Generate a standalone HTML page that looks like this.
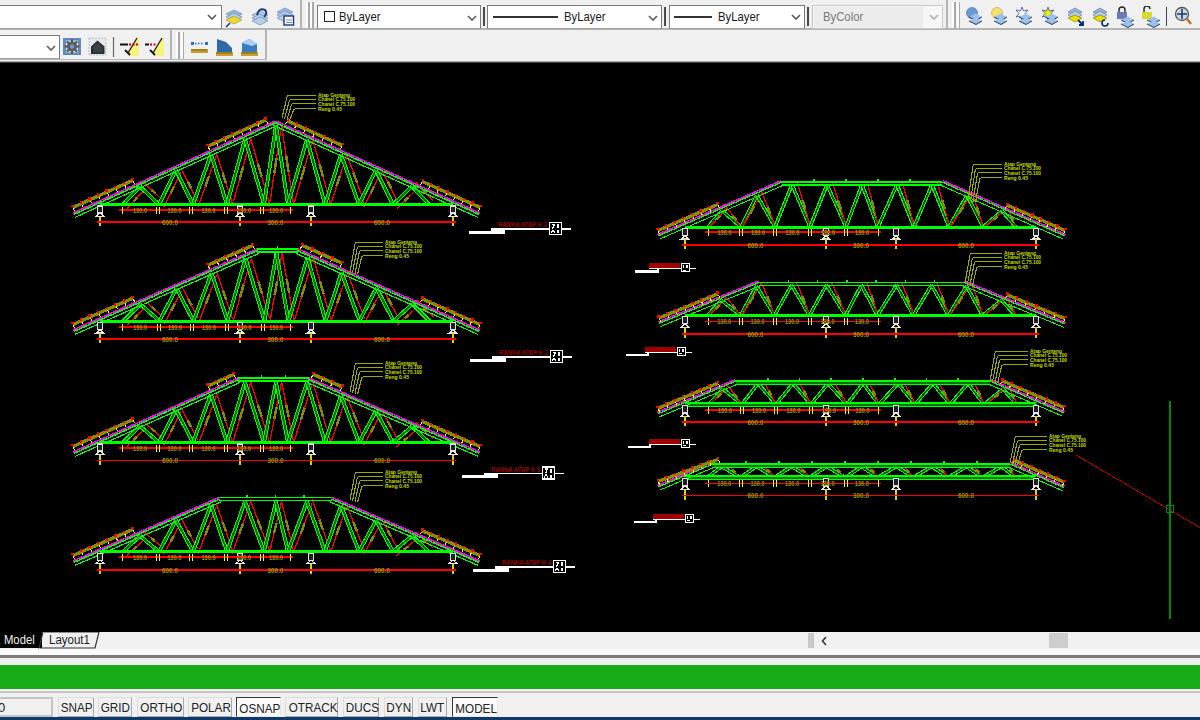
<!DOCTYPE html>
<html><head><meta charset="utf-8">
<style>
*{box-sizing:border-box}
html,body{margin:0;padding:0;width:1200px;height:720px;overflow:hidden;background:#f0f0f0;font-family:"Liberation Sans",sans-serif;}
.abs{position:absolute}
.combo{position:absolute;background:#fff;border:1px solid #7a7a7a;border-bottom-color:#a0a0a0}
.chev{position:absolute;width:6px;height:6px;border-right:1.3px solid #555;border-bottom:1.3px solid #555;transform:rotate(45deg)}
.ctext{position:absolute;font-size:13px;color:#1a1a1a;top:3px;transform:scaleX(.87);transform-origin:0 0;white-space:nowrap}
.vsep{position:absolute;width:1px;background:#a0a0a0}
.grip{position:absolute;width:3.5px;background:linear-gradient(to right,#fbfbfb 0 2px,#a8a8a8 2px 3.5px)}
.btn{position:absolute;top:697px;height:20px;border:1px solid #dcdcdc;border-right-color:#a9a9a9;border-bottom-color:#a9a9a9;background:#f0f0f0;font-size:13px;color:#222;text-align:center;line-height:19px;white-space:nowrap}
.btn span{display:inline-block;transform:scaleX(.9)}
.btn.on{border:1px solid #e8e8e8;border-top:1.5px solid #3a3a3a;border-left:1.5px solid #3a3a3a;background:#fafafa;line-height:21px}
#cv{position:absolute;left:0;top:62px;width:1200px;height:570px;background:#000}
svg text{font-family:"Liberation Sans",sans-serif}
</style></head><body>
<!-- toolbar row 1 -->
<div class="abs" style="left:0;top:28px;width:1200px;height:1.5px;background:#b4b4b4"></div>
<div class="combo" style="left:-2px;top:5px;width:224px;height:24px"></div>
<!-- layer icons row1 -->
<svg class="abs" style="left:224px;top:6px" width="72" height="22" viewBox="0 0 72 22">
 <g><path d="M2 8 L10 4 L18 8 L10 12Z" fill="#9ab8de" stroke="#5a7ab0" stroke-width=".6"/><path d="M2 11 L10 7 L18 11 L10 15Z" fill="#b8cfe8" stroke="#5a7ab0" stroke-width=".6"/><path d="M2 14 L10 10 L18 14 L10 18Z" fill="#e8d83a" stroke="#a09000" stroke-width=".6"/><path d="M2 21 L6 17" stroke="#1a3a7a" stroke-width="1.6"/></g>
 <g transform="translate(26,0)"><path d="M2 9 L10 5 L18 9 L10 13Z" fill="#b8cfe8" stroke="#5a7ab0" stroke-width=".6"/><path d="M2 12 L10 8 L18 12 L10 16Z" fill="#b8cfe8" stroke="#5a7ab0" stroke-width=".6"/><path d="M2 15 L10 11 L18 15 L10 19Z" fill="#b8cfe8" stroke="#5a7ab0" stroke-width=".6"/><path d="M7 9 Q9 1 15 4 Q18 7 14 11" fill="none" stroke="#1a3a7a" stroke-width="2"/></g>
 <g transform="translate(52,0)"><path d="M1 6 L9 2 L17 6 L9 10Z" fill="#9ab8de" stroke="#5a7ab0" stroke-width=".6"/><path d="M1 9 L9 5 L17 9 L9 13Z" fill="#b8cfe8" stroke="#5a7ab0" stroke-width=".6"/><path d="M1 12 L9 8 L17 12 L9 16Z" fill="#b8cfe8" stroke="#5a7ab0" stroke-width=".6"/><rect x="8" y="10" width="9.5" height="9" fill="#fff" stroke="#1a3a7a" stroke-width="1.4"/><line x1="10" y1="14" x2="16" y2="14" stroke="#6a8ac0"/><line x1="10" y1="16.5" x2="16" y2="16.5" stroke="#6a8ac0"/></g>
</svg>
<div class="vsep" style="left:300px;top:0;height:29px;background:#b4b4b4;width:2px"></div>
<div class="combo" style="left:317px;top:5px;width:164px;height:24px">
  <div class="abs" style="left:6px;top:5px;width:11px;height:11px;border:1.3px solid #222"></div>
  <div class="ctext" style="left:21px">ByLayer</div>
  
</div>
<div class="vsep" style="left:483px;top:7px;height:19px;width:1.5px;background:#4a4a4a"></div>
<div class="combo" style="left:487px;top:5px;width:175px;height:24px">
  <div class="abs" style="left:5px;top:10px;width:65px;height:1.5px;background:#333"></div>
  <div class="ctext" style="left:76px">ByLayer</div>
  
</div>
<div class="vsep" style="left:664px;top:7px;height:19px;width:1.5px;background:#4a4a4a"></div>
<div class="combo" style="left:669px;top:5px;width:136px;height:24px">
  <div class="abs" style="left:4px;top:10px;width:38px;height:1.5px;background:#333"></div>
  <div class="ctext" style="left:48px">ByLayer</div>
  
</div>
<div class="vsep" style="left:807px;top:7px;height:19px;width:1.5px;background:#4a4a4a"></div>
<div class="combo" style="left:812px;top:5px;width:131px;height:24px;border-color:#c8c8c8;background:#f6f6f6">
  <div class="abs" style="left:1px;top:1px;width:109px;height:21px;background:#ececec"></div>
  <div class="ctext" style="left:10px;color:#7a7a7a">ByColor</div>
  
</div>
<div class="vsep" style="left:946px;top:0;height:29px;background:#b4b4b4;width:2px"></div>
<svg class="abs" style="left:964px;top:6px" width="236" height="22" viewBox="0 0 236 22">
 <g><circle cx="8" cy="7" r="5.5" fill="#6a9ad0" stroke="#3a6aa0" stroke-width=".6"/><g transform="translate(6,6)"><path d="M-1 5 L6 1.5 L12 5 L6 8.5Z" fill="#9cc0ea"/><path d="M-1 5 L6 8.5 L12 5" fill="none" stroke="#2a3a5a" stroke-width="1"/><path d="M-1 9 L6 5.5 L12 9 L6 12.5Z" fill="#9cc0ea"/><path d="M-1 9 L6 12.5 L12 9" fill="none" stroke="#2a3a5a" stroke-width="1"/></g></g>
 <g transform="translate(25,0)"><circle cx="8" cy="7" r="5.5" fill="#f4e070" stroke="#b0a040" stroke-width=".6"/><g transform="translate(6,6)"><path d="M-1 5 L6 1.5 L12 5 L6 8.5Z" fill="#9cc0ea"/><path d="M-1 5 L6 8.5 L12 5" fill="none" stroke="#2a3a5a" stroke-width="1"/><path d="M-1 9 L6 5.5 L12 9 L6 12.5Z" fill="#9cc0ea"/><path d="M-1 9 L6 12.5 L12 9" fill="none" stroke="#2a3a5a" stroke-width="1"/></g></g>
 <g transform="translate(50,0)"><path d="M8 1 L9.5 5 L14 4 L11 7.5 L14 11 L9.5 10 L8 14 L6.5 10 L2 11 L5 7.5 L2 4 L6.5 5Z" fill="#fff" stroke="#4a5ab0" stroke-width=".9"/><g transform="translate(6,6)"><path d="M-1 5 L6 1.5 L12 5 L6 8.5Z" fill="#9cc0ea"/><path d="M-1 5 L6 8.5 L12 5" fill="none" stroke="#2a3a5a" stroke-width="1"/><path d="M-1 9 L6 5.5 L12 9 L6 12.5Z" fill="#9cc0ea"/><path d="M-1 9 L6 12.5 L12 9" fill="none" stroke="#2a3a5a" stroke-width="1"/></g></g>
 <g transform="translate(76,0)"><path d="M8 1 L9.5 5 L14 4 L11 7.5 L14 11 L9.5 10 L8 14 L6.5 10 L2 11 L5 7.5 L2 4 L6.5 5Z" fill="#f0f000" stroke="#4a5ab0" stroke-width=".9"/><g transform="translate(6,6)"><path d="M-1 5 L6 1.5 L12 5 L6 8.5Z" fill="#9cc0ea"/><path d="M-1 5 L6 8.5 L12 5" fill="none" stroke="#2a3a5a" stroke-width="1"/><path d="M-1 9 L6 5.5 L12 9 L6 12.5Z" fill="#9cc0ea"/><path d="M-1 9 L6 12.5 L12 9" fill="none" stroke="#2a3a5a" stroke-width="1"/></g></g>
 <g transform="translate(102,0)"><path d="M2 6 L9 2 L16 6 L9 10Z" fill="#9ab8de" stroke="#3a5a90" stroke-width=".5"/><path d="M2 9 L9 5 L16 9 L9 13Z" fill="#b8cfe8" stroke="#3a5a90" stroke-width=".5"/><path d="M2 12 L9 9 L16 12 L9 16Z" fill="#e8e000" stroke="#807000" stroke-width=".6"/><path d="M12 14 L17 19 M17 15 L17 19 L13 19" stroke="#0a2a6a" stroke-width="1.8" fill="none"/></g>
 <g transform="translate(127,0)"><path d="M2 6 L9 2 L16 6 L9 10Z" fill="#9ab8de" stroke="#3a5a90" stroke-width=".5"/><path d="M2 9 L9 5 L16 9 L9 13Z" fill="#b8cfe8" stroke="#3a5a90" stroke-width=".5"/><path d="M2 12 L9 9 L16 12 L9 16Z" fill="#e8e000" stroke="#807000" stroke-width=".6"/><path d="M14 14 A3 3 0 1 0 17 17" stroke="#0a2a6a" stroke-width="1.6" fill="none"/></g>
 <g transform="translate(152,0)"><path d="M3 6 V4 A3 3 0 0 1 9 4 V6" stroke="#222" stroke-width="1.4" fill="none"/><rect x="1" y="6" width="10" height="7" fill="#6a7ab8"/><g transform="translate(6,9)"><path d="M-1 5 L6 1.5 L12 5 L6 8.5Z" fill="#9cc0ea"/><path d="M-1 5 L6 8.5 L12 5" fill="none" stroke="#2a3a5a" stroke-width="1"/><path d="M-1 9 L6 5.5 L12 9 L6 12.5Z" fill="#9cc0ea"/><path d="M-1 9 L6 12.5 L12 9" fill="none" stroke="#2a3a5a" stroke-width="1"/></g></g>
 <g transform="translate(177,0)"><path d="M3 6 V3 A3 3 0 0 1 9 3" stroke="#222" stroke-width="1.4" fill="none"/><rect x="1" y="6" width="10" height="7" fill="#d8d830"/><g transform="translate(7,9)"><path d="M-1 5 L6 1.5 L12 5 L6 8.5Z" fill="#9cc0ea"/><path d="M-1 5 L6 8.5 L12 5" fill="none" stroke="#2a3a5a" stroke-width="1"/><path d="M-1 9 L6 5.5 L12 9 L6 12.5Z" fill="#9cc0ea"/><path d="M-1 9 L6 12.5 L12 9" fill="none" stroke="#2a3a5a" stroke-width="1"/></g></g>
 <line x1="202.5" y1="1" x2="202.5" y2="20" stroke="#444" stroke-width="1"/>
 <g transform="translate(210,0)"><circle cx="8" cy="8" r="6.5" fill="#c8d8e8" stroke="#555" stroke-width="1.3"/><path d="M8 3 V13 M3 8 H13" stroke="#1a3a6a" stroke-width="1.6"/><line x1="13" y1="13" x2="17" y2="18" stroke="#c07020" stroke-width="2.5"/></g>
</svg>
<!-- toolbar row 2 -->
<div class="abs" style="left:0;top:58.5px;width:267px;height:1.5px;background:#b4b4b4"></div>
<div class="abs" style="left:0;top:61px;width:1200px;height:1px;background:#a8a8a8"></div>
<div class="abs" style="left:170px;top:30px;width:2px;height:30px;background:#b4b4b4"></div>
<div class="combo" style="left:-2px;top:35px;width:62px;height:24px"></div>
<svg class="abs" style="left:62px;top:37px" width="200" height="20" viewBox="0 0 200 20">
 <g><rect x="1" y="1" width="18" height="17" fill="#5e8cbc"/><rect x="4" y="3.5" width="12" height="12" fill="#dfe6ee"/><rect x="8.8" y="2.2" width="2.4" height="3" fill="#5a5a5a" transform="rotate(0 10 9.5)"/><rect x="8.8" y="2.2" width="2.4" height="3" fill="#5a5a5a" transform="rotate(45 10 9.5)"/><rect x="8.8" y="2.2" width="2.4" height="3" fill="#5a5a5a" transform="rotate(90 10 9.5)"/><rect x="8.8" y="2.2" width="2.4" height="3" fill="#5a5a5a" transform="rotate(135 10 9.5)"/><rect x="8.8" y="2.2" width="2.4" height="3" fill="#5a5a5a" transform="rotate(180 10 9.5)"/><rect x="8.8" y="2.2" width="2.4" height="3" fill="#5a5a5a" transform="rotate(225 10 9.5)"/><rect x="8.8" y="2.2" width="2.4" height="3" fill="#5a5a5a" transform="rotate(270 10 9.5)"/><rect x="8.8" y="2.2" width="2.4" height="3" fill="#5a5a5a" transform="rotate(315 10 9.5)"/><circle cx="10" cy="9.5" r="5" fill="#5a5a5a"/><circle cx="10" cy="9.5" r="2.3" fill="#6a9ad0"/></g>
 <g transform="translate(26,0)"><rect x="1" y="1" width="17" height="17" fill="#e4e8ec" stroke="#b8c0c8" stroke-dasharray="2 1"/><path d="M3 9.5 L9.5 3.5 L16.5 9.5 V17 H3Z" fill="#2a2e33"/><path d="M5 10 L9.5 6 L14.5 10 V15.5 H5Z" fill="#3a4048"/></g>
 <line x1="51.5" y1="0" x2="51.5" y2="20" stroke="#666" stroke-width="1.2"/>
 <g transform="translate(58,0)"><path d="M17 1 L19 1 L19 19 L10 19 L8 16Z" fill="#f6f27a"/><path d="M17 1 L8 16" stroke="#222" stroke-width="1.4"/><path d="M0 7.5 H8" stroke="#111" stroke-width="2"/><path d="M9 7.5 H18" stroke="#c00" stroke-width="1.8" stroke-dasharray="2 1.5"/><path d="M5 13 L10 18" stroke="#111" stroke-width="1.8"/></g>
 <g transform="translate(83,0)"><path d="M17 1 L19 1 L19 19 L10 19 L8 16Z" fill="#f6f27a"/><path d="M17 1 L8 16" stroke="#222" stroke-width="1.4"/><path d="M0 7.5 H4" stroke="#111" stroke-width="2"/><path d="M5 7.5 H12" stroke="#c00" stroke-width="1.8" stroke-dasharray="2 1.5"/><path d="M5 13 L10 18" stroke="#111" stroke-width="1.8"/></g>
 <g transform="translate(128,0)"><rect x="1" y="5" width="3" height="3" fill="#2a70c0"/><rect x="15" y="5" width="3" height="3" fill="#2a70c0"/><path d="M5 6.5 H14" stroke="#2a70c0" stroke-dasharray="1.5 1.5" stroke-width="1.3"/><rect x="1" y="12" width="17" height="4" fill="#c8a030"/><path d="M2 12 V14 M4 12 V14 M6 12 V14 M8 12 V14 M10 12 V14 M12 12 V14 M14 12 V14 M16 12 V14" stroke="#5a4000" stroke-width=".7"/></g>
 <g transform="translate(153,0)"><path d="M2 2 L11 5 L17 11 V15 H2Z" fill="#2e6aa8"/><rect x="1" y="15" width="17" height="4" fill="#c8a030"/><path d="M2 15 V17 M4 15 V17 M6 15 V17 M8 15 V17 M10 15 V17 M12 15 V17 M14 15 V17 M16 15 V17" stroke="#5a4000" stroke-width=".7"/></g>
 <g transform="translate(178,0)"><path d="M2 6 L9 2 L17 7 V15 H2Z" fill="#3a7ac0"/><path d="M2 6 L9 2 L17 7 L12 9Z" fill="#a8d0f4"/><rect x="1" y="15" width="17" height="4" fill="#c8a030"/><path d="M2 15 V17 M4 15 V17 M6 15 V17 M8 15 V17 M10 15 V17 M12 15 V17 M14 15 V17 M16 15 V17" stroke="#5a4000" stroke-width=".7"/></g>
</svg>

<div class="abs" style="left:265px;top:30px;width:2px;height:30px;background:#b4b4b4"></div>
<svg class="abs" style="left:207px;top:14px" width="11" height="7"><path d="M1 1 L5 5 L9 1" fill="none" stroke="#606060" stroke-width="1.7"/></svg>
<svg class="abs" style="left:45.5px;top:45px" width="11" height="7"><path d="M1 1 L5 5 L9 1" fill="none" stroke="#606060" stroke-width="1.7"/></svg>
<svg class="abs" style="left:466.5px;top:14.5px" width="11" height="7"><path d="M1 1 L5 5 L9 1" fill="none" stroke="#606060" stroke-width="1.7"/></svg>
<svg class="abs" style="left:648px;top:14.5px" width="11" height="7"><path d="M1 1 L5 5 L9 1" fill="none" stroke="#606060" stroke-width="1.7"/></svg>
<svg class="abs" style="left:790.5px;top:14px" width="11" height="7"><path d="M1 1 L5 5 L9 1" fill="none" stroke="#606060" stroke-width="1.7"/></svg>
<svg class="abs" style="left:928.5px;top:14px" width="11" height="7"><path d="M1 1 L5 5 L9 1" fill="none" stroke="#b0b0b0" stroke-width="1.7"/></svg>
<div class="grip" style="left:306px;top:2px;height:26px"></div>
<div class="grip" style="left:310.3px;top:2px;height:26px"></div>
<div class="grip" style="left:952px;top:2px;height:26px"></div>
<div class="grip" style="left:956.5px;top:2px;height:26px"></div>
<div class="grip" style="left:176.3px;top:32px;height:27px"></div>
<div class="grip" style="left:180.8px;top:32px;height:27px"></div>
<!-- canvas -->
<div id="cv"><div class="abs" style="left:0;top:0;width:1200px;height:1px;background:#404040"></div><svg width="1200" height="570" viewBox="0 62 1200 570" style="display:block" shape-rendering="crispEdges">
<line x1="123" y1="204.5" x2="140" y2="186.6" stroke="#00ff00" stroke-width="3.8"/>
<line x1="123" y1="204.5" x2="140" y2="186.6" stroke="#007000" stroke-width="1.9"/>
<line x1="127" y1="208.3" x2="144" y2="190.3" stroke="#ff0000" stroke-width="1.3"/>
<line x1="133.8" y1="201.1" x2="137.2" y2="197.5" stroke="#8a8a00" stroke-width="2.5"/>
<line x1="140" y1="186.6" x2="159" y2="204.5" stroke="#00ff00" stroke-width="3.8"/>
<line x1="140" y1="186.6" x2="159" y2="204.5" stroke="#007000" stroke-width="1.9"/>
<line x1="143.8" y1="182.6" x2="162.8" y2="200.5" stroke="#ff0000" stroke-width="1.3"/>
<line x1="151.4" y1="189.7" x2="155.2" y2="193.3" stroke="#8a8a00" stroke-width="2.5"/>
<line x1="159" y1="204.5" x2="176" y2="170.2" stroke="#00ff00" stroke-width="3.8"/>
<line x1="159" y1="204.5" x2="176" y2="170.2" stroke="#007000" stroke-width="1.9"/>
<line x1="163.9" y1="206.9" x2="180.9" y2="172.6" stroke="#ff0000" stroke-width="1.3"/>
<line x1="170.7" y1="193.2" x2="174.1" y2="186.4" stroke="#8a8a00" stroke-width="2.5"/>
<line x1="176" y1="170.2" x2="193" y2="204.5" stroke="#00ff00" stroke-width="3.8"/>
<line x1="176" y1="170.2" x2="193" y2="204.5" stroke="#007000" stroke-width="1.9"/>
<line x1="180.9" y1="167.8" x2="197.9" y2="202.1" stroke="#ff0000" stroke-width="1.3"/>
<line x1="187.7" y1="181.5" x2="191.1" y2="188.3" stroke="#8a8a00" stroke-width="2.5"/>
<line x1="193" y1="204.5" x2="211" y2="154.3" stroke="#00ff00" stroke-width="3.8"/>
<line x1="193" y1="204.5" x2="211" y2="154.3" stroke="#007000" stroke-width="1.9"/>
<line x1="198.2" y1="206.4" x2="216.2" y2="156.2" stroke="#ff0000" stroke-width="1.3"/>
<line x1="205.4" y1="186.3" x2="209" y2="176.2" stroke="#8a8a00" stroke-width="2.5"/>
<line x1="211" y1="154.3" x2="227" y2="204.5" stroke="#00ff00" stroke-width="3.8"/>
<line x1="211" y1="154.3" x2="227" y2="204.5" stroke="#007000" stroke-width="1.9"/>
<line x1="216.2" y1="152.6" x2="232.2" y2="202.8" stroke="#ff0000" stroke-width="1.3"/>
<line x1="222.6" y1="172.7" x2="225.8" y2="182.8" stroke="#8a8a00" stroke-width="2.5"/>
<line x1="227" y1="204.5" x2="245" y2="138.9" stroke="#00ff00" stroke-width="3.8"/>
<line x1="227" y1="204.5" x2="245" y2="138.9" stroke="#007000" stroke-width="1.9"/>
<line x1="232.3" y1="206" x2="250.3" y2="140.3" stroke="#ff0000" stroke-width="1.3"/>
<line x1="239.5" y1="179.7" x2="243.1" y2="166.6" stroke="#8a8a00" stroke-width="2.5"/>
<line x1="245" y1="138.9" x2="264" y2="204.5" stroke="#00ff00" stroke-width="3.8"/>
<line x1="245" y1="138.9" x2="264" y2="204.5" stroke="#007000" stroke-width="1.9"/>
<line x1="250.3" y1="137.3" x2="269.3" y2="203" stroke="#ff0000" stroke-width="1.3"/>
<line x1="257.9" y1="163.6" x2="261.7" y2="176.7" stroke="#8a8a00" stroke-width="2.5"/>
<line x1="264" y1="204.5" x2="276" y2="125.2" stroke="#00ff00" stroke-width="3.8"/>
<line x1="264" y1="204.5" x2="276" y2="125.2" stroke="#007000" stroke-width="1.9"/>
<line x1="269.4" y1="205.3" x2="281.4" y2="126" stroke="#ff0000" stroke-width="1.3"/>
<line x1="274.2" y1="173.6" x2="276.6" y2="157.8" stroke="#8a8a00" stroke-width="2.5"/>
<line x1="276" y1="125.2" x2="288" y2="204.5" stroke="#00ff00" stroke-width="3.8"/>
<line x1="276" y1="125.2" x2="288" y2="204.5" stroke="#007000" stroke-width="1.9"/>
<line x1="281.4" y1="124.4" x2="293.4" y2="203.7" stroke="#ff0000" stroke-width="1.3"/>
<line x1="286.2" y1="156.1" x2="288.6" y2="172" stroke="#8a8a00" stroke-width="2.5"/>
<line x1="288" y1="204.5" x2="307" y2="139.2" stroke="#00ff00" stroke-width="3.8"/>
<line x1="288" y1="204.5" x2="307" y2="139.2" stroke="#007000" stroke-width="1.9"/>
<line x1="293.3" y1="206" x2="312.3" y2="140.7" stroke="#ff0000" stroke-width="1.3"/>
<line x1="300.9" y1="179.9" x2="304.7" y2="166.8" stroke="#8a8a00" stroke-width="2.5"/>
<line x1="307" y1="139.2" x2="325" y2="204.5" stroke="#00ff00" stroke-width="3.8"/>
<line x1="307" y1="139.2" x2="325" y2="204.5" stroke="#007000" stroke-width="1.9"/>
<line x1="312.3" y1="137.7" x2="330.3" y2="203" stroke="#ff0000" stroke-width="1.3"/>
<line x1="319.5" y1="163.8" x2="323.1" y2="176.9" stroke="#8a8a00" stroke-width="2.5"/>
<line x1="325" y1="204.5" x2="341" y2="154.5" stroke="#00ff00" stroke-width="3.8"/>
<line x1="325" y1="204.5" x2="341" y2="154.5" stroke="#007000" stroke-width="1.9"/>
<line x1="330.2" y1="206.2" x2="346.2" y2="156.1" stroke="#ff0000" stroke-width="1.3"/>
<line x1="336.6" y1="186.2" x2="339.8" y2="176.2" stroke="#8a8a00" stroke-width="2.5"/>
<line x1="341" y1="154.5" x2="359" y2="204.5" stroke="#00ff00" stroke-width="3.8"/>
<line x1="341" y1="154.5" x2="359" y2="204.5" stroke="#007000" stroke-width="1.9"/>
<line x1="346.2" y1="152.6" x2="364.2" y2="202.6" stroke="#ff0000" stroke-width="1.3"/>
<line x1="353.4" y1="172.6" x2="357" y2="182.6" stroke="#8a8a00" stroke-width="2.5"/>
<line x1="359" y1="204.5" x2="376" y2="170.2" stroke="#00ff00" stroke-width="3.8"/>
<line x1="359" y1="204.5" x2="376" y2="170.2" stroke="#007000" stroke-width="1.9"/>
<line x1="363.9" y1="206.9" x2="380.9" y2="172.7" stroke="#ff0000" stroke-width="1.3"/>
<line x1="370.7" y1="193.2" x2="374.1" y2="186.4" stroke="#8a8a00" stroke-width="2.5"/>
<line x1="376" y1="170.2" x2="393" y2="204.5" stroke="#00ff00" stroke-width="3.8"/>
<line x1="376" y1="170.2" x2="393" y2="204.5" stroke="#007000" stroke-width="1.9"/>
<line x1="380.9" y1="167.8" x2="397.9" y2="202.1" stroke="#ff0000" stroke-width="1.3"/>
<line x1="387.7" y1="181.5" x2="391.1" y2="188.3" stroke="#8a8a00" stroke-width="2.5"/>
<line x1="393" y1="204.5" x2="412" y2="186.4" stroke="#00ff00" stroke-width="3.8"/>
<line x1="393" y1="204.5" x2="412" y2="186.4" stroke="#007000" stroke-width="1.9"/>
<line x1="396.8" y1="208.5" x2="415.8" y2="190.4" stroke="#ff0000" stroke-width="1.3"/>
<line x1="404.4" y1="201.2" x2="408.2" y2="197.6" stroke="#8a8a00" stroke-width="2.5"/>
<line x1="412" y1="186.4" x2="429" y2="204.5" stroke="#00ff00" stroke-width="3.8"/>
<line x1="412" y1="186.4" x2="429" y2="204.5" stroke="#007000" stroke-width="1.9"/>
<line x1="416" y1="182.6" x2="433" y2="200.7" stroke="#ff0000" stroke-width="1.3"/>
<line x1="422.8" y1="189.9" x2="426.2" y2="193.5" stroke="#8a8a00" stroke-width="2.5"/>
<line x1="100" y1="204.5" x2="453" y2="204.5" stroke="#00ff00" stroke-width="3"/>
<line x1="73.7" y1="214.5" x2="276.2" y2="122.5" stroke="#00ff00" stroke-width="1.5"/>
<line x1="75" y1="217.4" x2="277.5" y2="125.4" stroke="#00ff00" stroke-width="1.2"/>
<line x1="73" y1="213" x2="275.5" y2="121" stroke="#ff00ff" stroke-width="1.6"/>
<line x1="274.8" y1="122.5" x2="479.3" y2="214.5" stroke="#00ff00" stroke-width="1.5"/>
<line x1="273.5" y1="125.4" x2="478" y2="217.4" stroke="#00ff00" stroke-width="1.2"/>
<line x1="275.5" y1="121" x2="480" y2="213" stroke="#ff00ff" stroke-width="1.6"/>
<line x1="72.9" y1="207.5" x2="132.9" y2="180.3" stroke="#8c8c00" stroke-width="3.4"/>
<line x1="74.6" y1="211.2" x2="73.3" y2="208.4" stroke="#ffff00" stroke-width="1"/>
<rect x="71.1" y="205" width="2.4" height="2.4" fill="#ff0000"/>
<line x1="83.2" y1="207.3" x2="81.9" y2="204.6" stroke="#ffff00" stroke-width="1"/>
<rect x="79.7" y="201.1" width="2.4" height="2.4" fill="#ff0000"/>
<line x1="91.7" y1="203.4" x2="90.5" y2="200.7" stroke="#ffff00" stroke-width="1"/>
<rect x="88.3" y="197.2" width="2.4" height="2.4" fill="#ff0000"/>
<line x1="100.3" y1="199.5" x2="99.1" y2="196.8" stroke="#ffff00" stroke-width="1"/>
<rect x="96.8" y="193.3" width="2.4" height="2.4" fill="#ff0000"/>
<line x1="108.9" y1="195.6" x2="107.6" y2="192.9" stroke="#ffff00" stroke-width="1"/>
<rect x="105.4" y="189.4" width="2.4" height="2.4" fill="#ff0000"/>
<line x1="117.4" y1="191.7" x2="116.2" y2="189" stroke="#ffff00" stroke-width="1"/>
<rect x="114" y="185.5" width="2.4" height="2.4" fill="#ff0000"/>
<line x1="126" y1="187.8" x2="124.8" y2="185.1" stroke="#ffff00" stroke-width="1"/>
<rect x="122.5" y="181.6" width="2.4" height="2.4" fill="#ff0000"/>
<line x1="134.6" y1="183.9" x2="133.3" y2="181.2" stroke="#ffff00" stroke-width="1"/>
<rect x="131.1" y="177.7" width="2.4" height="2.4" fill="#ff0000"/>
<line x1="207.9" y1="146.2" x2="265.9" y2="119.9" stroke="#8c8c00" stroke-width="3.4"/>
<line x1="209.6" y1="149.8" x2="208.3" y2="147.1" stroke="#ffff00" stroke-width="1"/>
<rect x="206.1" y="143.6" width="2.4" height="2.4" fill="#ff0000"/>
<line x1="217.9" y1="146.1" x2="216.6" y2="143.4" stroke="#ffff00" stroke-width="1"/>
<rect x="214.4" y="139.9" width="2.4" height="2.4" fill="#ff0000"/>
<line x1="226.2" y1="142.3" x2="224.9" y2="139.6" stroke="#ffff00" stroke-width="1"/>
<rect x="222.7" y="136.1" width="2.4" height="2.4" fill="#ff0000"/>
<line x1="234.4" y1="138.6" x2="233.2" y2="135.8" stroke="#ffff00" stroke-width="1"/>
<rect x="231" y="132.3" width="2.4" height="2.4" fill="#ff0000"/>
<line x1="242.7" y1="134.8" x2="241.5" y2="132.1" stroke="#ffff00" stroke-width="1"/>
<rect x="239.3" y="128.6" width="2.4" height="2.4" fill="#ff0000"/>
<line x1="251" y1="131" x2="249.8" y2="128.3" stroke="#ffff00" stroke-width="1"/>
<rect x="247.5" y="124.8" width="2.4" height="2.4" fill="#ff0000"/>
<line x1="259.3" y1="127.3" x2="258.1" y2="124.5" stroke="#ffff00" stroke-width="1"/>
<rect x="255.8" y="121.1" width="2.4" height="2.4" fill="#ff0000"/>
<line x1="267.6" y1="123.5" x2="266.3" y2="120.8" stroke="#ffff00" stroke-width="1"/>
<rect x="264.1" y="117.3" width="2.4" height="2.4" fill="#ff0000"/>
<line x1="287.1" y1="120.7" x2="342.1" y2="145.5" stroke="#8c8c00" stroke-width="3.4"/>
<line x1="285.4" y1="124.4" x2="286.6" y2="121.6" stroke="#ffff00" stroke-width="1"/>
<rect x="286.5" y="118.1" width="2.4" height="2.4" fill="#ff0000"/>
<line x1="294.6" y1="128.5" x2="295.8" y2="125.7" stroke="#ffff00" stroke-width="1"/>
<rect x="295.6" y="122.3" width="2.4" height="2.4" fill="#ff0000"/>
<line x1="303.7" y1="132.6" x2="305" y2="129.9" stroke="#ffff00" stroke-width="1"/>
<rect x="304.8" y="126.4" width="2.4" height="2.4" fill="#ff0000"/>
<line x1="312.9" y1="136.7" x2="314.1" y2="134" stroke="#ffff00" stroke-width="1"/>
<rect x="314" y="130.5" width="2.4" height="2.4" fill="#ff0000"/>
<line x1="322.1" y1="140.9" x2="323.3" y2="138.1" stroke="#ffff00" stroke-width="1"/>
<rect x="323.1" y="134.6" width="2.4" height="2.4" fill="#ff0000"/>
<line x1="331.2" y1="145" x2="332.5" y2="142.2" stroke="#ffff00" stroke-width="1"/>
<rect x="332.3" y="138.8" width="2.4" height="2.4" fill="#ff0000"/>
<line x1="340.4" y1="149.1" x2="341.6" y2="146.4" stroke="#ffff00" stroke-width="1"/>
<rect x="341.5" y="142.9" width="2.4" height="2.4" fill="#ff0000"/>
<line x1="422.1" y1="181.4" x2="480.1" y2="207.5" stroke="#8c8c00" stroke-width="3.4"/>
<line x1="420.4" y1="185.1" x2="421.6" y2="182.4" stroke="#ffff00" stroke-width="1"/>
<rect x="421.5" y="178.9" width="2.4" height="2.4" fill="#ff0000"/>
<line x1="428.7" y1="188.8" x2="429.9" y2="186.1" stroke="#ffff00" stroke-width="1"/>
<rect x="429.8" y="182.6" width="2.4" height="2.4" fill="#ff0000"/>
<line x1="437" y1="192.6" x2="438.2" y2="189.8" stroke="#ffff00" stroke-width="1"/>
<rect x="438" y="186.3" width="2.4" height="2.4" fill="#ff0000"/>
<line x1="445.3" y1="196.3" x2="446.5" y2="193.5" stroke="#ffff00" stroke-width="1"/>
<rect x="446.3" y="190.1" width="2.4" height="2.4" fill="#ff0000"/>
<line x1="453.6" y1="200" x2="454.8" y2="197.3" stroke="#ffff00" stroke-width="1"/>
<rect x="454.6" y="193.8" width="2.4" height="2.4" fill="#ff0000"/>
<line x1="461.8" y1="203.7" x2="463.1" y2="201" stroke="#ffff00" stroke-width="1"/>
<rect x="462.9" y="197.5" width="2.4" height="2.4" fill="#ff0000"/>
<line x1="470.1" y1="207.5" x2="471.4" y2="204.7" stroke="#ffff00" stroke-width="1"/>
<rect x="471.2" y="201.2" width="2.4" height="2.4" fill="#ff0000"/>
<line x1="478.4" y1="211.2" x2="479.6" y2="208.5" stroke="#ffff00" stroke-width="1"/>
<rect x="479.5" y="205" width="2.4" height="2.4" fill="#ff0000"/>
<rect x="97.5" y="206" width="5" height="7" fill="#202020" stroke="#e0e0e0" stroke-width="1.2"/>
<path d="M96 216.5 L100 213 L104 216.5Z" fill="none" stroke="#e8e8e8" stroke-width="1.2"/>
<line x1="100" y1="216.5" x2="100" y2="226" stroke="#d8d800" stroke-width="1.2"/>
<rect x="237.5" y="206" width="5" height="7" fill="#202020" stroke="#e0e0e0" stroke-width="1.2"/>
<path d="M236 216.5 L240 213 L244 216.5Z" fill="none" stroke="#e8e8e8" stroke-width="1.2"/>
<line x1="240" y1="216.5" x2="240" y2="226" stroke="#d8d800" stroke-width="1.2"/>
<rect x="308.5" y="206" width="5" height="7" fill="#202020" stroke="#e0e0e0" stroke-width="1.2"/>
<path d="M307 216.5 L311 213 L315 216.5Z" fill="none" stroke="#e8e8e8" stroke-width="1.2"/>
<line x1="311" y1="216.5" x2="311" y2="226" stroke="#d8d800" stroke-width="1.2"/>
<rect x="450.5" y="206" width="5" height="7" fill="#202020" stroke="#e0e0e0" stroke-width="1.2"/>
<path d="M449 216.5 L453 213 L457 216.5Z" fill="none" stroke="#e8e8e8" stroke-width="1.2"/>
<line x1="453" y1="216.5" x2="453" y2="226" stroke="#d8d800" stroke-width="1.2"/>
<line x1="119" y1="210" x2="293" y2="210" stroke="#ff0000" stroke-width="1.2"/>
<line x1="122" y1="206.5" x2="122" y2="213.5" stroke="#ffff00" stroke-width="1"/>
<path d="M124.5 209 L122 210 L124.5 211Z" fill="#ff0000"/>
<line x1="156.5" y1="206.5" x2="156.5" y2="213.5" stroke="#ffff00" stroke-width="1"/>
<path d="M154 209 L156.5 210 L154 211Z" fill="#ff0000"/>
<line x1="159.5" y1="206.5" x2="159.5" y2="213.5" stroke="#ffff00" stroke-width="1"/>
<path d="M157 209 L159.5 210 L157 211Z" fill="#ff0000"/>
<line x1="189.5" y1="206.5" x2="189.5" y2="213.5" stroke="#ffff00" stroke-width="1"/>
<path d="M187 209 L189.5 210 L187 211Z" fill="#ff0000"/>
<line x1="192.5" y1="206.5" x2="192.5" y2="213.5" stroke="#ffff00" stroke-width="1"/>
<path d="M190 209 L192.5 210 L190 211Z" fill="#ff0000"/>
<line x1="224.5" y1="206.5" x2="224.5" y2="213.5" stroke="#ffff00" stroke-width="1"/>
<path d="M222 209 L224.5 210 L222 211Z" fill="#ff0000"/>
<line x1="227.5" y1="206.5" x2="227.5" y2="213.5" stroke="#ffff00" stroke-width="1"/>
<path d="M225 209 L227.5 210 L225 211Z" fill="#ff0000"/>
<line x1="260.5" y1="206.5" x2="260.5" y2="213.5" stroke="#ffff00" stroke-width="1"/>
<path d="M258 209 L260.5 210 L258 211Z" fill="#ff0000"/>
<line x1="263.5" y1="206.5" x2="263.5" y2="213.5" stroke="#ffff00" stroke-width="1"/>
<path d="M261 209 L263.5 210 L261 211Z" fill="#ff0000"/>
<line x1="290" y1="206.5" x2="290" y2="213.5" stroke="#ffff00" stroke-width="1"/>
<path d="M287.5 209 L290 210 L287.5 211Z" fill="#ff0000"/>
<text x="140" y="212.5" fill="#9a9a00" font-size="6.5" text-anchor="middle" font-weight="bold" textLength="14" lengthAdjust="spacingAndGlyphs">130.0</text>
<text x="174.5" y="212.5" fill="#9a9a00" font-size="6.5" text-anchor="middle" font-weight="bold" textLength="14" lengthAdjust="spacingAndGlyphs">130.0</text>
<text x="208.5" y="212.5" fill="#9a9a00" font-size="6.5" text-anchor="middle" font-weight="bold" textLength="14" lengthAdjust="spacingAndGlyphs">130.0</text>
<text x="244" y="212.5" fill="#9a9a00" font-size="6.5" text-anchor="middle" font-weight="bold" textLength="14" lengthAdjust="spacingAndGlyphs">130.0</text>
<text x="276" y="212.5" fill="#9a9a00" font-size="6.5" text-anchor="middle" font-weight="bold" textLength="14" lengthAdjust="spacingAndGlyphs">130.0</text>
<line x1="97" y1="222" x2="456" y2="222" stroke="#ff0000" stroke-width="1.3"/>
<text x="170" y="224.5" fill="#9a9a00" font-size="6.5" text-anchor="middle" font-weight="bold" textLength="16" lengthAdjust="spacingAndGlyphs">600.0</text>
<text x="275.5" y="224.5" fill="#9a9a00" font-size="6.5" text-anchor="middle" font-weight="bold" textLength="16" lengthAdjust="spacingAndGlyphs">300.0</text>
<text x="382" y="224.5" fill="#9a9a00" font-size="6.5" text-anchor="middle" font-weight="bold" textLength="16" lengthAdjust="spacingAndGlyphs">600.0</text>
<path d="M282 118 L287 96.9 Q287.3 95.4 289 95.4 L316 95.4" fill="none" stroke="#9aaa00" stroke-width="1.1"/>
<path d="M284.5 118.8 L289.2 101.1 Q289.5 99.6 291.2 99.6 L316 99.6" fill="none" stroke="#9aaa00" stroke-width="1.1"/>
<path d="M287 119.6 L291.4 104.8 Q291.7 103.3 293.4 103.3 L316 103.3" fill="none" stroke="#9aaa00" stroke-width="1.1"/>
<path d="M289.5 120.4 L293.6 110.2 Q293.9 108.8 295.6 108.8 L316 108.8" fill="none" stroke="#9aaa00" stroke-width="1.1"/>
<text x="318" y="96.6" fill="#c4dc00" font-size="5.4" font-weight="bold" textLength="32" lengthAdjust="spacingAndGlyphs">Atap Genteng</text>
<text x="318" y="101.1" fill="#c4dc00" font-size="5.4" font-weight="bold" textLength="37" lengthAdjust="spacingAndGlyphs">Chanel C.75.100</text>
<text x="318" y="105.8" fill="#c4dc00" font-size="5.4" font-weight="bold" textLength="37" lengthAdjust="spacingAndGlyphs">Chanel C.75.100</text>
<text x="318" y="110.8" fill="#c4dc00" font-size="5.4" font-weight="bold" textLength="24" lengthAdjust="spacingAndGlyphs">Reng 0.45</text>
<line x1="123.5" y1="321" x2="140.5" y2="304.3" stroke="#00ff00" stroke-width="3.8"/>
<line x1="123.5" y1="321" x2="140.5" y2="304.3" stroke="#007000" stroke-width="1.9"/>
<line x1="127.4" y1="324.9" x2="144.4" y2="308.2" stroke="#ff0000" stroke-width="1.3"/>
<line x1="134.2" y1="318.2" x2="137.6" y2="314.9" stroke="#8a8a00" stroke-width="2.5"/>
<line x1="140.5" y1="304.3" x2="159.5" y2="321" stroke="#00ff00" stroke-width="3.8"/>
<line x1="140.5" y1="304.3" x2="159.5" y2="321" stroke="#007000" stroke-width="1.9"/>
<line x1="144.1" y1="300.2" x2="163.1" y2="316.9" stroke="#ff0000" stroke-width="1.3"/>
<line x1="151.7" y1="306.8" x2="155.5" y2="310.2" stroke="#8a8a00" stroke-width="2.5"/>
<line x1="159.5" y1="321" x2="176.5" y2="288.4" stroke="#00ff00" stroke-width="3.8"/>
<line x1="159.5" y1="321" x2="176.5" y2="288.4" stroke="#007000" stroke-width="1.9"/>
<line x1="164.4" y1="323.5" x2="181.4" y2="291" stroke="#ff0000" stroke-width="1.3"/>
<line x1="171.2" y1="310.5" x2="174.6" y2="304" stroke="#8a8a00" stroke-width="2.5"/>
<line x1="176.5" y1="288.4" x2="193.5" y2="321" stroke="#00ff00" stroke-width="3.8"/>
<line x1="176.5" y1="288.4" x2="193.5" y2="321" stroke="#007000" stroke-width="1.9"/>
<line x1="181.4" y1="285.9" x2="198.4" y2="318.5" stroke="#ff0000" stroke-width="1.3"/>
<line x1="188.2" y1="298.9" x2="191.6" y2="305.4" stroke="#8a8a00" stroke-width="2.5"/>
<line x1="193.5" y1="321" x2="211.5" y2="273" stroke="#00ff00" stroke-width="3.8"/>
<line x1="193.5" y1="321" x2="211.5" y2="273" stroke="#007000" stroke-width="1.9"/>
<line x1="198.6" y1="322.9" x2="216.6" y2="275" stroke="#ff0000" stroke-width="1.3"/>
<line x1="205.8" y1="303.7" x2="209.4" y2="294.2" stroke="#8a8a00" stroke-width="2.5"/>
<line x1="211.5" y1="273" x2="227.5" y2="321" stroke="#00ff00" stroke-width="3.8"/>
<line x1="211.5" y1="273" x2="227.5" y2="321" stroke="#007000" stroke-width="1.9"/>
<line x1="216.7" y1="271.3" x2="232.7" y2="319.3" stroke="#ff0000" stroke-width="1.3"/>
<line x1="223.1" y1="290.5" x2="226.3" y2="300.1" stroke="#8a8a00" stroke-width="2.5"/>
<line x1="227.5" y1="321" x2="245.5" y2="258.1" stroke="#00ff00" stroke-width="3.8"/>
<line x1="227.5" y1="321" x2="245.5" y2="258.1" stroke="#007000" stroke-width="1.9"/>
<line x1="232.8" y1="322.5" x2="250.8" y2="259.6" stroke="#ff0000" stroke-width="1.3"/>
<line x1="240" y1="297.3" x2="243.6" y2="284.7" stroke="#8a8a00" stroke-width="2.5"/>
<line x1="245.5" y1="258.1" x2="264.5" y2="321" stroke="#00ff00" stroke-width="3.8"/>
<line x1="245.5" y1="258.1" x2="264.5" y2="321" stroke="#007000" stroke-width="1.9"/>
<line x1="250.8" y1="256.5" x2="269.8" y2="319.4" stroke="#ff0000" stroke-width="1.3"/>
<line x1="258.4" y1="281.6" x2="262.2" y2="294.2" stroke="#8a8a00" stroke-width="2.5"/>
<line x1="264.5" y1="321" x2="276.5" y2="253" stroke="#00ff00" stroke-width="3.8"/>
<line x1="264.5" y1="321" x2="276.5" y2="253" stroke="#007000" stroke-width="1.9"/>
<line x1="269.9" y1="322" x2="281.9" y2="254" stroke="#ff0000" stroke-width="1.3"/>
<line x1="274.7" y1="294.8" x2="277.1" y2="281.2" stroke="#8a8a00" stroke-width="2.5"/>
<line x1="276.5" y1="253" x2="288.5" y2="321" stroke="#00ff00" stroke-width="3.8"/>
<line x1="276.5" y1="253" x2="288.5" y2="321" stroke="#007000" stroke-width="1.9"/>
<line x1="281.9" y1="252" x2="293.9" y2="320" stroke="#ff0000" stroke-width="1.3"/>
<line x1="286.7" y1="279.2" x2="289.1" y2="292.8" stroke="#8a8a00" stroke-width="2.5"/>
<line x1="288.5" y1="321" x2="307.5" y2="257.2" stroke="#00ff00" stroke-width="3.8"/>
<line x1="288.5" y1="321" x2="307.5" y2="257.2" stroke="#007000" stroke-width="1.9"/>
<line x1="293.8" y1="322.6" x2="312.8" y2="258.8" stroke="#ff0000" stroke-width="1.3"/>
<line x1="301.4" y1="297.1" x2="305.2" y2="284.3" stroke="#8a8a00" stroke-width="2.5"/>
<line x1="307.5" y1="257.2" x2="325.5" y2="321" stroke="#00ff00" stroke-width="3.8"/>
<line x1="307.5" y1="257.2" x2="325.5" y2="321" stroke="#007000" stroke-width="1.9"/>
<line x1="312.8" y1="255.7" x2="330.8" y2="319.5" stroke="#ff0000" stroke-width="1.3"/>
<line x1="320" y1="281.2" x2="323.6" y2="294" stroke="#8a8a00" stroke-width="2.5"/>
<line x1="325.5" y1="321" x2="341.5" y2="272.4" stroke="#00ff00" stroke-width="3.8"/>
<line x1="325.5" y1="321" x2="341.5" y2="272.4" stroke="#007000" stroke-width="1.9"/>
<line x1="330.7" y1="322.7" x2="346.7" y2="274.1" stroke="#ff0000" stroke-width="1.3"/>
<line x1="337.1" y1="303.3" x2="340.3" y2="293.5" stroke="#8a8a00" stroke-width="2.5"/>
<line x1="341.5" y1="272.4" x2="359.5" y2="321" stroke="#00ff00" stroke-width="3.8"/>
<line x1="341.5" y1="272.4" x2="359.5" y2="321" stroke="#007000" stroke-width="1.9"/>
<line x1="346.7" y1="270.5" x2="364.7" y2="319.1" stroke="#ff0000" stroke-width="1.3"/>
<line x1="353.9" y1="289.9" x2="357.5" y2="299.6" stroke="#8a8a00" stroke-width="2.5"/>
<line x1="359.5" y1="321" x2="376.5" y2="287.9" stroke="#00ff00" stroke-width="3.8"/>
<line x1="359.5" y1="321" x2="376.5" y2="287.9" stroke="#007000" stroke-width="1.9"/>
<line x1="364.4" y1="323.5" x2="381.4" y2="290.5" stroke="#ff0000" stroke-width="1.3"/>
<line x1="371.2" y1="310.3" x2="374.6" y2="303.7" stroke="#8a8a00" stroke-width="2.5"/>
<line x1="376.5" y1="287.9" x2="393.5" y2="321" stroke="#00ff00" stroke-width="3.8"/>
<line x1="376.5" y1="287.9" x2="393.5" y2="321" stroke="#007000" stroke-width="1.9"/>
<line x1="381.4" y1="285.4" x2="398.4" y2="318.5" stroke="#ff0000" stroke-width="1.3"/>
<line x1="388.2" y1="298.6" x2="391.6" y2="305.3" stroke="#8a8a00" stroke-width="2.5"/>
<line x1="393.5" y1="321" x2="412.5" y2="304" stroke="#00ff00" stroke-width="3.8"/>
<line x1="393.5" y1="321" x2="412.5" y2="304" stroke="#007000" stroke-width="1.9"/>
<line x1="397.2" y1="325.1" x2="416.2" y2="308.1" stroke="#ff0000" stroke-width="1.3"/>
<line x1="404.8" y1="318.3" x2="408.6" y2="314.9" stroke="#8a8a00" stroke-width="2.5"/>
<line x1="412.5" y1="304" x2="429.5" y2="321" stroke="#00ff00" stroke-width="3.8"/>
<line x1="412.5" y1="304" x2="429.5" y2="321" stroke="#007000" stroke-width="1.9"/>
<line x1="416.4" y1="300.1" x2="433.4" y2="317.1" stroke="#ff0000" stroke-width="1.3"/>
<line x1="423.2" y1="306.9" x2="426.6" y2="310.3" stroke="#8a8a00" stroke-width="2.5"/>
<line x1="100" y1="321" x2="453" y2="321" stroke="#00ff00" stroke-width="3"/>
<line x1="73.6" y1="331.5" x2="257.6" y2="250.5" stroke="#00ff00" stroke-width="1.5"/>
<line x1="74.9" y1="334.4" x2="258.9" y2="253.4" stroke="#00ff00" stroke-width="1.2"/>
<line x1="73" y1="330" x2="257" y2="249" stroke="#ff00ff" stroke-width="1.6"/>
<line x1="257" y1="249" x2="298" y2="249" stroke="#00ff00" stroke-width="1.3"/>
<line x1="257" y1="252" x2="298" y2="252" stroke="#00ff00" stroke-width="1.3"/>
<line x1="277.5" y1="246" x2="277.5" y2="249" stroke="#00ff00" stroke-width="1.5"/>
<line x1="297.3" y1="250.5" x2="479.3" y2="331.5" stroke="#00ff00" stroke-width="1.5"/>
<line x1="296" y1="253.4" x2="478" y2="334.4" stroke="#00ff00" stroke-width="1.2"/>
<line x1="298" y1="249" x2="480" y2="330" stroke="#ff00ff" stroke-width="1.6"/>
<line x1="73" y1="324.5" x2="133" y2="298.1" stroke="#8c8c00" stroke-width="3.4"/>
<line x1="74.6" y1="328.2" x2="73.4" y2="325.5" stroke="#ffff00" stroke-width="1"/>
<rect x="71.2" y="322" width="2.4" height="2.4" fill="#ff0000"/>
<line x1="83.2" y1="324.4" x2="82" y2="321.7" stroke="#ffff00" stroke-width="1"/>
<rect x="79.8" y="318.2" width="2.4" height="2.4" fill="#ff0000"/>
<line x1="91.7" y1="320.7" x2="90.5" y2="317.9" stroke="#ffff00" stroke-width="1"/>
<rect x="88.3" y="314.4" width="2.4" height="2.4" fill="#ff0000"/>
<line x1="100.3" y1="316.9" x2="99.1" y2="314.1" stroke="#ffff00" stroke-width="1"/>
<rect x="96.9" y="310.7" width="2.4" height="2.4" fill="#ff0000"/>
<line x1="108.9" y1="313.1" x2="107.7" y2="310.4" stroke="#ffff00" stroke-width="1"/>
<rect x="105.5" y="306.9" width="2.4" height="2.4" fill="#ff0000"/>
<line x1="117.5" y1="309.3" x2="116.2" y2="306.6" stroke="#ffff00" stroke-width="1"/>
<rect x="114" y="303.1" width="2.4" height="2.4" fill="#ff0000"/>
<line x1="126" y1="305.6" x2="124.8" y2="302.8" stroke="#ffff00" stroke-width="1"/>
<rect x="122.6" y="299.3" width="2.4" height="2.4" fill="#ff0000"/>
<line x1="134.6" y1="301.8" x2="133.4" y2="299" stroke="#ffff00" stroke-width="1"/>
<rect x="131.2" y="295.6" width="2.4" height="2.4" fill="#ff0000"/>
<line x1="208" y1="265.1" x2="253" y2="245.3" stroke="#8c8c00" stroke-width="3.4"/>
<line x1="209.6" y1="268.8" x2="208.4" y2="266" stroke="#ffff00" stroke-width="1"/>
<rect x="206.2" y="262.5" width="2.4" height="2.4" fill="#ff0000"/>
<line x1="218.6" y1="264.8" x2="217.4" y2="262.1" stroke="#ffff00" stroke-width="1"/>
<rect x="215.2" y="258.6" width="2.4" height="2.4" fill="#ff0000"/>
<line x1="227.6" y1="260.9" x2="226.4" y2="258.1" stroke="#ffff00" stroke-width="1"/>
<rect x="224.2" y="254.6" width="2.4" height="2.4" fill="#ff0000"/>
<line x1="236.6" y1="256.9" x2="235.4" y2="254.1" stroke="#ffff00" stroke-width="1"/>
<rect x="233.2" y="250.7" width="2.4" height="2.4" fill="#ff0000"/>
<line x1="245.6" y1="252.9" x2="244.4" y2="250.2" stroke="#ffff00" stroke-width="1"/>
<rect x="242.2" y="246.7" width="2.4" height="2.4" fill="#ff0000"/>
<line x1="254.6" y1="249" x2="253.4" y2="246.2" stroke="#ffff00" stroke-width="1"/>
<rect x="251.2" y="242.7" width="2.4" height="2.4" fill="#ff0000"/>
<line x1="302" y1="245.3" x2="342" y2="263.1" stroke="#8c8c00" stroke-width="3.4"/>
<line x1="300.4" y1="249" x2="301.6" y2="246.2" stroke="#ffff00" stroke-width="1"/>
<rect x="301.4" y="242.8" width="2.4" height="2.4" fill="#ff0000"/>
<line x1="310.4" y1="253.4" x2="311.6" y2="250.7" stroke="#ffff00" stroke-width="1"/>
<rect x="311.4" y="247.2" width="2.4" height="2.4" fill="#ff0000"/>
<line x1="320.4" y1="257.9" x2="321.6" y2="255.1" stroke="#ffff00" stroke-width="1"/>
<rect x="321.4" y="251.7" width="2.4" height="2.4" fill="#ff0000"/>
<line x1="330.4" y1="262.3" x2="331.6" y2="259.6" stroke="#ffff00" stroke-width="1"/>
<rect x="331.4" y="256.1" width="2.4" height="2.4" fill="#ff0000"/>
<line x1="340.4" y1="266.8" x2="341.6" y2="264" stroke="#ffff00" stroke-width="1"/>
<rect x="341.4" y="260.6" width="2.4" height="2.4" fill="#ff0000"/>
<line x1="422" y1="298.7" x2="480" y2="324.5" stroke="#8c8c00" stroke-width="3.4"/>
<line x1="420.4" y1="302.4" x2="421.6" y2="299.6" stroke="#ffff00" stroke-width="1"/>
<rect x="421.4" y="296.2" width="2.4" height="2.4" fill="#ff0000"/>
<line x1="428.7" y1="306.1" x2="429.9" y2="303.3" stroke="#ffff00" stroke-width="1"/>
<rect x="429.7" y="299.8" width="2.4" height="2.4" fill="#ff0000"/>
<line x1="437" y1="309.8" x2="438.2" y2="307" stroke="#ffff00" stroke-width="1"/>
<rect x="438" y="303.5" width="2.4" height="2.4" fill="#ff0000"/>
<line x1="445.3" y1="313.4" x2="446.5" y2="310.7" stroke="#ffff00" stroke-width="1"/>
<rect x="446.3" y="307.2" width="2.4" height="2.4" fill="#ff0000"/>
<line x1="453.5" y1="317.1" x2="454.8" y2="314.4" stroke="#ffff00" stroke-width="1"/>
<rect x="454.6" y="310.9" width="2.4" height="2.4" fill="#ff0000"/>
<line x1="461.8" y1="320.8" x2="463.1" y2="318.1" stroke="#ffff00" stroke-width="1"/>
<rect x="462.9" y="314.6" width="2.4" height="2.4" fill="#ff0000"/>
<line x1="470.1" y1="324.5" x2="471.3" y2="321.8" stroke="#ffff00" stroke-width="1"/>
<rect x="471.2" y="318.3" width="2.4" height="2.4" fill="#ff0000"/>
<line x1="478.4" y1="328.2" x2="479.6" y2="325.5" stroke="#ffff00" stroke-width="1"/>
<rect x="479.4" y="322" width="2.4" height="2.4" fill="#ff0000"/>
<rect x="97.5" y="322.5" width="5" height="7" fill="#202020" stroke="#e0e0e0" stroke-width="1.2"/>
<path d="M96 333 L100 329.5 L104 333Z" fill="none" stroke="#e8e8e8" stroke-width="1.2"/>
<line x1="100" y1="333" x2="100" y2="343" stroke="#d8d800" stroke-width="1.2"/>
<rect x="237.5" y="322.5" width="5" height="7" fill="#202020" stroke="#e0e0e0" stroke-width="1.2"/>
<path d="M236 333 L240 329.5 L244 333Z" fill="none" stroke="#e8e8e8" stroke-width="1.2"/>
<line x1="240" y1="333" x2="240" y2="343" stroke="#d8d800" stroke-width="1.2"/>
<rect x="308.5" y="322.5" width="5" height="7" fill="#202020" stroke="#e0e0e0" stroke-width="1.2"/>
<path d="M307 333 L311 329.5 L315 333Z" fill="none" stroke="#e8e8e8" stroke-width="1.2"/>
<line x1="311" y1="333" x2="311" y2="343" stroke="#d8d800" stroke-width="1.2"/>
<rect x="450.5" y="322.5" width="5" height="7" fill="#202020" stroke="#e0e0e0" stroke-width="1.2"/>
<path d="M449 333 L453 329.5 L457 333Z" fill="none" stroke="#e8e8e8" stroke-width="1.2"/>
<line x1="453" y1="333" x2="453" y2="343" stroke="#d8d800" stroke-width="1.2"/>
<line x1="119" y1="327" x2="293" y2="327" stroke="#ff0000" stroke-width="1.2"/>
<line x1="122" y1="323.5" x2="122" y2="330.5" stroke="#ffff00" stroke-width="1"/>
<path d="M124.5 326 L122 327 L124.5 328Z" fill="#ff0000"/>
<line x1="157" y1="323.5" x2="157" y2="330.5" stroke="#ffff00" stroke-width="1"/>
<path d="M154.5 326 L157 327 L154.5 328Z" fill="#ff0000"/>
<line x1="160" y1="323.5" x2="160" y2="330.5" stroke="#ffff00" stroke-width="1"/>
<path d="M157.5 326 L160 327 L157.5 328Z" fill="#ff0000"/>
<line x1="190" y1="323.5" x2="190" y2="330.5" stroke="#ffff00" stroke-width="1"/>
<path d="M187.5 326 L190 327 L187.5 328Z" fill="#ff0000"/>
<line x1="193" y1="323.5" x2="193" y2="330.5" stroke="#ffff00" stroke-width="1"/>
<path d="M190.5 326 L193 327 L190.5 328Z" fill="#ff0000"/>
<line x1="225" y1="323.5" x2="225" y2="330.5" stroke="#ffff00" stroke-width="1"/>
<path d="M222.5 326 L225 327 L222.5 328Z" fill="#ff0000"/>
<line x1="228" y1="323.5" x2="228" y2="330.5" stroke="#ffff00" stroke-width="1"/>
<path d="M225.5 326 L228 327 L225.5 328Z" fill="#ff0000"/>
<line x1="261" y1="323.5" x2="261" y2="330.5" stroke="#ffff00" stroke-width="1"/>
<path d="M258.5 326 L261 327 L258.5 328Z" fill="#ff0000"/>
<line x1="264" y1="323.5" x2="264" y2="330.5" stroke="#ffff00" stroke-width="1"/>
<path d="M261.5 326 L264 327 L261.5 328Z" fill="#ff0000"/>
<line x1="290" y1="323.5" x2="290" y2="330.5" stroke="#ffff00" stroke-width="1"/>
<path d="M287.5 326 L290 327 L287.5 328Z" fill="#ff0000"/>
<text x="140.2" y="329.5" fill="#9a9a00" font-size="6.5" text-anchor="middle" font-weight="bold" textLength="14" lengthAdjust="spacingAndGlyphs">130.0</text>
<text x="175" y="329.5" fill="#9a9a00" font-size="6.5" text-anchor="middle" font-weight="bold" textLength="14" lengthAdjust="spacingAndGlyphs">130.0</text>
<text x="209" y="329.5" fill="#9a9a00" font-size="6.5" text-anchor="middle" font-weight="bold" textLength="14" lengthAdjust="spacingAndGlyphs">130.0</text>
<text x="244.5" y="329.5" fill="#9a9a00" font-size="6.5" text-anchor="middle" font-weight="bold" textLength="14" lengthAdjust="spacingAndGlyphs">130.0</text>
<text x="276.2" y="329.5" fill="#9a9a00" font-size="6.5" text-anchor="middle" font-weight="bold" textLength="14" lengthAdjust="spacingAndGlyphs">130.0</text>
<line x1="97" y1="339" x2="456" y2="339" stroke="#ff0000" stroke-width="1.3"/>
<text x="170" y="341.5" fill="#9a9a00" font-size="6.5" text-anchor="middle" font-weight="bold" textLength="16" lengthAdjust="spacingAndGlyphs">600.0</text>
<text x="275.5" y="341.5" fill="#9a9a00" font-size="6.5" text-anchor="middle" font-weight="bold" textLength="16" lengthAdjust="spacingAndGlyphs">300.0</text>
<text x="382" y="341.5" fill="#9a9a00" font-size="6.5" text-anchor="middle" font-weight="bold" textLength="16" lengthAdjust="spacingAndGlyphs">600.0</text>
<path d="M350 272 L355 243.9 Q355.3 242.4 357 242.4 L383 242.4" fill="none" stroke="#9aaa00" stroke-width="1.1"/>
<path d="M352.5 272.8 L357.2 248.1 Q357.5 246.6 359.2 246.6 L383 246.6" fill="none" stroke="#9aaa00" stroke-width="1.1"/>
<path d="M355 273.6 L359.4 251.8 Q359.7 250.3 361.4 250.3 L383 250.3" fill="none" stroke="#9aaa00" stroke-width="1.1"/>
<path d="M357.5 274.4 L361.6 257.2 Q361.9 255.8 363.6 255.8 L383 255.8" fill="none" stroke="#9aaa00" stroke-width="1.1"/>
<text x="385" y="243.6" fill="#c4dc00" font-size="5.4" font-weight="bold" textLength="32" lengthAdjust="spacingAndGlyphs">Atap Genteng</text>
<text x="385" y="248.1" fill="#c4dc00" font-size="5.4" font-weight="bold" textLength="37" lengthAdjust="spacingAndGlyphs">Chanel C.75.100</text>
<text x="385" y="252.8" fill="#c4dc00" font-size="5.4" font-weight="bold" textLength="37" lengthAdjust="spacingAndGlyphs">Chanel C.75.100</text>
<text x="385" y="257.8" fill="#c4dc00" font-size="5.4" font-weight="bold" textLength="24" lengthAdjust="spacingAndGlyphs">Reng 0.45</text>
<line x1="123" y1="442.5" x2="140" y2="426" stroke="#00ff00" stroke-width="3.8"/>
<line x1="123" y1="442.5" x2="140" y2="426" stroke="#007000" stroke-width="1.9"/>
<line x1="126.8" y1="446.4" x2="143.8" y2="429.9" stroke="#ff0000" stroke-width="1.3"/>
<line x1="133.6" y1="439.8" x2="137" y2="436.5" stroke="#8a8a00" stroke-width="2.5"/>
<line x1="140" y1="426" x2="159" y2="442.5" stroke="#00ff00" stroke-width="3.8"/>
<line x1="140" y1="426" x2="159" y2="442.5" stroke="#007000" stroke-width="1.9"/>
<line x1="143.6" y1="421.8" x2="162.6" y2="438.4" stroke="#ff0000" stroke-width="1.3"/>
<line x1="151.2" y1="428.4" x2="155" y2="431.7" stroke="#8a8a00" stroke-width="2.5"/>
<line x1="159" y1="442.5" x2="176" y2="409.8" stroke="#00ff00" stroke-width="3.8"/>
<line x1="159" y1="442.5" x2="176" y2="409.8" stroke="#007000" stroke-width="1.9"/>
<line x1="163.9" y1="445" x2="180.9" y2="412.3" stroke="#ff0000" stroke-width="1.3"/>
<line x1="170.7" y1="432" x2="174.1" y2="425.4" stroke="#8a8a00" stroke-width="2.5"/>
<line x1="176" y1="409.8" x2="193" y2="442.5" stroke="#00ff00" stroke-width="3.8"/>
<line x1="176" y1="409.8" x2="193" y2="442.5" stroke="#007000" stroke-width="1.9"/>
<line x1="180.9" y1="407.3" x2="197.9" y2="440" stroke="#ff0000" stroke-width="1.3"/>
<line x1="187.7" y1="420.3" x2="191.1" y2="426.9" stroke="#8a8a00" stroke-width="2.5"/>
<line x1="193" y1="442.5" x2="211" y2="394.1" stroke="#00ff00" stroke-width="3.8"/>
<line x1="193" y1="442.5" x2="211" y2="394.1" stroke="#007000" stroke-width="1.9"/>
<line x1="198.2" y1="444.4" x2="216.2" y2="396" stroke="#ff0000" stroke-width="1.3"/>
<line x1="205.4" y1="425.1" x2="209" y2="415.4" stroke="#8a8a00" stroke-width="2.5"/>
<line x1="211" y1="394.1" x2="227" y2="442.5" stroke="#00ff00" stroke-width="3.8"/>
<line x1="211" y1="394.1" x2="227" y2="442.5" stroke="#007000" stroke-width="1.9"/>
<line x1="216.2" y1="392.4" x2="232.2" y2="440.8" stroke="#ff0000" stroke-width="1.3"/>
<line x1="222.6" y1="411.7" x2="225.8" y2="421.4" stroke="#8a8a00" stroke-width="2.5"/>
<line x1="227" y1="442.5" x2="245" y2="382" stroke="#00ff00" stroke-width="3.8"/>
<line x1="227" y1="442.5" x2="245" y2="382" stroke="#007000" stroke-width="1.9"/>
<line x1="232.3" y1="444.1" x2="250.3" y2="383.6" stroke="#ff0000" stroke-width="1.3"/>
<line x1="239.5" y1="419.9" x2="243.1" y2="407.8" stroke="#8a8a00" stroke-width="2.5"/>
<line x1="245" y1="382" x2="264" y2="442.5" stroke="#00ff00" stroke-width="3.8"/>
<line x1="245" y1="382" x2="264" y2="442.5" stroke="#007000" stroke-width="1.9"/>
<line x1="250.2" y1="380.4" x2="269.2" y2="440.9" stroke="#ff0000" stroke-width="1.3"/>
<line x1="257.8" y1="404.6" x2="261.6" y2="416.7" stroke="#8a8a00" stroke-width="2.5"/>
<line x1="264" y1="442.5" x2="276" y2="382" stroke="#00ff00" stroke-width="3.8"/>
<line x1="264" y1="442.5" x2="276" y2="382" stroke="#007000" stroke-width="1.9"/>
<line x1="269.4" y1="443.6" x2="281.4" y2="383.1" stroke="#ff0000" stroke-width="1.3"/>
<line x1="274.2" y1="419.4" x2="276.6" y2="407.3" stroke="#8a8a00" stroke-width="2.5"/>
<line x1="276" y1="382" x2="288" y2="442.5" stroke="#00ff00" stroke-width="3.8"/>
<line x1="276" y1="382" x2="288" y2="442.5" stroke="#007000" stroke-width="1.9"/>
<line x1="281.4" y1="380.9" x2="293.4" y2="441.4" stroke="#ff0000" stroke-width="1.3"/>
<line x1="286.2" y1="405.1" x2="288.6" y2="417.2" stroke="#8a8a00" stroke-width="2.5"/>
<line x1="288" y1="442.5" x2="307" y2="382" stroke="#00ff00" stroke-width="3.8"/>
<line x1="288" y1="442.5" x2="307" y2="382" stroke="#007000" stroke-width="1.9"/>
<line x1="293.2" y1="444.1" x2="312.2" y2="383.6" stroke="#ff0000" stroke-width="1.3"/>
<line x1="300.8" y1="419.9" x2="304.6" y2="407.8" stroke="#8a8a00" stroke-width="2.5"/>
<line x1="307" y1="382" x2="325" y2="442.5" stroke="#00ff00" stroke-width="3.8"/>
<line x1="307" y1="382" x2="325" y2="442.5" stroke="#007000" stroke-width="1.9"/>
<line x1="312.3" y1="380.4" x2="330.3" y2="440.9" stroke="#ff0000" stroke-width="1.3"/>
<line x1="319.5" y1="404.6" x2="323.1" y2="416.7" stroke="#8a8a00" stroke-width="2.5"/>
<line x1="325" y1="442.5" x2="341" y2="395.8" stroke="#00ff00" stroke-width="3.8"/>
<line x1="325" y1="442.5" x2="341" y2="395.8" stroke="#007000" stroke-width="1.9"/>
<line x1="330.2" y1="444.3" x2="346.2" y2="397.6" stroke="#ff0000" stroke-width="1.3"/>
<line x1="336.6" y1="425.6" x2="339.8" y2="416.3" stroke="#8a8a00" stroke-width="2.5"/>
<line x1="341" y1="395.8" x2="359" y2="442.5" stroke="#00ff00" stroke-width="3.8"/>
<line x1="341" y1="395.8" x2="359" y2="442.5" stroke="#007000" stroke-width="1.9"/>
<line x1="346.1" y1="393.9" x2="364.1" y2="440.5" stroke="#ff0000" stroke-width="1.3"/>
<line x1="353.3" y1="412.5" x2="356.9" y2="421.9" stroke="#8a8a00" stroke-width="2.5"/>
<line x1="359" y1="442.5" x2="376" y2="411" stroke="#00ff00" stroke-width="3.8"/>
<line x1="359" y1="442.5" x2="376" y2="411" stroke="#007000" stroke-width="1.9"/>
<line x1="363.8" y1="445.1" x2="380.8" y2="413.6" stroke="#ff0000" stroke-width="1.3"/>
<line x1="370.6" y1="432.5" x2="374" y2="426.2" stroke="#8a8a00" stroke-width="2.5"/>
<line x1="376" y1="411" x2="393" y2="442.5" stroke="#00ff00" stroke-width="3.8"/>
<line x1="376" y1="411" x2="393" y2="442.5" stroke="#007000" stroke-width="1.9"/>
<line x1="380.8" y1="408.4" x2="397.8" y2="439.9" stroke="#ff0000" stroke-width="1.3"/>
<line x1="387.6" y1="421" x2="391" y2="427.3" stroke="#8a8a00" stroke-width="2.5"/>
<line x1="393" y1="442.5" x2="412" y2="426.6" stroke="#00ff00" stroke-width="3.8"/>
<line x1="393" y1="442.5" x2="412" y2="426.6" stroke="#007000" stroke-width="1.9"/>
<line x1="396.5" y1="446.7" x2="415.5" y2="430.8" stroke="#ff0000" stroke-width="1.3"/>
<line x1="404.1" y1="440.3" x2="407.9" y2="437.2" stroke="#8a8a00" stroke-width="2.5"/>
<line x1="412" y1="426.6" x2="429" y2="442.5" stroke="#00ff00" stroke-width="3.8"/>
<line x1="412" y1="426.6" x2="429" y2="442.5" stroke="#007000" stroke-width="1.9"/>
<line x1="415.8" y1="422.6" x2="432.8" y2="438.5" stroke="#ff0000" stroke-width="1.3"/>
<line x1="422.6" y1="428.9" x2="426" y2="432.1" stroke="#8a8a00" stroke-width="2.5"/>
<line x1="100" y1="442.5" x2="453" y2="442.5" stroke="#00ff00" stroke-width="3"/>
<line x1="73.7" y1="453.5" x2="238.7" y2="379.5" stroke="#00ff00" stroke-width="1.5"/>
<line x1="75" y1="456.4" x2="240" y2="382.4" stroke="#00ff00" stroke-width="1.2"/>
<line x1="73" y1="452" x2="238" y2="378" stroke="#ff00ff" stroke-width="1.6"/>
<line x1="238" y1="378" x2="309" y2="378" stroke="#00ff00" stroke-width="1.3"/>
<line x1="238" y1="381" x2="309" y2="381" stroke="#00ff00" stroke-width="1.3"/>
<line x1="261.7" y1="375" x2="261.7" y2="378" stroke="#00ff00" stroke-width="1.5"/>
<line x1="285.3" y1="375" x2="285.3" y2="378" stroke="#00ff00" stroke-width="1.5"/>
<line x1="308.4" y1="379.5" x2="479.4" y2="453.5" stroke="#00ff00" stroke-width="1.5"/>
<line x1="307.1" y1="382.4" x2="478.1" y2="456.4" stroke="#00ff00" stroke-width="1.2"/>
<line x1="309" y1="378" x2="480" y2="452" stroke="#ff00ff" stroke-width="1.6"/>
<line x1="73" y1="446.5" x2="133" y2="419.6" stroke="#8c8c00" stroke-width="3.4"/>
<line x1="74.6" y1="450.2" x2="73.4" y2="447.5" stroke="#ffff00" stroke-width="1"/>
<rect x="71.1" y="444" width="2.4" height="2.4" fill="#ff0000"/>
<line x1="83.2" y1="446.3" x2="81.9" y2="443.6" stroke="#ffff00" stroke-width="1"/>
<rect x="79.7" y="440.1" width="2.4" height="2.4" fill="#ff0000"/>
<line x1="91.7" y1="442.5" x2="90.5" y2="439.8" stroke="#ffff00" stroke-width="1"/>
<rect x="88.3" y="436.3" width="2.4" height="2.4" fill="#ff0000"/>
<line x1="100.3" y1="438.7" x2="99.1" y2="435.9" stroke="#ffff00" stroke-width="1"/>
<rect x="96.9" y="432.4" width="2.4" height="2.4" fill="#ff0000"/>
<line x1="108.9" y1="434.8" x2="107.6" y2="432.1" stroke="#ffff00" stroke-width="1"/>
<rect x="105.4" y="428.6" width="2.4" height="2.4" fill="#ff0000"/>
<line x1="117.4" y1="431" x2="116.2" y2="428.2" stroke="#ffff00" stroke-width="1"/>
<rect x="114" y="424.8" width="2.4" height="2.4" fill="#ff0000"/>
<line x1="126" y1="427.1" x2="124.8" y2="424.4" stroke="#ffff00" stroke-width="1"/>
<rect x="122.6" y="420.9" width="2.4" height="2.4" fill="#ff0000"/>
<line x1="134.6" y1="423.3" x2="133.4" y2="420.5" stroke="#ffff00" stroke-width="1"/>
<rect x="131.1" y="417.1" width="2.4" height="2.4" fill="#ff0000"/>
<line x1="208" y1="386" x2="234" y2="374.3" stroke="#8c8c00" stroke-width="3.4"/>
<line x1="209.6" y1="389.6" x2="208.4" y2="386.9" stroke="#ffff00" stroke-width="1"/>
<rect x="206.1" y="383.4" width="2.4" height="2.4" fill="#ff0000"/>
<line x1="218.3" y1="385.8" x2="217" y2="383" stroke="#ffff00" stroke-width="1"/>
<rect x="214.8" y="379.5" width="2.4" height="2.4" fill="#ff0000"/>
<line x1="226.9" y1="381.9" x2="225.7" y2="379.1" stroke="#ffff00" stroke-width="1"/>
<rect x="223.5" y="375.7" width="2.4" height="2.4" fill="#ff0000"/>
<line x1="235.6" y1="378" x2="234.4" y2="375.2" stroke="#ffff00" stroke-width="1"/>
<rect x="232.1" y="371.8" width="2.4" height="2.4" fill="#ff0000"/>
<line x1="313" y1="374.3" x2="342" y2="386.8" stroke="#8c8c00" stroke-width="3.4"/>
<line x1="311.4" y1="377.9" x2="312.6" y2="375.2" stroke="#ffff00" stroke-width="1"/>
<rect x="312.4" y="371.7" width="2.4" height="2.4" fill="#ff0000"/>
<line x1="321.1" y1="382.1" x2="322.3" y2="379.4" stroke="#ffff00" stroke-width="1"/>
<rect x="322" y="375.9" width="2.4" height="2.4" fill="#ff0000"/>
<line x1="330.7" y1="386.3" x2="331.9" y2="383.6" stroke="#ffff00" stroke-width="1"/>
<rect x="331.7" y="380.1" width="2.4" height="2.4" fill="#ff0000"/>
<line x1="340.4" y1="390.5" x2="341.6" y2="387.7" stroke="#ffff00" stroke-width="1"/>
<rect x="341.4" y="384.2" width="2.4" height="2.4" fill="#ff0000"/>
<line x1="422" y1="421.4" x2="480" y2="446.5" stroke="#8c8c00" stroke-width="3.4"/>
<line x1="420.4" y1="425.1" x2="421.6" y2="422.4" stroke="#ffff00" stroke-width="1"/>
<rect x="421.4" y="418.9" width="2.4" height="2.4" fill="#ff0000"/>
<line x1="428.7" y1="428.7" x2="429.9" y2="425.9" stroke="#ffff00" stroke-width="1"/>
<rect x="429.7" y="422.5" width="2.4" height="2.4" fill="#ff0000"/>
<line x1="437" y1="432.3" x2="438.2" y2="429.5" stroke="#ffff00" stroke-width="1"/>
<rect x="438" y="426" width="2.4" height="2.4" fill="#ff0000"/>
<line x1="445.3" y1="435.9" x2="446.4" y2="433.1" stroke="#ffff00" stroke-width="1"/>
<rect x="446.2" y="429.6" width="2.4" height="2.4" fill="#ff0000"/>
<line x1="453.5" y1="439.5" x2="454.7" y2="436.7" stroke="#ffff00" stroke-width="1"/>
<rect x="454.5" y="433.2" width="2.4" height="2.4" fill="#ff0000"/>
<line x1="461.8" y1="443" x2="463" y2="440.3" stroke="#ffff00" stroke-width="1"/>
<rect x="462.8" y="436.8" width="2.4" height="2.4" fill="#ff0000"/>
<line x1="470.1" y1="446.6" x2="471.3" y2="443.9" stroke="#ffff00" stroke-width="1"/>
<rect x="471.1" y="440.4" width="2.4" height="2.4" fill="#ff0000"/>
<line x1="478.4" y1="450.2" x2="479.6" y2="447.5" stroke="#ffff00" stroke-width="1"/>
<rect x="479.4" y="444" width="2.4" height="2.4" fill="#ff0000"/>
<rect x="97.5" y="444" width="5" height="7" fill="#202020" stroke="#e0e0e0" stroke-width="1.2"/>
<path d="M96 454.5 L100 451 L104 454.5Z" fill="none" stroke="#e8e8e8" stroke-width="1.2"/>
<line x1="100" y1="454.5" x2="100" y2="464.5" stroke="#d8d800" stroke-width="1.2"/>
<rect x="237.5" y="444" width="5" height="7" fill="#202020" stroke="#e0e0e0" stroke-width="1.2"/>
<path d="M236 454.5 L240 451 L244 454.5Z" fill="none" stroke="#e8e8e8" stroke-width="1.2"/>
<line x1="240" y1="454.5" x2="240" y2="464.5" stroke="#d8d800" stroke-width="1.2"/>
<rect x="308.5" y="444" width="5" height="7" fill="#202020" stroke="#e0e0e0" stroke-width="1.2"/>
<path d="M307 454.5 L311 451 L315 454.5Z" fill="none" stroke="#e8e8e8" stroke-width="1.2"/>
<line x1="311" y1="454.5" x2="311" y2="464.5" stroke="#d8d800" stroke-width="1.2"/>
<rect x="450.5" y="444" width="5" height="7" fill="#202020" stroke="#e0e0e0" stroke-width="1.2"/>
<path d="M449 454.5 L453 451 L457 454.5Z" fill="none" stroke="#e8e8e8" stroke-width="1.2"/>
<line x1="453" y1="454.5" x2="453" y2="464.5" stroke="#d8d800" stroke-width="1.2"/>
<line x1="119" y1="448" x2="293" y2="448" stroke="#ff0000" stroke-width="1.2"/>
<line x1="122" y1="444.5" x2="122" y2="451.5" stroke="#ffff00" stroke-width="1"/>
<path d="M124.5 447 L122 448 L124.5 449Z" fill="#ff0000"/>
<line x1="156.5" y1="444.5" x2="156.5" y2="451.5" stroke="#ffff00" stroke-width="1"/>
<path d="M154 447 L156.5 448 L154 449Z" fill="#ff0000"/>
<line x1="159.5" y1="444.5" x2="159.5" y2="451.5" stroke="#ffff00" stroke-width="1"/>
<path d="M157 447 L159.5 448 L157 449Z" fill="#ff0000"/>
<line x1="189.5" y1="444.5" x2="189.5" y2="451.5" stroke="#ffff00" stroke-width="1"/>
<path d="M187 447 L189.5 448 L187 449Z" fill="#ff0000"/>
<line x1="192.5" y1="444.5" x2="192.5" y2="451.5" stroke="#ffff00" stroke-width="1"/>
<path d="M190 447 L192.5 448 L190 449Z" fill="#ff0000"/>
<line x1="224.5" y1="444.5" x2="224.5" y2="451.5" stroke="#ffff00" stroke-width="1"/>
<path d="M222 447 L224.5 448 L222 449Z" fill="#ff0000"/>
<line x1="227.5" y1="444.5" x2="227.5" y2="451.5" stroke="#ffff00" stroke-width="1"/>
<path d="M225 447 L227.5 448 L225 449Z" fill="#ff0000"/>
<line x1="260.5" y1="444.5" x2="260.5" y2="451.5" stroke="#ffff00" stroke-width="1"/>
<path d="M258 447 L260.5 448 L258 449Z" fill="#ff0000"/>
<line x1="263.5" y1="444.5" x2="263.5" y2="451.5" stroke="#ffff00" stroke-width="1"/>
<path d="M261 447 L263.5 448 L261 449Z" fill="#ff0000"/>
<line x1="290" y1="444.5" x2="290" y2="451.5" stroke="#ffff00" stroke-width="1"/>
<path d="M287.5 447 L290 448 L287.5 449Z" fill="#ff0000"/>
<text x="140" y="450.5" fill="#9a9a00" font-size="6.5" text-anchor="middle" font-weight="bold" textLength="14" lengthAdjust="spacingAndGlyphs">130.0</text>
<text x="174.5" y="450.5" fill="#9a9a00" font-size="6.5" text-anchor="middle" font-weight="bold" textLength="14" lengthAdjust="spacingAndGlyphs">130.0</text>
<text x="208.5" y="450.5" fill="#9a9a00" font-size="6.5" text-anchor="middle" font-weight="bold" textLength="14" lengthAdjust="spacingAndGlyphs">130.0</text>
<text x="244" y="450.5" fill="#9a9a00" font-size="6.5" text-anchor="middle" font-weight="bold" textLength="14" lengthAdjust="spacingAndGlyphs">130.0</text>
<text x="276" y="450.5" fill="#9a9a00" font-size="6.5" text-anchor="middle" font-weight="bold" textLength="14" lengthAdjust="spacingAndGlyphs">130.0</text>
<line x1="97" y1="460.5" x2="456" y2="460.5" stroke="#ff0000" stroke-width="1.3"/>
<text x="170" y="463" fill="#9a9a00" font-size="6.5" text-anchor="middle" font-weight="bold" textLength="16" lengthAdjust="spacingAndGlyphs">600.0</text>
<text x="275.5" y="463" fill="#9a9a00" font-size="6.5" text-anchor="middle" font-weight="bold" textLength="16" lengthAdjust="spacingAndGlyphs">300.0</text>
<text x="382" y="463" fill="#9a9a00" font-size="6.5" text-anchor="middle" font-weight="bold" textLength="16" lengthAdjust="spacingAndGlyphs">600.0</text>
<path d="M350 392 L355 364.9 Q355.3 363.4 357 363.4 L383 363.4" fill="none" stroke="#9aaa00" stroke-width="1.1"/>
<path d="M352.5 392.8 L357.2 369.1 Q357.5 367.6 359.2 367.6 L383 367.6" fill="none" stroke="#9aaa00" stroke-width="1.1"/>
<path d="M355 393.6 L359.4 372.8 Q359.7 371.3 361.4 371.3 L383 371.3" fill="none" stroke="#9aaa00" stroke-width="1.1"/>
<path d="M357.5 394.4 L361.6 378.2 Q361.9 376.8 363.6 376.8 L383 376.8" fill="none" stroke="#9aaa00" stroke-width="1.1"/>
<text x="385" y="364.6" fill="#c4dc00" font-size="5.4" font-weight="bold" textLength="32" lengthAdjust="spacingAndGlyphs">Atap Genteng</text>
<text x="385" y="369.1" fill="#c4dc00" font-size="5.4" font-weight="bold" textLength="37" lengthAdjust="spacingAndGlyphs">Chanel C.75.100</text>
<text x="385" y="373.8" fill="#c4dc00" font-size="5.4" font-weight="bold" textLength="37" lengthAdjust="spacingAndGlyphs">Chanel C.75.100</text>
<text x="385" y="378.8" fill="#c4dc00" font-size="5.4" font-weight="bold" textLength="24" lengthAdjust="spacingAndGlyphs">Reng 0.45</text>
<line x1="123" y1="551.7" x2="140" y2="535.9" stroke="#00ff00" stroke-width="3.8"/>
<line x1="123" y1="551.7" x2="140" y2="535.9" stroke="#007000" stroke-width="1.9"/>
<line x1="126.7" y1="555.7" x2="143.7" y2="539.9" stroke="#ff0000" stroke-width="1.3"/>
<line x1="133.5" y1="549.4" x2="136.9" y2="546.2" stroke="#8a8a00" stroke-width="2.5"/>
<line x1="140" y1="535.9" x2="159" y2="551.7" stroke="#00ff00" stroke-width="3.8"/>
<line x1="140" y1="535.9" x2="159" y2="551.7" stroke="#007000" stroke-width="1.9"/>
<line x1="143.5" y1="531.6" x2="162.5" y2="547.5" stroke="#ff0000" stroke-width="1.3"/>
<line x1="151.1" y1="538" x2="154.9" y2="541.1" stroke="#8a8a00" stroke-width="2.5"/>
<line x1="159" y1="551.7" x2="176" y2="520.2" stroke="#00ff00" stroke-width="3.8"/>
<line x1="159" y1="551.7" x2="176" y2="520.2" stroke="#007000" stroke-width="1.9"/>
<line x1="163.8" y1="554.3" x2="180.8" y2="522.8" stroke="#ff0000" stroke-width="1.3"/>
<line x1="170.6" y1="541.7" x2="174" y2="535.4" stroke="#8a8a00" stroke-width="2.5"/>
<line x1="176" y1="520.2" x2="193" y2="551.7" stroke="#00ff00" stroke-width="3.8"/>
<line x1="176" y1="520.2" x2="193" y2="551.7" stroke="#007000" stroke-width="1.9"/>
<line x1="180.8" y1="517.6" x2="197.8" y2="549.1" stroke="#ff0000" stroke-width="1.3"/>
<line x1="187.6" y1="530.2" x2="191" y2="536.5" stroke="#8a8a00" stroke-width="2.5"/>
<line x1="193" y1="551.7" x2="211" y2="505" stroke="#00ff00" stroke-width="3.8"/>
<line x1="193" y1="551.7" x2="211" y2="505" stroke="#007000" stroke-width="1.9"/>
<line x1="198.1" y1="553.7" x2="216.1" y2="507" stroke="#ff0000" stroke-width="1.3"/>
<line x1="205.3" y1="535" x2="208.9" y2="525.6" stroke="#8a8a00" stroke-width="2.5"/>
<line x1="211" y1="505" x2="227" y2="551.7" stroke="#00ff00" stroke-width="3.8"/>
<line x1="211" y1="505" x2="227" y2="551.7" stroke="#007000" stroke-width="1.9"/>
<line x1="216.2" y1="503.2" x2="232.2" y2="549.9" stroke="#ff0000" stroke-width="1.3"/>
<line x1="222.6" y1="521.9" x2="225.8" y2="531.2" stroke="#8a8a00" stroke-width="2.5"/>
<line x1="227" y1="551.7" x2="245" y2="501.5" stroke="#00ff00" stroke-width="3.8"/>
<line x1="227" y1="551.7" x2="245" y2="501.5" stroke="#007000" stroke-width="1.9"/>
<line x1="232.2" y1="553.6" x2="250.2" y2="503.4" stroke="#ff0000" stroke-width="1.3"/>
<line x1="239.4" y1="533.5" x2="243" y2="523.4" stroke="#8a8a00" stroke-width="2.5"/>
<line x1="245" y1="501.5" x2="264" y2="551.7" stroke="#00ff00" stroke-width="3.8"/>
<line x1="245" y1="501.5" x2="264" y2="551.7" stroke="#007000" stroke-width="1.9"/>
<line x1="250.1" y1="499.6" x2="269.1" y2="549.8" stroke="#ff0000" stroke-width="1.3"/>
<line x1="257.7" y1="519.6" x2="261.5" y2="529.7" stroke="#8a8a00" stroke-width="2.5"/>
<line x1="264" y1="551.7" x2="276" y2="501.5" stroke="#00ff00" stroke-width="3.8"/>
<line x1="264" y1="551.7" x2="276" y2="501.5" stroke="#007000" stroke-width="1.9"/>
<line x1="269.3" y1="553" x2="281.3" y2="502.8" stroke="#ff0000" stroke-width="1.3"/>
<line x1="274.1" y1="532.9" x2="276.5" y2="522.9" stroke="#8a8a00" stroke-width="2.5"/>
<line x1="276" y1="501.5" x2="288" y2="551.7" stroke="#00ff00" stroke-width="3.8"/>
<line x1="276" y1="501.5" x2="288" y2="551.7" stroke="#007000" stroke-width="1.9"/>
<line x1="281.3" y1="500.2" x2="293.3" y2="550.4" stroke="#ff0000" stroke-width="1.3"/>
<line x1="286.1" y1="520.3" x2="288.5" y2="530.3" stroke="#8a8a00" stroke-width="2.5"/>
<line x1="288" y1="551.7" x2="307" y2="501.5" stroke="#00ff00" stroke-width="3.8"/>
<line x1="288" y1="551.7" x2="307" y2="501.5" stroke="#007000" stroke-width="1.9"/>
<line x1="293.1" y1="553.6" x2="312.1" y2="503.4" stroke="#ff0000" stroke-width="1.3"/>
<line x1="300.7" y1="533.6" x2="304.5" y2="523.5" stroke="#8a8a00" stroke-width="2.5"/>
<line x1="307" y1="501.5" x2="325" y2="551.7" stroke="#00ff00" stroke-width="3.8"/>
<line x1="307" y1="501.5" x2="325" y2="551.7" stroke="#007000" stroke-width="1.9"/>
<line x1="312.2" y1="499.6" x2="330.2" y2="549.8" stroke="#ff0000" stroke-width="1.3"/>
<line x1="319.4" y1="519.7" x2="323" y2="529.8" stroke="#8a8a00" stroke-width="2.5"/>
<line x1="325" y1="551.7" x2="341" y2="505.4" stroke="#00ff00" stroke-width="3.8"/>
<line x1="325" y1="551.7" x2="341" y2="505.4" stroke="#007000" stroke-width="1.9"/>
<line x1="330.2" y1="553.5" x2="346.2" y2="507.2" stroke="#ff0000" stroke-width="1.3"/>
<line x1="336.6" y1="535" x2="339.8" y2="525.7" stroke="#8a8a00" stroke-width="2.5"/>
<line x1="341" y1="505.4" x2="359" y2="551.7" stroke="#00ff00" stroke-width="3.8"/>
<line x1="341" y1="505.4" x2="359" y2="551.7" stroke="#007000" stroke-width="1.9"/>
<line x1="346.1" y1="503.4" x2="364.1" y2="549.7" stroke="#ff0000" stroke-width="1.3"/>
<line x1="353.3" y1="521.9" x2="356.9" y2="531.2" stroke="#8a8a00" stroke-width="2.5"/>
<line x1="359" y1="551.7" x2="376" y2="520.4" stroke="#00ff00" stroke-width="3.8"/>
<line x1="359" y1="551.7" x2="376" y2="520.4" stroke="#007000" stroke-width="1.9"/>
<line x1="363.8" y1="554.3" x2="380.8" y2="523" stroke="#ff0000" stroke-width="1.3"/>
<line x1="370.6" y1="541.8" x2="374" y2="535.5" stroke="#8a8a00" stroke-width="2.5"/>
<line x1="376" y1="520.4" x2="393" y2="551.7" stroke="#00ff00" stroke-width="3.8"/>
<line x1="376" y1="520.4" x2="393" y2="551.7" stroke="#007000" stroke-width="1.9"/>
<line x1="380.8" y1="517.8" x2="397.8" y2="549.1" stroke="#ff0000" stroke-width="1.3"/>
<line x1="387.6" y1="530.3" x2="391" y2="536.5" stroke="#8a8a00" stroke-width="2.5"/>
<line x1="393" y1="551.7" x2="412" y2="535.8" stroke="#00ff00" stroke-width="3.8"/>
<line x1="393" y1="551.7" x2="412" y2="535.8" stroke="#007000" stroke-width="1.9"/>
<line x1="396.5" y1="555.9" x2="415.5" y2="540" stroke="#ff0000" stroke-width="1.3"/>
<line x1="404.1" y1="549.6" x2="407.9" y2="546.4" stroke="#8a8a00" stroke-width="2.5"/>
<line x1="412" y1="535.8" x2="429" y2="551.7" stroke="#00ff00" stroke-width="3.8"/>
<line x1="412" y1="535.8" x2="429" y2="551.7" stroke="#007000" stroke-width="1.9"/>
<line x1="415.8" y1="531.8" x2="432.8" y2="547.7" stroke="#ff0000" stroke-width="1.3"/>
<line x1="422.6" y1="538.2" x2="426" y2="541.3" stroke="#8a8a00" stroke-width="2.5"/>
<line x1="100" y1="551.7" x2="453" y2="551.7" stroke="#00ff00" stroke-width="3"/>
<line x1="73.6" y1="562.5" x2="219.6" y2="499" stroke="#00ff00" stroke-width="1.5"/>
<line x1="74.9" y1="565.4" x2="220.9" y2="501.9" stroke="#00ff00" stroke-width="1.2"/>
<line x1="73" y1="561" x2="219" y2="497.5" stroke="#ff00ff" stroke-width="1.6"/>
<line x1="219" y1="497.5" x2="332" y2="497.5" stroke="#00ff00" stroke-width="1.3"/>
<line x1="219" y1="500.5" x2="332" y2="500.5" stroke="#00ff00" stroke-width="1.3"/>
<line x1="247.2" y1="494.5" x2="247.2" y2="497.5" stroke="#00ff00" stroke-width="1.5"/>
<line x1="275.5" y1="494.5" x2="275.5" y2="497.5" stroke="#00ff00" stroke-width="1.5"/>
<line x1="303.8" y1="494.5" x2="303.8" y2="497.5" stroke="#00ff00" stroke-width="1.5"/>
<line x1="331.4" y1="499" x2="479.4" y2="562.5" stroke="#00ff00" stroke-width="1.5"/>
<line x1="330.1" y1="501.9" x2="478.1" y2="565.4" stroke="#00ff00" stroke-width="1.2"/>
<line x1="332" y1="497.5" x2="480" y2="561" stroke="#ff00ff" stroke-width="1.6"/>
<line x1="73" y1="555.5" x2="133" y2="529.4" stroke="#8c8c00" stroke-width="3.4"/>
<line x1="74.6" y1="559.2" x2="73.4" y2="556.5" stroke="#ffff00" stroke-width="1"/>
<rect x="71.2" y="553" width="2.4" height="2.4" fill="#ff0000"/>
<line x1="83.2" y1="555.5" x2="82" y2="552.7" stroke="#ffff00" stroke-width="1"/>
<rect x="79.8" y="549.2" width="2.4" height="2.4" fill="#ff0000"/>
<line x1="91.7" y1="551.8" x2="90.5" y2="549" stroke="#ffff00" stroke-width="1"/>
<rect x="88.4" y="545.5" width="2.4" height="2.4" fill="#ff0000"/>
<line x1="100.3" y1="548" x2="99.1" y2="545.3" stroke="#ffff00" stroke-width="1"/>
<rect x="96.9" y="541.8" width="2.4" height="2.4" fill="#ff0000"/>
<line x1="108.9" y1="544.3" x2="107.7" y2="541.6" stroke="#ffff00" stroke-width="1"/>
<rect x="105.5" y="538.1" width="2.4" height="2.4" fill="#ff0000"/>
<line x1="117.5" y1="540.6" x2="116.3" y2="537.8" stroke="#ffff00" stroke-width="1"/>
<rect x="114.1" y="534.3" width="2.4" height="2.4" fill="#ff0000"/>
<line x1="126" y1="536.8" x2="124.8" y2="534.1" stroke="#ffff00" stroke-width="1"/>
<rect x="122.6" y="530.6" width="2.4" height="2.4" fill="#ff0000"/>
<line x1="134.6" y1="533.1" x2="133.4" y2="530.4" stroke="#ffff00" stroke-width="1"/>
<rect x="131.2" y="526.9" width="2.4" height="2.4" fill="#ff0000"/>
<line x1="422" y1="530.7" x2="480" y2="555.5" stroke="#8c8c00" stroke-width="3.4"/>
<line x1="420.4" y1="534.3" x2="421.6" y2="531.6" stroke="#ffff00" stroke-width="1"/>
<rect x="421.4" y="528.1" width="2.4" height="2.4" fill="#ff0000"/>
<line x1="428.7" y1="537.9" x2="429.9" y2="535.1" stroke="#ffff00" stroke-width="1"/>
<rect x="429.6" y="531.6" width="2.4" height="2.4" fill="#ff0000"/>
<line x1="437" y1="541.4" x2="438.1" y2="538.7" stroke="#ffff00" stroke-width="1"/>
<rect x="437.9" y="535.2" width="2.4" height="2.4" fill="#ff0000"/>
<line x1="445.3" y1="545" x2="446.4" y2="542.2" stroke="#ffff00" stroke-width="1"/>
<rect x="446.2" y="538.7" width="2.4" height="2.4" fill="#ff0000"/>
<line x1="453.5" y1="548.6" x2="454.7" y2="545.8" stroke="#ffff00" stroke-width="1"/>
<rect x="454.5" y="542.3" width="2.4" height="2.4" fill="#ff0000"/>
<line x1="461.8" y1="552.1" x2="463" y2="549.4" stroke="#ffff00" stroke-width="1"/>
<rect x="462.8" y="545.9" width="2.4" height="2.4" fill="#ff0000"/>
<line x1="470.1" y1="555.7" x2="471.3" y2="552.9" stroke="#ffff00" stroke-width="1"/>
<rect x="471.1" y="549.4" width="2.4" height="2.4" fill="#ff0000"/>
<line x1="478.4" y1="559.2" x2="479.6" y2="556.5" stroke="#ffff00" stroke-width="1"/>
<rect x="479.4" y="553" width="2.4" height="2.4" fill="#ff0000"/>
<rect x="97.5" y="553.2" width="5" height="7" fill="#202020" stroke="#e0e0e0" stroke-width="1.2"/>
<path d="M96 563.7 L100 560.2 L104 563.7Z" fill="none" stroke="#e8e8e8" stroke-width="1.2"/>
<line x1="100" y1="563.7" x2="100" y2="574" stroke="#d8d800" stroke-width="1.2"/>
<rect x="237.5" y="553.2" width="5" height="7" fill="#202020" stroke="#e0e0e0" stroke-width="1.2"/>
<path d="M236 563.7 L240 560.2 L244 563.7Z" fill="none" stroke="#e8e8e8" stroke-width="1.2"/>
<line x1="240" y1="563.7" x2="240" y2="574" stroke="#d8d800" stroke-width="1.2"/>
<rect x="308.5" y="553.2" width="5" height="7" fill="#202020" stroke="#e0e0e0" stroke-width="1.2"/>
<path d="M307 563.7 L311 560.2 L315 563.7Z" fill="none" stroke="#e8e8e8" stroke-width="1.2"/>
<line x1="311" y1="563.7" x2="311" y2="574" stroke="#d8d800" stroke-width="1.2"/>
<rect x="450.5" y="553.2" width="5" height="7" fill="#202020" stroke="#e0e0e0" stroke-width="1.2"/>
<path d="M449 563.7 L453 560.2 L457 563.7Z" fill="none" stroke="#e8e8e8" stroke-width="1.2"/>
<line x1="453" y1="563.7" x2="453" y2="574" stroke="#d8d800" stroke-width="1.2"/>
<line x1="119" y1="557" x2="293" y2="557" stroke="#ff0000" stroke-width="1.2"/>
<line x1="122" y1="553.5" x2="122" y2="560.5" stroke="#ffff00" stroke-width="1"/>
<path d="M124.5 556 L122 557 L124.5 558Z" fill="#ff0000"/>
<line x1="156.5" y1="553.5" x2="156.5" y2="560.5" stroke="#ffff00" stroke-width="1"/>
<path d="M154 556 L156.5 557 L154 558Z" fill="#ff0000"/>
<line x1="159.5" y1="553.5" x2="159.5" y2="560.5" stroke="#ffff00" stroke-width="1"/>
<path d="M157 556 L159.5 557 L157 558Z" fill="#ff0000"/>
<line x1="189.5" y1="553.5" x2="189.5" y2="560.5" stroke="#ffff00" stroke-width="1"/>
<path d="M187 556 L189.5 557 L187 558Z" fill="#ff0000"/>
<line x1="192.5" y1="553.5" x2="192.5" y2="560.5" stroke="#ffff00" stroke-width="1"/>
<path d="M190 556 L192.5 557 L190 558Z" fill="#ff0000"/>
<line x1="224.5" y1="553.5" x2="224.5" y2="560.5" stroke="#ffff00" stroke-width="1"/>
<path d="M222 556 L224.5 557 L222 558Z" fill="#ff0000"/>
<line x1="227.5" y1="553.5" x2="227.5" y2="560.5" stroke="#ffff00" stroke-width="1"/>
<path d="M225 556 L227.5 557 L225 558Z" fill="#ff0000"/>
<line x1="260.5" y1="553.5" x2="260.5" y2="560.5" stroke="#ffff00" stroke-width="1"/>
<path d="M258 556 L260.5 557 L258 558Z" fill="#ff0000"/>
<line x1="263.5" y1="553.5" x2="263.5" y2="560.5" stroke="#ffff00" stroke-width="1"/>
<path d="M261 556 L263.5 557 L261 558Z" fill="#ff0000"/>
<line x1="290" y1="553.5" x2="290" y2="560.5" stroke="#ffff00" stroke-width="1"/>
<path d="M287.5 556 L290 557 L287.5 558Z" fill="#ff0000"/>
<text x="140" y="559.5" fill="#9a9a00" font-size="6.5" text-anchor="middle" font-weight="bold" textLength="14" lengthAdjust="spacingAndGlyphs">130.0</text>
<text x="174.5" y="559.5" fill="#9a9a00" font-size="6.5" text-anchor="middle" font-weight="bold" textLength="14" lengthAdjust="spacingAndGlyphs">130.0</text>
<text x="208.5" y="559.5" fill="#9a9a00" font-size="6.5" text-anchor="middle" font-weight="bold" textLength="14" lengthAdjust="spacingAndGlyphs">130.0</text>
<text x="244" y="559.5" fill="#9a9a00" font-size="6.5" text-anchor="middle" font-weight="bold" textLength="14" lengthAdjust="spacingAndGlyphs">130.0</text>
<text x="276" y="559.5" fill="#9a9a00" font-size="6.5" text-anchor="middle" font-weight="bold" textLength="14" lengthAdjust="spacingAndGlyphs">130.0</text>
<line x1="97" y1="570" x2="456" y2="570" stroke="#ff0000" stroke-width="1.3"/>
<text x="170" y="572.5" fill="#9a9a00" font-size="6.5" text-anchor="middle" font-weight="bold" textLength="16" lengthAdjust="spacingAndGlyphs">600.0</text>
<text x="275.5" y="572.5" fill="#9a9a00" font-size="6.5" text-anchor="middle" font-weight="bold" textLength="16" lengthAdjust="spacingAndGlyphs">300.0</text>
<text x="382" y="572.5" fill="#9a9a00" font-size="6.5" text-anchor="middle" font-weight="bold" textLength="16" lengthAdjust="spacingAndGlyphs">600.0</text>
<path d="M350 500 L355 473.9 Q355.3 472.4 357 472.4 L383 472.4" fill="none" stroke="#9aaa00" stroke-width="1.1"/>
<path d="M352.5 500.8 L357.2 478.1 Q357.5 476.6 359.2 476.6 L383 476.6" fill="none" stroke="#9aaa00" stroke-width="1.1"/>
<path d="M355 501.6 L359.4 481.8 Q359.7 480.3 361.4 480.3 L383 480.3" fill="none" stroke="#9aaa00" stroke-width="1.1"/>
<path d="M357.5 502.4 L361.6 487.2 Q361.9 485.8 363.6 485.8 L383 485.8" fill="none" stroke="#9aaa00" stroke-width="1.1"/>
<text x="385" y="473.6" fill="#c4dc00" font-size="5.4" font-weight="bold" textLength="32" lengthAdjust="spacingAndGlyphs">Atap Genteng</text>
<text x="385" y="478.1" fill="#c4dc00" font-size="5.4" font-weight="bold" textLength="37" lengthAdjust="spacingAndGlyphs">Chanel C.75.100</text>
<text x="385" y="482.8" fill="#c4dc00" font-size="5.4" font-weight="bold" textLength="37" lengthAdjust="spacingAndGlyphs">Chanel C.75.100</text>
<text x="385" y="487.8" fill="#c4dc00" font-size="5.4" font-weight="bold" textLength="24" lengthAdjust="spacingAndGlyphs">Reng 0.45</text>
<line x1="707" y1="226.2" x2="721" y2="209.8" stroke="#00ff00" stroke-width="1"/>
<line x1="709" y1="227.8" x2="723" y2="211.5" stroke="#00ff00" stroke-width="1"/>
<line x1="708" y1="227" x2="722" y2="210.6" stroke="#005a00" stroke-width="1.4"/>
<line x1="709" y1="228" x2="727" y2="207.6" stroke="#ff0000" stroke-width="1.3"/>
<line x1="716.2" y1="219.9" x2="719.8" y2="215.8" stroke="#8a8a00" stroke-width="2.5"/>
<line x1="722.8" y1="209.6" x2="741.8" y2="226" stroke="#00ff00" stroke-width="1"/>
<line x1="721.2" y1="211.6" x2="740.2" y2="228" stroke="#00ff00" stroke-width="1"/>
<line x1="722" y1="210.6" x2="741" y2="227" stroke="#005a00" stroke-width="1.4"/>
<line x1="727" y1="207.6" x2="742" y2="228" stroke="#ff0000" stroke-width="1.3"/>
<line x1="733" y1="215.8" x2="736" y2="219.9" stroke="#8a8a00" stroke-width="2.5"/>
<line x1="739.8" y1="226.4" x2="755.8" y2="194.8" stroke="#00ff00" stroke-width="1"/>
<line x1="742.2" y1="227.6" x2="758.2" y2="196" stroke="#00ff00" stroke-width="1"/>
<line x1="741" y1="227" x2="757" y2="195.4" stroke="#005a00" stroke-width="1.4"/>
<line x1="742" y1="228" x2="762" y2="192.4" stroke="#ff0000" stroke-width="1.3"/>
<line x1="750" y1="213.8" x2="754" y2="206.6" stroke="#8a8a00" stroke-width="2.5"/>
<line x1="758.1" y1="194.7" x2="776.1" y2="226.4" stroke="#00ff00" stroke-width="1"/>
<line x1="755.9" y1="196" x2="773.9" y2="227.6" stroke="#00ff00" stroke-width="1"/>
<line x1="757" y1="195.4" x2="775" y2="227" stroke="#005a00" stroke-width="1.4"/>
<line x1="762" y1="192.4" x2="776" y2="228" stroke="#ff0000" stroke-width="1.3"/>
<line x1="767.6" y1="206.6" x2="770.4" y2="213.8" stroke="#8a8a00" stroke-width="2.5"/>
<line x1="773.8" y1="226.5" x2="790.8" y2="184" stroke="#00ff00" stroke-width="1"/>
<line x1="776.2" y1="227.5" x2="793.2" y2="185" stroke="#00ff00" stroke-width="1"/>
<line x1="775" y1="227" x2="792" y2="184.5" stroke="#005a00" stroke-width="1.4"/>
<line x1="793.2" y1="184" x2="811.2" y2="226.5" stroke="#00ff00" stroke-width="1"/>
<line x1="790.8" y1="185" x2="808.8" y2="227.5" stroke="#00ff00" stroke-width="1"/>
<line x1="792" y1="184.5" x2="810" y2="227" stroke="#005a00" stroke-width="1.4"/>
<line x1="797" y1="181.5" x2="811" y2="228" stroke="#ff0000" stroke-width="1.3"/>
<line x1="802.6" y1="200.1" x2="805.4" y2="209.4" stroke="#8a8a00" stroke-width="2.5"/>
<line x1="808.8" y1="226.5" x2="825.8" y2="184" stroke="#00ff00" stroke-width="1"/>
<line x1="811.2" y1="227.5" x2="828.2" y2="185" stroke="#00ff00" stroke-width="1"/>
<line x1="810" y1="227" x2="827" y2="184.5" stroke="#005a00" stroke-width="1.4"/>
<line x1="828.2" y1="184" x2="847.2" y2="226.5" stroke="#00ff00" stroke-width="1"/>
<line x1="825.8" y1="185" x2="844.8" y2="227.5" stroke="#00ff00" stroke-width="1"/>
<line x1="827" y1="184.5" x2="846" y2="227" stroke="#005a00" stroke-width="1.4"/>
<line x1="832" y1="181.5" x2="847" y2="228" stroke="#ff0000" stroke-width="1.3"/>
<line x1="838" y1="200.1" x2="841" y2="209.4" stroke="#8a8a00" stroke-width="2.5"/>
<line x1="844.8" y1="226.5" x2="860.8" y2="184" stroke="#00ff00" stroke-width="1"/>
<line x1="847.2" y1="227.5" x2="863.2" y2="185" stroke="#00ff00" stroke-width="1"/>
<line x1="846" y1="227" x2="862" y2="184.5" stroke="#005a00" stroke-width="1.4"/>
<line x1="863.2" y1="184" x2="879.2" y2="226.5" stroke="#00ff00" stroke-width="1"/>
<line x1="860.8" y1="185" x2="876.8" y2="227.5" stroke="#00ff00" stroke-width="1"/>
<line x1="862" y1="184.5" x2="878" y2="227" stroke="#005a00" stroke-width="1.4"/>
<line x1="867" y1="181.5" x2="879" y2="228" stroke="#ff0000" stroke-width="1.3"/>
<line x1="871.8" y1="200.1" x2="874.2" y2="209.4" stroke="#8a8a00" stroke-width="2.5"/>
<line x1="876.8" y1="226.5" x2="895.8" y2="184" stroke="#00ff00" stroke-width="1"/>
<line x1="879.2" y1="227.5" x2="898.2" y2="185" stroke="#00ff00" stroke-width="1"/>
<line x1="878" y1="227" x2="897" y2="184.5" stroke="#005a00" stroke-width="1.4"/>
<line x1="898.2" y1="184" x2="915.2" y2="226.5" stroke="#00ff00" stroke-width="1"/>
<line x1="895.8" y1="185" x2="912.8" y2="227.5" stroke="#00ff00" stroke-width="1"/>
<line x1="897" y1="184.5" x2="914" y2="227" stroke="#005a00" stroke-width="1.4"/>
<line x1="902" y1="181.5" x2="915" y2="228" stroke="#ff0000" stroke-width="1.3"/>
<line x1="907.2" y1="200.1" x2="909.8" y2="209.4" stroke="#8a8a00" stroke-width="2.5"/>
<line x1="912.8" y1="226.5" x2="930.8" y2="184" stroke="#00ff00" stroke-width="1"/>
<line x1="915.2" y1="227.5" x2="933.2" y2="185" stroke="#00ff00" stroke-width="1"/>
<line x1="914" y1="227" x2="932" y2="184.5" stroke="#005a00" stroke-width="1.4"/>
<line x1="933.2" y1="184" x2="950.2" y2="226.5" stroke="#00ff00" stroke-width="1"/>
<line x1="930.8" y1="185" x2="947.8" y2="227.5" stroke="#00ff00" stroke-width="1"/>
<line x1="932" y1="184.5" x2="949" y2="227" stroke="#005a00" stroke-width="1.4"/>
<line x1="937" y1="181.5" x2="950" y2="228" stroke="#ff0000" stroke-width="1.3"/>
<line x1="942.2" y1="200.1" x2="944.8" y2="209.4" stroke="#8a8a00" stroke-width="2.5"/>
<line x1="947.9" y1="226.4" x2="965.9" y2="194.8" stroke="#00ff00" stroke-width="1"/>
<line x1="950.1" y1="227.6" x2="968.1" y2="196.1" stroke="#00ff00" stroke-width="1"/>
<line x1="949" y1="227" x2="967" y2="195.5" stroke="#005a00" stroke-width="1.4"/>
<line x1="950" y1="228" x2="972" y2="192.5" stroke="#ff0000" stroke-width="1.3"/>
<line x1="958.8" y1="213.8" x2="963.2" y2="206.7" stroke="#8a8a00" stroke-width="2.5"/>
<line x1="968.2" y1="194.9" x2="984.2" y2="226.4" stroke="#00ff00" stroke-width="1"/>
<line x1="965.8" y1="196.1" x2="981.8" y2="227.6" stroke="#00ff00" stroke-width="1"/>
<line x1="967" y1="195.5" x2="983" y2="227" stroke="#005a00" stroke-width="1.4"/>
<line x1="972" y1="192.5" x2="984" y2="228" stroke="#ff0000" stroke-width="1.3"/>
<line x1="976.8" y1="206.7" x2="979.2" y2="213.8" stroke="#8a8a00" stroke-width="2.5"/>
<line x1="982.2" y1="226" x2="1001.2" y2="209.9" stroke="#00ff00" stroke-width="1"/>
<line x1="983.8" y1="228" x2="1002.8" y2="211.8" stroke="#00ff00" stroke-width="1"/>
<line x1="983" y1="227" x2="1002" y2="210.8" stroke="#005a00" stroke-width="1.4"/>
<line x1="984" y1="228" x2="1007" y2="207.8" stroke="#ff0000" stroke-width="1.3"/>
<line x1="993.2" y1="219.9" x2="997.8" y2="215.9" stroke="#8a8a00" stroke-width="2.5"/>
<line x1="1003" y1="210" x2="1017" y2="226.1" stroke="#00ff00" stroke-width="1"/>
<line x1="1001" y1="211.7" x2="1015" y2="227.9" stroke="#00ff00" stroke-width="1"/>
<line x1="1002" y1="210.8" x2="1016" y2="227" stroke="#005a00" stroke-width="1.4"/>
<line x1="1007" y1="207.8" x2="1017" y2="228" stroke="#ff0000" stroke-width="1.3"/>
<line x1="1011" y1="215.9" x2="1013" y2="219.9" stroke="#8a8a00" stroke-width="2.5"/>
<line x1="685" y1="227" x2="1036" y2="227" stroke="#00ff00" stroke-width="3"/>
<line x1="658" y1="236" x2="782" y2="182" stroke="#00ff00" stroke-width="1.3"/>
<line x1="659.4" y1="239.2" x2="783.4" y2="185.2" stroke="#00ff00" stroke-width="1"/>
<line x1="657.4" y1="234.6" x2="781.4" y2="180.6" stroke="#ff00ff" stroke-width="1.6"/>
<line x1="782" y1="182" x2="942" y2="182" stroke="#00ff00" stroke-width="1.3"/>
<line x1="782" y1="185" x2="942" y2="185" stroke="#00ff00" stroke-width="1.3"/>
<line x1="814" y1="179" x2="814" y2="182" stroke="#00ff00" stroke-width="1.5"/>
<line x1="846" y1="179" x2="846" y2="182" stroke="#00ff00" stroke-width="1.5"/>
<line x1="878" y1="179" x2="878" y2="182" stroke="#00ff00" stroke-width="1.5"/>
<line x1="910" y1="179" x2="910" y2="182" stroke="#00ff00" stroke-width="1.5"/>
<line x1="942" y1="182" x2="1065" y2="236" stroke="#00ff00" stroke-width="1.3"/>
<line x1="940.6" y1="185.2" x2="1063.6" y2="239.2" stroke="#00ff00" stroke-width="1"/>
<line x1="942.6" y1="180.6" x2="1065.6" y2="234.6" stroke="#ff00ff" stroke-width="1.6"/>
<line x1="658" y1="230.5" x2="718" y2="204.4" stroke="#8c8c00" stroke-width="3.4"/>
<line x1="659.6" y1="234.2" x2="658.4" y2="231.5" stroke="#ffff00" stroke-width="1"/>
<rect x="656.2" y="228" width="2.4" height="2.4" fill="#ff0000"/>
<line x1="668.2" y1="230.5" x2="667" y2="227.7" stroke="#ffff00" stroke-width="1"/>
<rect x="664.8" y="224.2" width="2.4" height="2.4" fill="#ff0000"/>
<line x1="676.7" y1="226.7" x2="675.5" y2="224" stroke="#ffff00" stroke-width="1"/>
<rect x="673.3" y="220.5" width="2.4" height="2.4" fill="#ff0000"/>
<line x1="685.3" y1="223" x2="684.1" y2="220.3" stroke="#ffff00" stroke-width="1"/>
<rect x="681.9" y="216.8" width="2.4" height="2.4" fill="#ff0000"/>
<line x1="693.9" y1="219.3" x2="692.7" y2="216.5" stroke="#ffff00" stroke-width="1"/>
<rect x="690.5" y="213" width="2.4" height="2.4" fill="#ff0000"/>
<line x1="702.5" y1="215.5" x2="701.3" y2="212.8" stroke="#ffff00" stroke-width="1"/>
<rect x="699.1" y="209.3" width="2.4" height="2.4" fill="#ff0000"/>
<line x1="711" y1="211.8" x2="709.8" y2="209.1" stroke="#ffff00" stroke-width="1"/>
<rect x="707.6" y="205.6" width="2.4" height="2.4" fill="#ff0000"/>
<line x1="719.6" y1="208.1" x2="718.4" y2="205.3" stroke="#ffff00" stroke-width="1"/>
<rect x="716.2" y="201.8" width="2.4" height="2.4" fill="#ff0000"/>
<line x1="1007" y1="205.1" x2="1065" y2="230.5" stroke="#8c8c00" stroke-width="3.4"/>
<line x1="1005.4" y1="208.7" x2="1006.6" y2="206" stroke="#ffff00" stroke-width="1"/>
<rect x="1006.4" y="202.5" width="2.4" height="2.4" fill="#ff0000"/>
<line x1="1013.7" y1="212.4" x2="1014.9" y2="209.6" stroke="#ffff00" stroke-width="1"/>
<rect x="1014.7" y="206.1" width="2.4" height="2.4" fill="#ff0000"/>
<line x1="1022" y1="216" x2="1023.2" y2="213.3" stroke="#ffff00" stroke-width="1"/>
<rect x="1023" y="209.8" width="2.4" height="2.4" fill="#ff0000"/>
<line x1="1030.3" y1="219.7" x2="1031.5" y2="216.9" stroke="#ffff00" stroke-width="1"/>
<rect x="1031.3" y="213.4" width="2.4" height="2.4" fill="#ff0000"/>
<line x1="1038.5" y1="223.3" x2="1039.8" y2="220.5" stroke="#ffff00" stroke-width="1"/>
<rect x="1039.6" y="217.1" width="2.4" height="2.4" fill="#ff0000"/>
<line x1="1046.8" y1="226.9" x2="1048" y2="224.2" stroke="#ffff00" stroke-width="1"/>
<rect x="1047.8" y="220.7" width="2.4" height="2.4" fill="#ff0000"/>
<line x1="1055.1" y1="230.6" x2="1056.3" y2="227.8" stroke="#ffff00" stroke-width="1"/>
<rect x="1056.1" y="224.3" width="2.4" height="2.4" fill="#ff0000"/>
<line x1="1063.4" y1="234.2" x2="1064.6" y2="231.5" stroke="#ffff00" stroke-width="1"/>
<rect x="1064.4" y="228" width="2.4" height="2.4" fill="#ff0000"/>
<rect x="682.5" y="228.5" width="5" height="7" fill="#202020" stroke="#e0e0e0" stroke-width="1.2"/>
<path d="M681 239 L685 235.5 L689 239Z" fill="none" stroke="#e8e8e8" stroke-width="1.2"/>
<line x1="685" y1="239" x2="685" y2="249" stroke="#d8d800" stroke-width="1.2"/>
<rect x="823.5" y="228.5" width="5" height="7" fill="#202020" stroke="#e0e0e0" stroke-width="1.2"/>
<path d="M822 239 L826 235.5 L830 239Z" fill="none" stroke="#e8e8e8" stroke-width="1.2"/>
<line x1="826" y1="239" x2="826" y2="249" stroke="#d8d800" stroke-width="1.2"/>
<rect x="893.5" y="228.5" width="5" height="7" fill="#202020" stroke="#e0e0e0" stroke-width="1.2"/>
<path d="M892 239 L896 235.5 L900 239Z" fill="none" stroke="#e8e8e8" stroke-width="1.2"/>
<line x1="896" y1="239" x2="896" y2="249" stroke="#d8d800" stroke-width="1.2"/>
<rect x="1033.5" y="228.5" width="5" height="7" fill="#202020" stroke="#e0e0e0" stroke-width="1.2"/>
<path d="M1032 239 L1036 235.5 L1040 239Z" fill="none" stroke="#e8e8e8" stroke-width="1.2"/>
<line x1="1036" y1="239" x2="1036" y2="249" stroke="#d8d800" stroke-width="1.2"/>
<line x1="705" y1="232" x2="881" y2="232" stroke="#ff0000" stroke-width="1.2"/>
<line x1="708" y1="228.5" x2="708" y2="235.5" stroke="#ffff00" stroke-width="1"/>
<path d="M710.5 231 L708 232 L710.5 233Z" fill="#ff0000"/>
<line x1="739.5" y1="228.5" x2="739.5" y2="235.5" stroke="#ffff00" stroke-width="1"/>
<path d="M737 231 L739.5 232 L737 233Z" fill="#ff0000"/>
<line x1="742.5" y1="228.5" x2="742.5" y2="235.5" stroke="#ffff00" stroke-width="1"/>
<path d="M740 231 L742.5 232 L740 233Z" fill="#ff0000"/>
<line x1="773.5" y1="228.5" x2="773.5" y2="235.5" stroke="#ffff00" stroke-width="1"/>
<path d="M771 231 L773.5 232 L771 233Z" fill="#ff0000"/>
<line x1="776.5" y1="228.5" x2="776.5" y2="235.5" stroke="#ffff00" stroke-width="1"/>
<path d="M774 231 L776.5 232 L774 233Z" fill="#ff0000"/>
<line x1="808.5" y1="228.5" x2="808.5" y2="235.5" stroke="#ffff00" stroke-width="1"/>
<path d="M806 231 L808.5 232 L806 233Z" fill="#ff0000"/>
<line x1="811.5" y1="228.5" x2="811.5" y2="235.5" stroke="#ffff00" stroke-width="1"/>
<path d="M809 231 L811.5 232 L809 233Z" fill="#ff0000"/>
<line x1="844.5" y1="228.5" x2="844.5" y2="235.5" stroke="#ffff00" stroke-width="1"/>
<path d="M842 231 L844.5 232 L842 233Z" fill="#ff0000"/>
<line x1="847.5" y1="228.5" x2="847.5" y2="235.5" stroke="#ffff00" stroke-width="1"/>
<path d="M845 231 L847.5 232 L845 233Z" fill="#ff0000"/>
<line x1="878" y1="228.5" x2="878" y2="235.5" stroke="#ffff00" stroke-width="1"/>
<path d="M875.5 231 L878 232 L875.5 233Z" fill="#ff0000"/>
<text x="724.5" y="234.5" fill="#9a9a00" font-size="6.5" text-anchor="middle" font-weight="bold" textLength="14" lengthAdjust="spacingAndGlyphs">130.0</text>
<text x="758" y="234.5" fill="#9a9a00" font-size="6.5" text-anchor="middle" font-weight="bold" textLength="14" lengthAdjust="spacingAndGlyphs">130.0</text>
<text x="792.5" y="234.5" fill="#9a9a00" font-size="6.5" text-anchor="middle" font-weight="bold" textLength="14" lengthAdjust="spacingAndGlyphs">130.0</text>
<text x="828" y="234.5" fill="#9a9a00" font-size="6.5" text-anchor="middle" font-weight="bold" textLength="14" lengthAdjust="spacingAndGlyphs">130.0</text>
<text x="862" y="234.5" fill="#9a9a00" font-size="6.5" text-anchor="middle" font-weight="bold" textLength="14" lengthAdjust="spacingAndGlyphs">130.0</text>
<line x1="682" y1="245" x2="1039" y2="245" stroke="#ff0000" stroke-width="1.3"/>
<text x="755.5" y="247.5" fill="#9a9a00" font-size="6.5" text-anchor="middle" font-weight="bold" textLength="16" lengthAdjust="spacingAndGlyphs">600.0</text>
<text x="861" y="247.5" fill="#9a9a00" font-size="6.5" text-anchor="middle" font-weight="bold" textLength="16" lengthAdjust="spacingAndGlyphs">300.0</text>
<text x="966" y="247.5" fill="#9a9a00" font-size="6.5" text-anchor="middle" font-weight="bold" textLength="16" lengthAdjust="spacingAndGlyphs">600.0</text>
<path d="M968 200 L973 165.9 Q973.3 164.4 975 164.4 L1002 164.4" fill="none" stroke="#9aaa00" stroke-width="1.1"/>
<path d="M970.5 200.8 L975.2 170.1 Q975.5 168.6 977.2 168.6 L1002 168.6" fill="none" stroke="#9aaa00" stroke-width="1.1"/>
<path d="M973 201.6 L977.4 173.8 Q977.7 172.3 979.4 172.3 L1002 172.3" fill="none" stroke="#9aaa00" stroke-width="1.1"/>
<path d="M975.5 202.4 L979.6 179.2 Q979.9 177.8 981.6 177.8 L1002 177.8" fill="none" stroke="#9aaa00" stroke-width="1.1"/>
<text x="1004" y="165.6" fill="#c4dc00" font-size="5.4" font-weight="bold" textLength="32" lengthAdjust="spacingAndGlyphs">Atap Genteng</text>
<text x="1004" y="170.1" fill="#c4dc00" font-size="5.4" font-weight="bold" textLength="37" lengthAdjust="spacingAndGlyphs">Chanel C.75.100</text>
<text x="1004" y="174.8" fill="#c4dc00" font-size="5.4" font-weight="bold" textLength="37" lengthAdjust="spacingAndGlyphs">Chanel C.75.100</text>
<text x="1004" y="179.8" fill="#c4dc00" font-size="5.4" font-weight="bold" textLength="24" lengthAdjust="spacingAndGlyphs">Reng 0.45</text>
<line x1="706.5" y1="314.5" x2="720.5" y2="299.5" stroke="#00ff00" stroke-width="1"/>
<line x1="708.5" y1="316.3" x2="722.5" y2="301.2" stroke="#00ff00" stroke-width="1"/>
<line x1="707.5" y1="315.4" x2="721.5" y2="300.3" stroke="#005a00" stroke-width="1.4"/>
<line x1="708.5" y1="316.4" x2="726.5" y2="297.3" stroke="#ff0000" stroke-width="1.3"/>
<line x1="715.7" y1="308.8" x2="719.3" y2="305" stroke="#8a8a00" stroke-width="2.5"/>
<line x1="722.3" y1="299.3" x2="741.3" y2="314.4" stroke="#00ff00" stroke-width="1"/>
<line x1="720.7" y1="301.4" x2="739.7" y2="316.4" stroke="#00ff00" stroke-width="1"/>
<line x1="721.5" y1="300.3" x2="740.5" y2="315.4" stroke="#005a00" stroke-width="1.4"/>
<line x1="726.5" y1="297.3" x2="741.5" y2="316.4" stroke="#ff0000" stroke-width="1.3"/>
<line x1="732.5" y1="305" x2="735.5" y2="308.8" stroke="#8a8a00" stroke-width="2.5"/>
<line x1="739.4" y1="314.8" x2="755.4" y2="285.4" stroke="#00ff00" stroke-width="1"/>
<line x1="741.6" y1="316" x2="757.6" y2="286.6" stroke="#00ff00" stroke-width="1"/>
<line x1="740.5" y1="315.4" x2="756.5" y2="286" stroke="#005a00" stroke-width="1.4"/>
<line x1="741.5" y1="316.4" x2="761.5" y2="283" stroke="#ff0000" stroke-width="1.3"/>
<line x1="749.5" y1="303" x2="753.5" y2="296.4" stroke="#8a8a00" stroke-width="2.5"/>
<line x1="757.6" y1="285.3" x2="775.6" y2="314.7" stroke="#00ff00" stroke-width="1"/>
<line x1="755.4" y1="286.7" x2="773.4" y2="316.1" stroke="#00ff00" stroke-width="1"/>
<line x1="756.5" y1="286" x2="774.5" y2="315.4" stroke="#005a00" stroke-width="1.4"/>
<line x1="761.5" y1="283" x2="775.5" y2="316.4" stroke="#ff0000" stroke-width="1.3"/>
<line x1="767.1" y1="296.4" x2="769.9" y2="303" stroke="#8a8a00" stroke-width="2.5"/>
<line x1="773.4" y1="314.8" x2="790.4" y2="284.4" stroke="#00ff00" stroke-width="1"/>
<line x1="775.6" y1="316" x2="792.6" y2="285.6" stroke="#00ff00" stroke-width="1"/>
<line x1="774.5" y1="315.4" x2="791.5" y2="285" stroke="#005a00" stroke-width="1.4"/>
<line x1="792.6" y1="284.3" x2="810.6" y2="314.7" stroke="#00ff00" stroke-width="1"/>
<line x1="790.4" y1="285.7" x2="808.4" y2="316.1" stroke="#00ff00" stroke-width="1"/>
<line x1="791.5" y1="285" x2="809.5" y2="315.4" stroke="#005a00" stroke-width="1.4"/>
<line x1="796.5" y1="282" x2="810.5" y2="316.4" stroke="#ff0000" stroke-width="1.3"/>
<line x1="802.1" y1="295.8" x2="804.9" y2="302.6" stroke="#8a8a00" stroke-width="2.5"/>
<line x1="808.4" y1="314.8" x2="825.4" y2="284.4" stroke="#00ff00" stroke-width="1"/>
<line x1="810.6" y1="316" x2="827.6" y2="285.6" stroke="#00ff00" stroke-width="1"/>
<line x1="809.5" y1="315.4" x2="826.5" y2="285" stroke="#005a00" stroke-width="1.4"/>
<line x1="827.6" y1="284.3" x2="846.6" y2="314.7" stroke="#00ff00" stroke-width="1"/>
<line x1="825.4" y1="285.7" x2="844.4" y2="316.1" stroke="#00ff00" stroke-width="1"/>
<line x1="826.5" y1="285" x2="845.5" y2="315.4" stroke="#005a00" stroke-width="1.4"/>
<line x1="831.5" y1="282" x2="846.5" y2="316.4" stroke="#ff0000" stroke-width="1.3"/>
<line x1="837.5" y1="295.8" x2="840.5" y2="302.6" stroke="#8a8a00" stroke-width="2.5"/>
<line x1="844.3" y1="314.8" x2="860.3" y2="284.4" stroke="#00ff00" stroke-width="1"/>
<line x1="846.7" y1="316" x2="862.7" y2="285.6" stroke="#00ff00" stroke-width="1"/>
<line x1="845.5" y1="315.4" x2="861.5" y2="285" stroke="#005a00" stroke-width="1.4"/>
<line x1="862.7" y1="284.4" x2="878.7" y2="314.8" stroke="#00ff00" stroke-width="1"/>
<line x1="860.3" y1="285.6" x2="876.3" y2="316" stroke="#00ff00" stroke-width="1"/>
<line x1="861.5" y1="285" x2="877.5" y2="315.4" stroke="#005a00" stroke-width="1.4"/>
<line x1="866.5" y1="282" x2="878.5" y2="316.4" stroke="#ff0000" stroke-width="1.3"/>
<line x1="871.3" y1="295.8" x2="873.7" y2="302.6" stroke="#8a8a00" stroke-width="2.5"/>
<line x1="876.4" y1="314.7" x2="895.4" y2="284.3" stroke="#00ff00" stroke-width="1"/>
<line x1="878.6" y1="316.1" x2="897.6" y2="285.7" stroke="#00ff00" stroke-width="1"/>
<line x1="877.5" y1="315.4" x2="896.5" y2="285" stroke="#005a00" stroke-width="1.4"/>
<line x1="897.6" y1="284.4" x2="914.6" y2="314.8" stroke="#00ff00" stroke-width="1"/>
<line x1="895.4" y1="285.6" x2="912.4" y2="316" stroke="#00ff00" stroke-width="1"/>
<line x1="896.5" y1="285" x2="913.5" y2="315.4" stroke="#005a00" stroke-width="1.4"/>
<line x1="901.5" y1="282" x2="914.5" y2="316.4" stroke="#ff0000" stroke-width="1.3"/>
<line x1="906.7" y1="295.8" x2="909.3" y2="302.6" stroke="#8a8a00" stroke-width="2.5"/>
<line x1="912.4" y1="314.7" x2="930.4" y2="284.3" stroke="#00ff00" stroke-width="1"/>
<line x1="914.6" y1="316.1" x2="932.6" y2="285.7" stroke="#00ff00" stroke-width="1"/>
<line x1="913.5" y1="315.4" x2="931.5" y2="285" stroke="#005a00" stroke-width="1.4"/>
<line x1="932.6" y1="284.4" x2="949.6" y2="314.8" stroke="#00ff00" stroke-width="1"/>
<line x1="930.4" y1="285.6" x2="947.4" y2="316" stroke="#00ff00" stroke-width="1"/>
<line x1="931.5" y1="285" x2="948.5" y2="315.4" stroke="#005a00" stroke-width="1.4"/>
<line x1="936.5" y1="282" x2="949.5" y2="316.4" stroke="#ff0000" stroke-width="1.3"/>
<line x1="941.7" y1="295.8" x2="944.3" y2="302.6" stroke="#8a8a00" stroke-width="2.5"/>
<line x1="947.4" y1="314.7" x2="965.4" y2="285.3" stroke="#00ff00" stroke-width="1"/>
<line x1="949.6" y1="316.1" x2="967.6" y2="286.7" stroke="#00ff00" stroke-width="1"/>
<line x1="948.5" y1="315.4" x2="966.5" y2="286" stroke="#005a00" stroke-width="1.4"/>
<line x1="949.5" y1="316.4" x2="971.5" y2="283" stroke="#ff0000" stroke-width="1.3"/>
<line x1="958.3" y1="303.1" x2="962.7" y2="296.4" stroke="#8a8a00" stroke-width="2.5"/>
<line x1="967.6" y1="285.4" x2="983.6" y2="314.8" stroke="#00ff00" stroke-width="1"/>
<line x1="965.4" y1="286.6" x2="981.4" y2="316" stroke="#00ff00" stroke-width="1"/>
<line x1="966.5" y1="286" x2="982.5" y2="315.4" stroke="#005a00" stroke-width="1.4"/>
<line x1="971.5" y1="283" x2="983.5" y2="316.4" stroke="#ff0000" stroke-width="1.3"/>
<line x1="976.3" y1="296.4" x2="978.7" y2="303.1" stroke="#8a8a00" stroke-width="2.5"/>
<line x1="981.7" y1="314.4" x2="1000.7" y2="299.4" stroke="#00ff00" stroke-width="1"/>
<line x1="983.3" y1="316.4" x2="1002.3" y2="301.4" stroke="#00ff00" stroke-width="1"/>
<line x1="982.5" y1="315.4" x2="1001.5" y2="300.4" stroke="#005a00" stroke-width="1.4"/>
<line x1="983.5" y1="316.4" x2="1006.5" y2="297.4" stroke="#ff0000" stroke-width="1.3"/>
<line x1="992.7" y1="308.8" x2="997.3" y2="305" stroke="#8a8a00" stroke-width="2.5"/>
<line x1="1002.5" y1="299.5" x2="1016.5" y2="314.5" stroke="#00ff00" stroke-width="1"/>
<line x1="1000.5" y1="301.3" x2="1014.5" y2="316.3" stroke="#00ff00" stroke-width="1"/>
<line x1="1001.5" y1="300.4" x2="1015.5" y2="315.4" stroke="#005a00" stroke-width="1.4"/>
<line x1="1006.5" y1="297.4" x2="1016.5" y2="316.4" stroke="#ff0000" stroke-width="1.3"/>
<line x1="1010.5" y1="305" x2="1012.5" y2="308.8" stroke="#8a8a00" stroke-width="2.5"/>
<line x1="685" y1="315.4" x2="1036" y2="315.4" stroke="#00ff00" stroke-width="3"/>
<line x1="659" y1="323.4" x2="759" y2="282.5" stroke="#00ff00" stroke-width="1.3"/>
<line x1="660.3" y1="326.6" x2="760.3" y2="285.7" stroke="#00ff00" stroke-width="1"/>
<line x1="658.4" y1="322" x2="758.4" y2="281.1" stroke="#ff00ff" stroke-width="1.6"/>
<line x1="759" y1="282.5" x2="964" y2="282.5" stroke="#00ff00" stroke-width="1.3"/>
<line x1="759" y1="285.5" x2="964" y2="285.5" stroke="#00ff00" stroke-width="1.3"/>
<line x1="788.3" y1="279.5" x2="788.3" y2="282.5" stroke="#00ff00" stroke-width="1.5"/>
<line x1="817.6" y1="279.5" x2="817.6" y2="282.5" stroke="#00ff00" stroke-width="1.5"/>
<line x1="846.9" y1="279.5" x2="846.9" y2="282.5" stroke="#00ff00" stroke-width="1.5"/>
<line x1="876.1" y1="279.5" x2="876.1" y2="282.5" stroke="#00ff00" stroke-width="1.5"/>
<line x1="905.4" y1="279.5" x2="905.4" y2="282.5" stroke="#00ff00" stroke-width="1.5"/>
<line x1="934.7" y1="279.5" x2="934.7" y2="282.5" stroke="#00ff00" stroke-width="1.5"/>
<line x1="964" y1="282.5" x2="1065" y2="324" stroke="#00ff00" stroke-width="1.3"/>
<line x1="962.7" y1="285.7" x2="1063.7" y2="327.2" stroke="#00ff00" stroke-width="1"/>
<line x1="964.6" y1="281.1" x2="1065.6" y2="322.6" stroke="#ff00ff" stroke-width="1.6"/>
<line x1="659.1" y1="318" x2="718.1" y2="293.8" stroke="#8c8c00" stroke-width="3.4"/>
<line x1="660.6" y1="321.7" x2="659.5" y2="318.9" stroke="#ffff00" stroke-width="1"/>
<rect x="657.3" y="315.4" width="2.4" height="2.4" fill="#ff0000"/>
<line x1="669.1" y1="318.2" x2="667.9" y2="315.4" stroke="#ffff00" stroke-width="1"/>
<rect x="665.8" y="311.9" width="2.4" height="2.4" fill="#ff0000"/>
<line x1="677.5" y1="314.8" x2="676.3" y2="312" stroke="#ffff00" stroke-width="1"/>
<rect x="674.2" y="308.5" width="2.4" height="2.4" fill="#ff0000"/>
<line x1="685.9" y1="311.3" x2="684.8" y2="308.5" stroke="#ffff00" stroke-width="1"/>
<rect x="682.6" y="305" width="2.4" height="2.4" fill="#ff0000"/>
<line x1="694.3" y1="307.9" x2="693.2" y2="305.1" stroke="#ffff00" stroke-width="1"/>
<rect x="691.1" y="301.6" width="2.4" height="2.4" fill="#ff0000"/>
<line x1="702.8" y1="304.4" x2="701.6" y2="301.6" stroke="#ffff00" stroke-width="1"/>
<rect x="699.5" y="298.1" width="2.4" height="2.4" fill="#ff0000"/>
<line x1="711.2" y1="301" x2="710.1" y2="298.2" stroke="#ffff00" stroke-width="1"/>
<rect x="707.9" y="294.7" width="2.4" height="2.4" fill="#ff0000"/>
<line x1="719.6" y1="297.5" x2="718.5" y2="294.7" stroke="#ffff00" stroke-width="1"/>
<rect x="716.3" y="291.2" width="2.4" height="2.4" fill="#ff0000"/>
<line x1="1006.9" y1="294.7" x2="1064.9" y2="318.6" stroke="#8c8c00" stroke-width="3.4"/>
<line x1="1005.4" y1="298.4" x2="1006.5" y2="295.6" stroke="#ffff00" stroke-width="1"/>
<rect x="1006.3" y="292.1" width="2.4" height="2.4" fill="#ff0000"/>
<line x1="1015" y1="302.4" x2="1016.2" y2="299.6" stroke="#ffff00" stroke-width="1"/>
<rect x="1015.9" y="296.1" width="2.4" height="2.4" fill="#ff0000"/>
<line x1="1024.7" y1="306.4" x2="1025.9" y2="303.6" stroke="#ffff00" stroke-width="1"/>
<rect x="1025.6" y="300.1" width="2.4" height="2.4" fill="#ff0000"/>
<line x1="1034.4" y1="310.3" x2="1035.5" y2="307.6" stroke="#ffff00" stroke-width="1"/>
<rect x="1035.3" y="304.1" width="2.4" height="2.4" fill="#ff0000"/>
<line x1="1044" y1="314.3" x2="1045.2" y2="311.5" stroke="#ffff00" stroke-width="1"/>
<rect x="1044.9" y="308" width="2.4" height="2.4" fill="#ff0000"/>
<line x1="1053.7" y1="318.3" x2="1054.9" y2="315.5" stroke="#ffff00" stroke-width="1"/>
<rect x="1054.6" y="312" width="2.4" height="2.4" fill="#ff0000"/>
<line x1="1063.4" y1="322.3" x2="1064.5" y2="319.5" stroke="#ffff00" stroke-width="1"/>
<rect x="1064.3" y="316" width="2.4" height="2.4" fill="#ff0000"/>
<rect x="682.5" y="316.9" width="5" height="7" fill="#202020" stroke="#e0e0e0" stroke-width="1.2"/>
<path d="M681 327.4 L685 323.9 L689 327.4Z" fill="none" stroke="#e8e8e8" stroke-width="1.2"/>
<line x1="685" y1="327.4" x2="685" y2="338" stroke="#d8d800" stroke-width="1.2"/>
<rect x="823.5" y="316.9" width="5" height="7" fill="#202020" stroke="#e0e0e0" stroke-width="1.2"/>
<path d="M822 327.4 L826 323.9 L830 327.4Z" fill="none" stroke="#e8e8e8" stroke-width="1.2"/>
<line x1="826" y1="327.4" x2="826" y2="338" stroke="#d8d800" stroke-width="1.2"/>
<rect x="893.5" y="316.9" width="5" height="7" fill="#202020" stroke="#e0e0e0" stroke-width="1.2"/>
<path d="M892 327.4 L896 323.9 L900 327.4Z" fill="none" stroke="#e8e8e8" stroke-width="1.2"/>
<line x1="896" y1="327.4" x2="896" y2="338" stroke="#d8d800" stroke-width="1.2"/>
<rect x="1033.5" y="316.9" width="5" height="7" fill="#202020" stroke="#e0e0e0" stroke-width="1.2"/>
<path d="M1032 327.4 L1036 323.9 L1040 327.4Z" fill="none" stroke="#e8e8e8" stroke-width="1.2"/>
<line x1="1036" y1="327.4" x2="1036" y2="338" stroke="#d8d800" stroke-width="1.2"/>
<line x1="705" y1="321.6" x2="881" y2="321.6" stroke="#ff0000" stroke-width="1.2"/>
<line x1="708" y1="318.1" x2="708" y2="325.1" stroke="#ffff00" stroke-width="1"/>
<path d="M710.5 320.6 L708 321.6 L710.5 322.6Z" fill="#ff0000"/>
<line x1="739" y1="318.1" x2="739" y2="325.1" stroke="#ffff00" stroke-width="1"/>
<path d="M736.5 320.6 L739 321.6 L736.5 322.6Z" fill="#ff0000"/>
<line x1="742" y1="318.1" x2="742" y2="325.1" stroke="#ffff00" stroke-width="1"/>
<path d="M739.5 320.6 L742 321.6 L739.5 322.6Z" fill="#ff0000"/>
<line x1="773" y1="318.1" x2="773" y2="325.1" stroke="#ffff00" stroke-width="1"/>
<path d="M770.5 320.6 L773 321.6 L770.5 322.6Z" fill="#ff0000"/>
<line x1="776" y1="318.1" x2="776" y2="325.1" stroke="#ffff00" stroke-width="1"/>
<path d="M773.5 320.6 L776 321.6 L773.5 322.6Z" fill="#ff0000"/>
<line x1="808" y1="318.1" x2="808" y2="325.1" stroke="#ffff00" stroke-width="1"/>
<path d="M805.5 320.6 L808 321.6 L805.5 322.6Z" fill="#ff0000"/>
<line x1="811" y1="318.1" x2="811" y2="325.1" stroke="#ffff00" stroke-width="1"/>
<path d="M808.5 320.6 L811 321.6 L808.5 322.6Z" fill="#ff0000"/>
<line x1="844" y1="318.1" x2="844" y2="325.1" stroke="#ffff00" stroke-width="1"/>
<path d="M841.5 320.6 L844 321.6 L841.5 322.6Z" fill="#ff0000"/>
<line x1="847" y1="318.1" x2="847" y2="325.1" stroke="#ffff00" stroke-width="1"/>
<path d="M844.5 320.6 L847 321.6 L844.5 322.6Z" fill="#ff0000"/>
<line x1="878" y1="318.1" x2="878" y2="325.1" stroke="#ffff00" stroke-width="1"/>
<path d="M875.5 320.6 L878 321.6 L875.5 322.6Z" fill="#ff0000"/>
<text x="724.2" y="324.1" fill="#9a9a00" font-size="6.5" text-anchor="middle" font-weight="bold" textLength="14" lengthAdjust="spacingAndGlyphs">130.0</text>
<text x="757.5" y="324.1" fill="#9a9a00" font-size="6.5" text-anchor="middle" font-weight="bold" textLength="14" lengthAdjust="spacingAndGlyphs">130.0</text>
<text x="792" y="324.1" fill="#9a9a00" font-size="6.5" text-anchor="middle" font-weight="bold" textLength="14" lengthAdjust="spacingAndGlyphs">130.0</text>
<text x="827.5" y="324.1" fill="#9a9a00" font-size="6.5" text-anchor="middle" font-weight="bold" textLength="14" lengthAdjust="spacingAndGlyphs">130.0</text>
<text x="861.8" y="324.1" fill="#9a9a00" font-size="6.5" text-anchor="middle" font-weight="bold" textLength="14" lengthAdjust="spacingAndGlyphs">130.0</text>
<line x1="682" y1="334" x2="1039" y2="334" stroke="#ff0000" stroke-width="1.3"/>
<text x="755.5" y="336.5" fill="#9a9a00" font-size="6.5" text-anchor="middle" font-weight="bold" textLength="16" lengthAdjust="spacingAndGlyphs">600.0</text>
<text x="861" y="336.5" fill="#9a9a00" font-size="6.5" text-anchor="middle" font-weight="bold" textLength="16" lengthAdjust="spacingAndGlyphs">300.0</text>
<text x="966" y="336.5" fill="#9a9a00" font-size="6.5" text-anchor="middle" font-weight="bold" textLength="16" lengthAdjust="spacingAndGlyphs">600.0</text>
<path d="M965 283 L970 254.9 Q970.3 253.4 972 253.4 L1002 253.4" fill="none" stroke="#9aaa00" stroke-width="1.1"/>
<path d="M967.5 283.8 L972.2 259.1 Q972.5 257.6 974.2 257.6 L1002 257.6" fill="none" stroke="#9aaa00" stroke-width="1.1"/>
<path d="M970 284.6 L974.4 262.8 Q974.7 261.3 976.4 261.3 L1002 261.3" fill="none" stroke="#9aaa00" stroke-width="1.1"/>
<path d="M972.5 285.4 L976.6 268.2 Q976.9 266.8 978.6 266.8 L1002 266.8" fill="none" stroke="#9aaa00" stroke-width="1.1"/>
<text x="1004" y="254.6" fill="#c4dc00" font-size="5.4" font-weight="bold" textLength="32" lengthAdjust="spacingAndGlyphs">Atap Genteng</text>
<text x="1004" y="259.1" fill="#c4dc00" font-size="5.4" font-weight="bold" textLength="37" lengthAdjust="spacingAndGlyphs">Chanel C.75.100</text>
<text x="1004" y="263.8" fill="#c4dc00" font-size="5.4" font-weight="bold" textLength="37" lengthAdjust="spacingAndGlyphs">Chanel C.75.100</text>
<text x="1004" y="268.8" fill="#c4dc00" font-size="5.4" font-weight="bold" textLength="24" lengthAdjust="spacingAndGlyphs">Reng 0.45</text>
<line x1="708" y1="403.5" x2="722" y2="388.1" stroke="#00ff00" stroke-width="1"/>
<line x1="710" y1="405.3" x2="724" y2="389.8" stroke="#00ff00" stroke-width="1"/>
<line x1="709" y1="404.4" x2="723" y2="388.9" stroke="#005a00" stroke-width="1.4"/>
<line x1="710" y1="405.4" x2="728" y2="385.9" stroke="#ff0000" stroke-width="1.3"/>
<line x1="717.2" y1="397.6" x2="720.8" y2="393.7" stroke="#8a8a00" stroke-width="2.5"/>
<line x1="723.8" y1="387.9" x2="742.8" y2="403.4" stroke="#00ff00" stroke-width="1"/>
<line x1="722.2" y1="390" x2="741.2" y2="405.4" stroke="#00ff00" stroke-width="1"/>
<line x1="723" y1="388.9" x2="742" y2="404.4" stroke="#005a00" stroke-width="1.4"/>
<line x1="728" y1="385.9" x2="743" y2="405.4" stroke="#ff0000" stroke-width="1.3"/>
<line x1="734" y1="393.7" x2="737" y2="397.6" stroke="#8a8a00" stroke-width="2.5"/>
<line x1="741" y1="403.6" x2="757" y2="382.7" stroke="#00ff00" stroke-width="1"/>
<line x1="743" y1="405.2" x2="759" y2="384.3" stroke="#00ff00" stroke-width="1"/>
<line x1="742" y1="404.4" x2="758" y2="383.5" stroke="#005a00" stroke-width="1.4"/>
<line x1="759" y1="382.7" x2="777" y2="403.6" stroke="#00ff00" stroke-width="1"/>
<line x1="757" y1="384.3" x2="775" y2="405.2" stroke="#00ff00" stroke-width="1"/>
<line x1="758" y1="383.5" x2="776" y2="404.4" stroke="#005a00" stroke-width="1.4"/>
<line x1="763" y1="380.5" x2="777" y2="405.4" stroke="#ff0000" stroke-width="1.3"/>
<line x1="768.6" y1="390.5" x2="771.4" y2="395.4" stroke="#8a8a00" stroke-width="2.5"/>
<line x1="775" y1="403.6" x2="792" y2="382.7" stroke="#00ff00" stroke-width="1"/>
<line x1="777" y1="405.2" x2="794" y2="384.3" stroke="#00ff00" stroke-width="1"/>
<line x1="776" y1="404.4" x2="793" y2="383.5" stroke="#005a00" stroke-width="1.4"/>
<line x1="794" y1="382.7" x2="812" y2="403.6" stroke="#00ff00" stroke-width="1"/>
<line x1="792" y1="384.3" x2="810" y2="405.2" stroke="#00ff00" stroke-width="1"/>
<line x1="793" y1="383.5" x2="811" y2="404.4" stroke="#005a00" stroke-width="1.4"/>
<line x1="798" y1="380.5" x2="812" y2="405.4" stroke="#ff0000" stroke-width="1.3"/>
<line x1="803.6" y1="390.5" x2="806.4" y2="395.4" stroke="#8a8a00" stroke-width="2.5"/>
<line x1="810" y1="403.6" x2="827" y2="382.7" stroke="#00ff00" stroke-width="1"/>
<line x1="812" y1="405.2" x2="829" y2="384.3" stroke="#00ff00" stroke-width="1"/>
<line x1="811" y1="404.4" x2="828" y2="383.5" stroke="#005a00" stroke-width="1.4"/>
<line x1="829" y1="382.6" x2="848" y2="403.5" stroke="#00ff00" stroke-width="1"/>
<line x1="827" y1="384.4" x2="846" y2="405.3" stroke="#00ff00" stroke-width="1"/>
<line x1="828" y1="383.5" x2="847" y2="404.4" stroke="#005a00" stroke-width="1.4"/>
<line x1="833" y1="380.5" x2="848" y2="405.4" stroke="#ff0000" stroke-width="1.3"/>
<line x1="839" y1="390.5" x2="842" y2="395.4" stroke="#8a8a00" stroke-width="2.5"/>
<line x1="846" y1="403.6" x2="862" y2="382.7" stroke="#00ff00" stroke-width="1"/>
<line x1="848" y1="405.2" x2="864" y2="384.3" stroke="#00ff00" stroke-width="1"/>
<line x1="847" y1="404.4" x2="863" y2="383.5" stroke="#005a00" stroke-width="1.4"/>
<line x1="864" y1="382.7" x2="880" y2="403.6" stroke="#00ff00" stroke-width="1"/>
<line x1="862" y1="384.3" x2="878" y2="405.2" stroke="#00ff00" stroke-width="1"/>
<line x1="863" y1="383.5" x2="879" y2="404.4" stroke="#005a00" stroke-width="1.4"/>
<line x1="868" y1="380.5" x2="880" y2="405.4" stroke="#ff0000" stroke-width="1.3"/>
<line x1="872.8" y1="390.5" x2="875.2" y2="395.4" stroke="#8a8a00" stroke-width="2.5"/>
<line x1="878" y1="403.5" x2="897" y2="382.6" stroke="#00ff00" stroke-width="1"/>
<line x1="880" y1="405.3" x2="899" y2="384.4" stroke="#00ff00" stroke-width="1"/>
<line x1="879" y1="404.4" x2="898" y2="383.5" stroke="#005a00" stroke-width="1.4"/>
<line x1="899" y1="382.7" x2="916" y2="403.6" stroke="#00ff00" stroke-width="1"/>
<line x1="897" y1="384.3" x2="914" y2="405.2" stroke="#00ff00" stroke-width="1"/>
<line x1="898" y1="383.5" x2="915" y2="404.4" stroke="#005a00" stroke-width="1.4"/>
<line x1="903" y1="380.5" x2="916" y2="405.4" stroke="#ff0000" stroke-width="1.3"/>
<line x1="908.2" y1="390.5" x2="910.8" y2="395.4" stroke="#8a8a00" stroke-width="2.5"/>
<line x1="914" y1="403.6" x2="932" y2="382.7" stroke="#00ff00" stroke-width="1"/>
<line x1="916" y1="405.2" x2="934" y2="384.3" stroke="#00ff00" stroke-width="1"/>
<line x1="915" y1="404.4" x2="933" y2="383.5" stroke="#005a00" stroke-width="1.4"/>
<line x1="934" y1="382.7" x2="951" y2="403.6" stroke="#00ff00" stroke-width="1"/>
<line x1="932" y1="384.3" x2="949" y2="405.2" stroke="#00ff00" stroke-width="1"/>
<line x1="933" y1="383.5" x2="950" y2="404.4" stroke="#005a00" stroke-width="1.4"/>
<line x1="938" y1="380.5" x2="951" y2="405.4" stroke="#ff0000" stroke-width="1.3"/>
<line x1="943.2" y1="390.5" x2="945.8" y2="395.4" stroke="#8a8a00" stroke-width="2.5"/>
<line x1="949" y1="403.6" x2="967" y2="382.7" stroke="#00ff00" stroke-width="1"/>
<line x1="951" y1="405.2" x2="969" y2="384.3" stroke="#00ff00" stroke-width="1"/>
<line x1="950" y1="404.4" x2="968" y2="383.5" stroke="#005a00" stroke-width="1.4"/>
<line x1="969" y1="382.7" x2="985" y2="403.6" stroke="#00ff00" stroke-width="1"/>
<line x1="967" y1="384.3" x2="983" y2="405.2" stroke="#00ff00" stroke-width="1"/>
<line x1="968" y1="383.5" x2="984" y2="404.4" stroke="#005a00" stroke-width="1.4"/>
<line x1="973" y1="380.5" x2="985" y2="405.4" stroke="#ff0000" stroke-width="1.3"/>
<line x1="977.8" y1="390.5" x2="980.2" y2="395.4" stroke="#8a8a00" stroke-width="2.5"/>
<line x1="983.2" y1="403.4" x2="1002.2" y2="388.1" stroke="#00ff00" stroke-width="1"/>
<line x1="984.8" y1="405.4" x2="1003.8" y2="390.1" stroke="#00ff00" stroke-width="1"/>
<line x1="984" y1="404.4" x2="1003" y2="389.1" stroke="#005a00" stroke-width="1.4"/>
<line x1="985" y1="405.4" x2="1008" y2="386.1" stroke="#ff0000" stroke-width="1.3"/>
<line x1="994.2" y1="397.7" x2="998.8" y2="393.8" stroke="#8a8a00" stroke-width="2.5"/>
<line x1="1004" y1="388.2" x2="1018" y2="403.5" stroke="#00ff00" stroke-width="1"/>
<line x1="1002" y1="390" x2="1016" y2="405.3" stroke="#00ff00" stroke-width="1"/>
<line x1="1003" y1="389.1" x2="1017" y2="404.4" stroke="#005a00" stroke-width="1.4"/>
<line x1="1008" y1="386.1" x2="1018" y2="405.4" stroke="#ff0000" stroke-width="1.3"/>
<line x1="1012" y1="393.8" x2="1014" y2="397.7" stroke="#8a8a00" stroke-width="2.5"/>
<line x1="685" y1="402.9" x2="1036" y2="402.9" stroke="#00ff00" stroke-width="1.2"/>
<line x1="685" y1="406.4" x2="1036" y2="406.4" stroke="#00ff00" stroke-width="1.2"/>
<line x1="685" y1="404.7" x2="1036" y2="404.7" stroke="#007000" stroke-width="2.2"/>
<line x1="658" y1="413.7" x2="736" y2="381" stroke="#00ff00" stroke-width="1.3"/>
<line x1="659.4" y1="416.9" x2="737.4" y2="384.2" stroke="#00ff00" stroke-width="1"/>
<line x1="657.4" y1="412.3" x2="735.4" y2="379.6" stroke="#ff00ff" stroke-width="1.6"/>
<line x1="736" y1="381" x2="990" y2="381" stroke="#00ff00" stroke-width="1.3"/>
<line x1="736" y1="384" x2="990" y2="384" stroke="#00ff00" stroke-width="1.3"/>
<line x1="736" y1="382.5" x2="990" y2="382.5" stroke="#007000" stroke-width="2"/>
<line x1="767.8" y1="378" x2="767.8" y2="381" stroke="#00ff00" stroke-width="1.5"/>
<line x1="799.5" y1="378" x2="799.5" y2="381" stroke="#00ff00" stroke-width="1.5"/>
<line x1="831.2" y1="378" x2="831.2" y2="381" stroke="#00ff00" stroke-width="1.5"/>
<line x1="863" y1="378" x2="863" y2="381" stroke="#00ff00" stroke-width="1.5"/>
<line x1="894.8" y1="378" x2="894.8" y2="381" stroke="#00ff00" stroke-width="1.5"/>
<line x1="926.5" y1="378" x2="926.5" y2="381" stroke="#00ff00" stroke-width="1.5"/>
<line x1="958.2" y1="378" x2="958.2" y2="381" stroke="#00ff00" stroke-width="1.5"/>
<line x1="990" y1="381" x2="1064" y2="413" stroke="#00ff00" stroke-width="1.3"/>
<line x1="988.6" y1="384.2" x2="1062.6" y2="416.2" stroke="#00ff00" stroke-width="1"/>
<line x1="990.6" y1="379.6" x2="1064.6" y2="411.6" stroke="#ff00ff" stroke-width="1.6"/>
<line x1="658.1" y1="408.3" x2="718.1" y2="383.1" stroke="#8c8c00" stroke-width="3.4"/>
<line x1="659.6" y1="411.9" x2="658.5" y2="409.2" stroke="#ffff00" stroke-width="1"/>
<rect x="656.3" y="405.7" width="2.4" height="2.4" fill="#ff0000"/>
<line x1="668.2" y1="408.3" x2="667" y2="405.6" stroke="#ffff00" stroke-width="1"/>
<rect x="664.9" y="402.1" width="2.4" height="2.4" fill="#ff0000"/>
<line x1="676.8" y1="404.8" x2="675.6" y2="402" stroke="#ffff00" stroke-width="1"/>
<rect x="673.4" y="398.5" width="2.4" height="2.4" fill="#ff0000"/>
<line x1="685.3" y1="401.2" x2="684.2" y2="398.4" stroke="#ffff00" stroke-width="1"/>
<rect x="682" y="394.9" width="2.4" height="2.4" fill="#ff0000"/>
<line x1="693.9" y1="397.6" x2="692.7" y2="394.8" stroke="#ffff00" stroke-width="1"/>
<rect x="690.6" y="391.3" width="2.4" height="2.4" fill="#ff0000"/>
<line x1="702.5" y1="394" x2="701.3" y2="391.2" stroke="#ffff00" stroke-width="1"/>
<rect x="699.1" y="387.7" width="2.4" height="2.4" fill="#ff0000"/>
<line x1="711" y1="390.4" x2="709.9" y2="387.6" stroke="#ffff00" stroke-width="1"/>
<rect x="707.7" y="384.1" width="2.4" height="2.4" fill="#ff0000"/>
<line x1="719.6" y1="386.8" x2="718.5" y2="384" stroke="#ffff00" stroke-width="1"/>
<rect x="716.3" y="380.5" width="2.4" height="2.4" fill="#ff0000"/>
<line x1="1002" y1="380.7" x2="1064" y2="407.5" stroke="#8c8c00" stroke-width="3.4"/>
<line x1="1000.4" y1="384.4" x2="1001.6" y2="381.7" stroke="#ffff00" stroke-width="1"/>
<rect x="1001.4" y="378.2" width="2.4" height="2.4" fill="#ff0000"/>
<line x1="1009.3" y1="388.2" x2="1010.4" y2="385.5" stroke="#ffff00" stroke-width="1"/>
<rect x="1010.2" y="382" width="2.4" height="2.4" fill="#ff0000"/>
<line x1="1018.1" y1="392.1" x2="1019.3" y2="389.3" stroke="#ffff00" stroke-width="1"/>
<rect x="1019.1" y="385.8" width="2.4" height="2.4" fill="#ff0000"/>
<line x1="1027" y1="395.9" x2="1028.2" y2="393.1" stroke="#ffff00" stroke-width="1"/>
<rect x="1028" y="389.6" width="2.4" height="2.4" fill="#ff0000"/>
<line x1="1035.8" y1="399.7" x2="1037" y2="397" stroke="#ffff00" stroke-width="1"/>
<rect x="1036.8" y="393.5" width="2.4" height="2.4" fill="#ff0000"/>
<line x1="1044.7" y1="403.6" x2="1045.9" y2="400.8" stroke="#ffff00" stroke-width="1"/>
<rect x="1045.7" y="397.3" width="2.4" height="2.4" fill="#ff0000"/>
<line x1="1053.5" y1="407.4" x2="1054.7" y2="404.6" stroke="#ffff00" stroke-width="1"/>
<rect x="1054.5" y="401.1" width="2.4" height="2.4" fill="#ff0000"/>
<line x1="1062.4" y1="411.2" x2="1063.6" y2="408.5" stroke="#ffff00" stroke-width="1"/>
<rect x="1063.4" y="405" width="2.4" height="2.4" fill="#ff0000"/>
<rect x="682.5" y="405.9" width="5" height="7" fill="#202020" stroke="#e0e0e0" stroke-width="1.2"/>
<path d="M681 416.4 L685 412.9 L689 416.4Z" fill="none" stroke="#e8e8e8" stroke-width="1.2"/>
<line x1="685" y1="416.4" x2="685" y2="426" stroke="#d8d800" stroke-width="1.2"/>
<rect x="823.5" y="405.9" width="5" height="7" fill="#202020" stroke="#e0e0e0" stroke-width="1.2"/>
<path d="M822 416.4 L826 412.9 L830 416.4Z" fill="none" stroke="#e8e8e8" stroke-width="1.2"/>
<line x1="826" y1="416.4" x2="826" y2="426" stroke="#d8d800" stroke-width="1.2"/>
<rect x="893.5" y="405.9" width="5" height="7" fill="#202020" stroke="#e0e0e0" stroke-width="1.2"/>
<path d="M892 416.4 L896 412.9 L900 416.4Z" fill="none" stroke="#e8e8e8" stroke-width="1.2"/>
<line x1="896" y1="416.4" x2="896" y2="426" stroke="#d8d800" stroke-width="1.2"/>
<rect x="1033.5" y="405.9" width="5" height="7" fill="#202020" stroke="#e0e0e0" stroke-width="1.2"/>
<path d="M1032 416.4 L1036 412.9 L1040 416.4Z" fill="none" stroke="#e8e8e8" stroke-width="1.2"/>
<line x1="1036" y1="416.4" x2="1036" y2="426" stroke="#d8d800" stroke-width="1.2"/>
<line x1="705" y1="410" x2="881" y2="410" stroke="#ff0000" stroke-width="1.2"/>
<line x1="708" y1="406.5" x2="708" y2="413.5" stroke="#ffff00" stroke-width="1"/>
<path d="M710.5 409 L708 410 L710.5 411Z" fill="#ff0000"/>
<line x1="740.5" y1="406.5" x2="740.5" y2="413.5" stroke="#ffff00" stroke-width="1"/>
<path d="M738 409 L740.5 410 L738 411Z" fill="#ff0000"/>
<line x1="743.5" y1="406.5" x2="743.5" y2="413.5" stroke="#ffff00" stroke-width="1"/>
<path d="M741 409 L743.5 410 L741 411Z" fill="#ff0000"/>
<line x1="774.5" y1="406.5" x2="774.5" y2="413.5" stroke="#ffff00" stroke-width="1"/>
<path d="M772 409 L774.5 410 L772 411Z" fill="#ff0000"/>
<line x1="777.5" y1="406.5" x2="777.5" y2="413.5" stroke="#ffff00" stroke-width="1"/>
<path d="M775 409 L777.5 410 L775 411Z" fill="#ff0000"/>
<line x1="809.5" y1="406.5" x2="809.5" y2="413.5" stroke="#ffff00" stroke-width="1"/>
<path d="M807 409 L809.5 410 L807 411Z" fill="#ff0000"/>
<line x1="812.5" y1="406.5" x2="812.5" y2="413.5" stroke="#ffff00" stroke-width="1"/>
<path d="M810 409 L812.5 410 L810 411Z" fill="#ff0000"/>
<line x1="845.5" y1="406.5" x2="845.5" y2="413.5" stroke="#ffff00" stroke-width="1"/>
<path d="M843 409 L845.5 410 L843 411Z" fill="#ff0000"/>
<line x1="848.5" y1="406.5" x2="848.5" y2="413.5" stroke="#ffff00" stroke-width="1"/>
<path d="M846 409 L848.5 410 L846 411Z" fill="#ff0000"/>
<line x1="878" y1="406.5" x2="878" y2="413.5" stroke="#ffff00" stroke-width="1"/>
<path d="M875.5 409 L878 410 L875.5 411Z" fill="#ff0000"/>
<text x="725" y="412.5" fill="#9a9a00" font-size="6.5" text-anchor="middle" font-weight="bold" textLength="14" lengthAdjust="spacingAndGlyphs">130.0</text>
<text x="759" y="412.5" fill="#9a9a00" font-size="6.5" text-anchor="middle" font-weight="bold" textLength="14" lengthAdjust="spacingAndGlyphs">130.0</text>
<text x="793.5" y="412.5" fill="#9a9a00" font-size="6.5" text-anchor="middle" font-weight="bold" textLength="14" lengthAdjust="spacingAndGlyphs">130.0</text>
<text x="829" y="412.5" fill="#9a9a00" font-size="6.5" text-anchor="middle" font-weight="bold" textLength="14" lengthAdjust="spacingAndGlyphs">130.0</text>
<text x="862.5" y="412.5" fill="#9a9a00" font-size="6.5" text-anchor="middle" font-weight="bold" textLength="14" lengthAdjust="spacingAndGlyphs">130.0</text>
<line x1="682" y1="422" x2="1039" y2="422" stroke="#ff0000" stroke-width="1.3"/>
<text x="755.5" y="424.5" fill="#9a9a00" font-size="6.5" text-anchor="middle" font-weight="bold" textLength="16" lengthAdjust="spacingAndGlyphs">600.0</text>
<text x="861" y="424.5" fill="#9a9a00" font-size="6.5" text-anchor="middle" font-weight="bold" textLength="16" lengthAdjust="spacingAndGlyphs">300.0</text>
<text x="966" y="424.5" fill="#9a9a00" font-size="6.5" text-anchor="middle" font-weight="bold" textLength="16" lengthAdjust="spacingAndGlyphs">600.0</text>
<path d="M990 381 L995 352.9 Q995.3 351.4 997 351.4 L1028 351.4" fill="none" stroke="#9aaa00" stroke-width="1.1"/>
<path d="M992.5 381.8 L997.2 357.1 Q997.5 355.6 999.2 355.6 L1028 355.6" fill="none" stroke="#9aaa00" stroke-width="1.1"/>
<path d="M995 382.6 L999.4 360.8 Q999.7 359.3 1001.4 359.3 L1028 359.3" fill="none" stroke="#9aaa00" stroke-width="1.1"/>
<path d="M997.5 383.4 L1001.6 366.2 Q1001.9 364.8 1003.6 364.8 L1028 364.8" fill="none" stroke="#9aaa00" stroke-width="1.1"/>
<text x="1030" y="352.6" fill="#c4dc00" font-size="5.4" font-weight="bold" textLength="32" lengthAdjust="spacingAndGlyphs">Atap Genteng</text>
<text x="1030" y="357.1" fill="#c4dc00" font-size="5.4" font-weight="bold" textLength="37" lengthAdjust="spacingAndGlyphs">Chanel C.75.100</text>
<text x="1030" y="361.8" fill="#c4dc00" font-size="5.4" font-weight="bold" textLength="37" lengthAdjust="spacingAndGlyphs">Chanel C.75.100</text>
<text x="1030" y="366.8" fill="#c4dc00" font-size="5.4" font-weight="bold" textLength="24" lengthAdjust="spacingAndGlyphs">Reng 0.45</text>
<line x1="706.7" y1="476.4" x2="720.7" y2="465.5" stroke="#00ff00" stroke-width="1"/>
<line x1="708.3" y1="478.4" x2="722.3" y2="467.5" stroke="#00ff00" stroke-width="1"/>
<line x1="707.5" y1="477.4" x2="721.5" y2="466.5" stroke="#005a00" stroke-width="1.4"/>
<line x1="722.1" y1="465.4" x2="741.1" y2="476.3" stroke="#00ff00" stroke-width="1"/>
<line x1="720.9" y1="467.6" x2="739.9" y2="478.5" stroke="#00ff00" stroke-width="1"/>
<line x1="721.5" y1="466.5" x2="740.5" y2="477.4" stroke="#005a00" stroke-width="1.4"/>
<line x1="726.5" y1="463.5" x2="741.5" y2="478.4" stroke="#ff0000" stroke-width="1.3"/>
<line x1="732.5" y1="469.5" x2="735.5" y2="472.4" stroke="#8a8a00" stroke-width="2.5"/>
<line x1="739.8" y1="476.3" x2="755.8" y2="465.4" stroke="#00ff00" stroke-width="1"/>
<line x1="741.2" y1="478.5" x2="757.2" y2="467.6" stroke="#00ff00" stroke-width="1"/>
<line x1="740.5" y1="477.4" x2="756.5" y2="466.5" stroke="#005a00" stroke-width="1.4"/>
<line x1="757.2" y1="465.4" x2="775.2" y2="476.3" stroke="#00ff00" stroke-width="1"/>
<line x1="755.8" y1="467.6" x2="773.8" y2="478.5" stroke="#00ff00" stroke-width="1"/>
<line x1="756.5" y1="466.5" x2="774.5" y2="477.4" stroke="#005a00" stroke-width="1.4"/>
<line x1="761.5" y1="463.5" x2="775.5" y2="478.4" stroke="#ff0000" stroke-width="1.3"/>
<line x1="767.1" y1="469.5" x2="769.9" y2="472.4" stroke="#8a8a00" stroke-width="2.5"/>
<line x1="773.8" y1="476.3" x2="790.8" y2="465.4" stroke="#00ff00" stroke-width="1"/>
<line x1="775.2" y1="478.5" x2="792.2" y2="467.6" stroke="#00ff00" stroke-width="1"/>
<line x1="774.5" y1="477.4" x2="791.5" y2="466.5" stroke="#005a00" stroke-width="1.4"/>
<line x1="792.2" y1="465.4" x2="810.2" y2="476.3" stroke="#00ff00" stroke-width="1"/>
<line x1="790.8" y1="467.6" x2="808.8" y2="478.5" stroke="#00ff00" stroke-width="1"/>
<line x1="791.5" y1="466.5" x2="809.5" y2="477.4" stroke="#005a00" stroke-width="1.4"/>
<line x1="796.5" y1="463.5" x2="810.5" y2="478.4" stroke="#ff0000" stroke-width="1.3"/>
<line x1="802.1" y1="469.5" x2="804.9" y2="472.4" stroke="#8a8a00" stroke-width="2.5"/>
<line x1="808.8" y1="476.3" x2="825.8" y2="465.4" stroke="#00ff00" stroke-width="1"/>
<line x1="810.2" y1="478.5" x2="827.2" y2="467.6" stroke="#00ff00" stroke-width="1"/>
<line x1="809.5" y1="477.4" x2="826.5" y2="466.5" stroke="#005a00" stroke-width="1.4"/>
<line x1="827.1" y1="465.4" x2="846.1" y2="476.3" stroke="#00ff00" stroke-width="1"/>
<line x1="825.9" y1="467.6" x2="844.9" y2="478.5" stroke="#00ff00" stroke-width="1"/>
<line x1="826.5" y1="466.5" x2="845.5" y2="477.4" stroke="#005a00" stroke-width="1.4"/>
<line x1="831.5" y1="463.5" x2="846.5" y2="478.4" stroke="#ff0000" stroke-width="1.3"/>
<line x1="837.5" y1="469.5" x2="840.5" y2="472.4" stroke="#8a8a00" stroke-width="2.5"/>
<line x1="844.8" y1="476.3" x2="860.8" y2="465.4" stroke="#00ff00" stroke-width="1"/>
<line x1="846.2" y1="478.5" x2="862.2" y2="467.6" stroke="#00ff00" stroke-width="1"/>
<line x1="845.5" y1="477.4" x2="861.5" y2="466.5" stroke="#005a00" stroke-width="1.4"/>
<line x1="862.2" y1="465.4" x2="878.2" y2="476.3" stroke="#00ff00" stroke-width="1"/>
<line x1="860.8" y1="467.6" x2="876.8" y2="478.5" stroke="#00ff00" stroke-width="1"/>
<line x1="861.5" y1="466.5" x2="877.5" y2="477.4" stroke="#005a00" stroke-width="1.4"/>
<line x1="866.5" y1="463.5" x2="878.5" y2="478.4" stroke="#ff0000" stroke-width="1.3"/>
<line x1="871.3" y1="469.5" x2="873.7" y2="472.4" stroke="#8a8a00" stroke-width="2.5"/>
<line x1="876.9" y1="476.3" x2="895.9" y2="465.4" stroke="#00ff00" stroke-width="1"/>
<line x1="878.1" y1="478.5" x2="897.1" y2="467.6" stroke="#00ff00" stroke-width="1"/>
<line x1="877.5" y1="477.4" x2="896.5" y2="466.5" stroke="#005a00" stroke-width="1.4"/>
<line x1="897.2" y1="465.4" x2="914.2" y2="476.3" stroke="#00ff00" stroke-width="1"/>
<line x1="895.8" y1="467.6" x2="912.8" y2="478.5" stroke="#00ff00" stroke-width="1"/>
<line x1="896.5" y1="466.5" x2="913.5" y2="477.4" stroke="#005a00" stroke-width="1.4"/>
<line x1="901.5" y1="463.5" x2="914.5" y2="478.4" stroke="#ff0000" stroke-width="1.3"/>
<line x1="906.7" y1="469.5" x2="909.3" y2="472.4" stroke="#8a8a00" stroke-width="2.5"/>
<line x1="912.8" y1="476.3" x2="930.8" y2="465.4" stroke="#00ff00" stroke-width="1"/>
<line x1="914.2" y1="478.5" x2="932.2" y2="467.6" stroke="#00ff00" stroke-width="1"/>
<line x1="913.5" y1="477.4" x2="931.5" y2="466.5" stroke="#005a00" stroke-width="1.4"/>
<line x1="932.2" y1="465.4" x2="949.2" y2="476.3" stroke="#00ff00" stroke-width="1"/>
<line x1="930.8" y1="467.6" x2="947.8" y2="478.5" stroke="#00ff00" stroke-width="1"/>
<line x1="931.5" y1="466.5" x2="948.5" y2="477.4" stroke="#005a00" stroke-width="1.4"/>
<line x1="936.5" y1="463.5" x2="949.5" y2="478.4" stroke="#ff0000" stroke-width="1.3"/>
<line x1="941.7" y1="469.5" x2="944.3" y2="472.4" stroke="#8a8a00" stroke-width="2.5"/>
<line x1="947.8" y1="476.3" x2="965.8" y2="465.4" stroke="#00ff00" stroke-width="1"/>
<line x1="949.2" y1="478.5" x2="967.2" y2="467.6" stroke="#00ff00" stroke-width="1"/>
<line x1="948.5" y1="477.4" x2="966.5" y2="466.5" stroke="#005a00" stroke-width="1.4"/>
<line x1="967.2" y1="465.4" x2="983.2" y2="476.3" stroke="#00ff00" stroke-width="1"/>
<line x1="965.8" y1="467.6" x2="981.8" y2="478.5" stroke="#00ff00" stroke-width="1"/>
<line x1="966.5" y1="466.5" x2="982.5" y2="477.4" stroke="#005a00" stroke-width="1.4"/>
<line x1="971.5" y1="463.5" x2="983.5" y2="478.4" stroke="#ff0000" stroke-width="1.3"/>
<line x1="976.3" y1="469.5" x2="978.7" y2="472.4" stroke="#8a8a00" stroke-width="2.5"/>
<line x1="981.9" y1="476.3" x2="1000.9" y2="465.4" stroke="#00ff00" stroke-width="1"/>
<line x1="983.1" y1="478.5" x2="1002.1" y2="467.6" stroke="#00ff00" stroke-width="1"/>
<line x1="982.5" y1="477.4" x2="1001.5" y2="466.5" stroke="#005a00" stroke-width="1.4"/>
<line x1="1002.3" y1="465.5" x2="1016.3" y2="476.4" stroke="#00ff00" stroke-width="1"/>
<line x1="1000.7" y1="467.5" x2="1014.7" y2="478.4" stroke="#00ff00" stroke-width="1"/>
<line x1="1001.5" y1="466.5" x2="1015.5" y2="477.4" stroke="#005a00" stroke-width="1.4"/>
<line x1="1006.5" y1="463.5" x2="1016.5" y2="478.4" stroke="#ff0000" stroke-width="1.3"/>
<line x1="1010.5" y1="469.5" x2="1012.5" y2="472.4" stroke="#8a8a00" stroke-width="2.5"/>
<line x1="685" y1="475.9" x2="1036" y2="475.9" stroke="#00ff00" stroke-width="1.2"/>
<line x1="685" y1="479.4" x2="1036" y2="479.4" stroke="#00ff00" stroke-width="1.2"/>
<line x1="685" y1="477.7" x2="1036" y2="477.7" stroke="#007000" stroke-width="2.2"/>
<line x1="658" y1="487" x2="713" y2="464" stroke="#00ff00" stroke-width="1.3"/>
<line x1="659.4" y1="490.2" x2="714.4" y2="467.2" stroke="#00ff00" stroke-width="1"/>
<line x1="657.4" y1="485.6" x2="712.4" y2="462.6" stroke="#ff00ff" stroke-width="1.6"/>
<line x1="713" y1="464" x2="1010" y2="464" stroke="#00ff00" stroke-width="1.3"/>
<line x1="713" y1="467" x2="1010" y2="467" stroke="#00ff00" stroke-width="1.3"/>
<line x1="713" y1="465.5" x2="1010" y2="465.5" stroke="#007000" stroke-width="2"/>
<line x1="746" y1="461" x2="746" y2="464" stroke="#00ff00" stroke-width="1.5"/>
<line x1="779" y1="461" x2="779" y2="464" stroke="#00ff00" stroke-width="1.5"/>
<line x1="812" y1="461" x2="812" y2="464" stroke="#00ff00" stroke-width="1.5"/>
<line x1="845" y1="461" x2="845" y2="464" stroke="#00ff00" stroke-width="1.5"/>
<line x1="878" y1="461" x2="878" y2="464" stroke="#00ff00" stroke-width="1.5"/>
<line x1="911" y1="461" x2="911" y2="464" stroke="#00ff00" stroke-width="1.5"/>
<line x1="944" y1="461" x2="944" y2="464" stroke="#00ff00" stroke-width="1.5"/>
<line x1="977" y1="461" x2="977" y2="464" stroke="#00ff00" stroke-width="1.5"/>
<line x1="1010" y1="464" x2="1064" y2="487.6" stroke="#00ff00" stroke-width="1.3"/>
<line x1="1008.6" y1="467.2" x2="1062.6" y2="490.8" stroke="#00ff00" stroke-width="1"/>
<line x1="1010.6" y1="462.6" x2="1064.6" y2="486.2" stroke="#ff00ff" stroke-width="1.6"/>
<line x1="658.3" y1="481.5" x2="718.3" y2="459.3" stroke="#8c8c00" stroke-width="3.4"/>
<line x1="659.7" y1="485.2" x2="658.6" y2="482.4" stroke="#ffff00" stroke-width="1"/>
<rect x="656.5" y="478.9" width="2.4" height="2.4" fill="#ff0000"/>
<line x1="668.2" y1="482.1" x2="667.2" y2="479.2" stroke="#ffff00" stroke-width="1"/>
<rect x="665.1" y="475.7" width="2.4" height="2.4" fill="#ff0000"/>
<line x1="676.8" y1="478.9" x2="675.8" y2="476.1" stroke="#ffff00" stroke-width="1"/>
<rect x="673.7" y="472.5" width="2.4" height="2.4" fill="#ff0000"/>
<line x1="685.4" y1="475.7" x2="684.3" y2="472.9" stroke="#ffff00" stroke-width="1"/>
<rect x="682.3" y="469.4" width="2.4" height="2.4" fill="#ff0000"/>
<line x1="693.9" y1="472.6" x2="692.9" y2="469.7" stroke="#ffff00" stroke-width="1"/>
<rect x="690.8" y="466.2" width="2.4" height="2.4" fill="#ff0000"/>
<line x1="702.5" y1="469.4" x2="701.5" y2="466.6" stroke="#ffff00" stroke-width="1"/>
<rect x="699.4" y="463" width="2.4" height="2.4" fill="#ff0000"/>
<line x1="711.1" y1="466.2" x2="710" y2="463.4" stroke="#ffff00" stroke-width="1"/>
<rect x="708" y="459.9" width="2.4" height="2.4" fill="#ff0000"/>
<line x1="719.7" y1="463.1" x2="718.6" y2="460.2" stroke="#ffff00" stroke-width="1"/>
<rect x="716.5" y="456.7" width="2.4" height="2.4" fill="#ff0000"/>
<line x1="1014" y1="460.3" x2="1064" y2="482.1" stroke="#8c8c00" stroke-width="3.4"/>
<line x1="1012.4" y1="464" x2="1013.6" y2="461.2" stroke="#ffff00" stroke-width="1"/>
<rect x="1013.4" y="457.7" width="2.4" height="2.4" fill="#ff0000"/>
<line x1="1020.7" y1="467.6" x2="1021.9" y2="464.9" stroke="#ffff00" stroke-width="1"/>
<rect x="1021.7" y="461.4" width="2.4" height="2.4" fill="#ff0000"/>
<line x1="1029.1" y1="471.2" x2="1030.3" y2="468.5" stroke="#ffff00" stroke-width="1"/>
<rect x="1030.1" y="465" width="2.4" height="2.4" fill="#ff0000"/>
<line x1="1037.4" y1="474.9" x2="1038.6" y2="472.1" stroke="#ffff00" stroke-width="1"/>
<rect x="1038.4" y="468.6" width="2.4" height="2.4" fill="#ff0000"/>
<line x1="1045.7" y1="478.5" x2="1046.9" y2="475.8" stroke="#ffff00" stroke-width="1"/>
<rect x="1046.7" y="472.3" width="2.4" height="2.4" fill="#ff0000"/>
<line x1="1054.1" y1="482.2" x2="1055.3" y2="479.4" stroke="#ffff00" stroke-width="1"/>
<rect x="1055.1" y="475.9" width="2.4" height="2.4" fill="#ff0000"/>
<line x1="1062.4" y1="485.8" x2="1063.6" y2="483.1" stroke="#ffff00" stroke-width="1"/>
<rect x="1063.4" y="479.6" width="2.4" height="2.4" fill="#ff0000"/>
<rect x="682.5" y="478.9" width="5" height="7" fill="#202020" stroke="#e0e0e0" stroke-width="1.2"/>
<path d="M681 489.4 L685 485.9 L689 489.4Z" fill="none" stroke="#e8e8e8" stroke-width="1.2"/>
<line x1="685" y1="489.4" x2="685" y2="499.8" stroke="#d8d800" stroke-width="1.2"/>
<rect x="823.5" y="478.9" width="5" height="7" fill="#202020" stroke="#e0e0e0" stroke-width="1.2"/>
<path d="M822 489.4 L826 485.9 L830 489.4Z" fill="none" stroke="#e8e8e8" stroke-width="1.2"/>
<line x1="826" y1="489.4" x2="826" y2="499.8" stroke="#d8d800" stroke-width="1.2"/>
<rect x="893.5" y="478.9" width="5" height="7" fill="#202020" stroke="#e0e0e0" stroke-width="1.2"/>
<path d="M892 489.4 L896 485.9 L900 489.4Z" fill="none" stroke="#e8e8e8" stroke-width="1.2"/>
<line x1="896" y1="489.4" x2="896" y2="499.8" stroke="#d8d800" stroke-width="1.2"/>
<rect x="1033.5" y="478.9" width="5" height="7" fill="#202020" stroke="#e0e0e0" stroke-width="1.2"/>
<path d="M1032 489.4 L1036 485.9 L1040 489.4Z" fill="none" stroke="#e8e8e8" stroke-width="1.2"/>
<line x1="1036" y1="489.4" x2="1036" y2="499.8" stroke="#d8d800" stroke-width="1.2"/>
<line x1="705" y1="483.5" x2="881" y2="483.5" stroke="#ff0000" stroke-width="1.2"/>
<line x1="708" y1="480" x2="708" y2="487" stroke="#ffff00" stroke-width="1"/>
<path d="M710.5 482.5 L708 483.5 L710.5 484.5Z" fill="#ff0000"/>
<line x1="739" y1="480" x2="739" y2="487" stroke="#ffff00" stroke-width="1"/>
<path d="M736.5 482.5 L739 483.5 L736.5 484.5Z" fill="#ff0000"/>
<line x1="742" y1="480" x2="742" y2="487" stroke="#ffff00" stroke-width="1"/>
<path d="M739.5 482.5 L742 483.5 L739.5 484.5Z" fill="#ff0000"/>
<line x1="773" y1="480" x2="773" y2="487" stroke="#ffff00" stroke-width="1"/>
<path d="M770.5 482.5 L773 483.5 L770.5 484.5Z" fill="#ff0000"/>
<line x1="776" y1="480" x2="776" y2="487" stroke="#ffff00" stroke-width="1"/>
<path d="M773.5 482.5 L776 483.5 L773.5 484.5Z" fill="#ff0000"/>
<line x1="808" y1="480" x2="808" y2="487" stroke="#ffff00" stroke-width="1"/>
<path d="M805.5 482.5 L808 483.5 L805.5 484.5Z" fill="#ff0000"/>
<line x1="811" y1="480" x2="811" y2="487" stroke="#ffff00" stroke-width="1"/>
<path d="M808.5 482.5 L811 483.5 L808.5 484.5Z" fill="#ff0000"/>
<line x1="844" y1="480" x2="844" y2="487" stroke="#ffff00" stroke-width="1"/>
<path d="M841.5 482.5 L844 483.5 L841.5 484.5Z" fill="#ff0000"/>
<line x1="847" y1="480" x2="847" y2="487" stroke="#ffff00" stroke-width="1"/>
<path d="M844.5 482.5 L847 483.5 L844.5 484.5Z" fill="#ff0000"/>
<line x1="878" y1="480" x2="878" y2="487" stroke="#ffff00" stroke-width="1"/>
<path d="M875.5 482.5 L878 483.5 L875.5 484.5Z" fill="#ff0000"/>
<text x="724.2" y="486" fill="#9a9a00" font-size="6.5" text-anchor="middle" font-weight="bold" textLength="14" lengthAdjust="spacingAndGlyphs">130.0</text>
<text x="757.5" y="486" fill="#9a9a00" font-size="6.5" text-anchor="middle" font-weight="bold" textLength="14" lengthAdjust="spacingAndGlyphs">130.0</text>
<text x="792" y="486" fill="#9a9a00" font-size="6.5" text-anchor="middle" font-weight="bold" textLength="14" lengthAdjust="spacingAndGlyphs">130.0</text>
<text x="827.5" y="486" fill="#9a9a00" font-size="6.5" text-anchor="middle" font-weight="bold" textLength="14" lengthAdjust="spacingAndGlyphs">130.0</text>
<text x="861.8" y="486" fill="#9a9a00" font-size="6.5" text-anchor="middle" font-weight="bold" textLength="14" lengthAdjust="spacingAndGlyphs">130.0</text>
<line x1="682" y1="495.8" x2="1039" y2="495.8" stroke="#ff0000" stroke-width="1.3"/>
<text x="755.5" y="498.3" fill="#9a9a00" font-size="6.5" text-anchor="middle" font-weight="bold" textLength="16" lengthAdjust="spacingAndGlyphs">600.0</text>
<text x="861" y="498.3" fill="#9a9a00" font-size="6.5" text-anchor="middle" font-weight="bold" textLength="16" lengthAdjust="spacingAndGlyphs">300.0</text>
<text x="966" y="498.3" fill="#9a9a00" font-size="6.5" text-anchor="middle" font-weight="bold" textLength="16" lengthAdjust="spacingAndGlyphs">600.0</text>
<path d="M1010 463 L1015 437.9 Q1015.3 436.4 1017 436.4 L1047 436.4" fill="none" stroke="#9aaa00" stroke-width="1.1"/>
<path d="M1012.5 463.8 L1017.2 442.1 Q1017.5 440.6 1019.2 440.6 L1047 440.6" fill="none" stroke="#9aaa00" stroke-width="1.1"/>
<path d="M1015 464.6 L1019.4 445.8 Q1019.7 444.3 1021.4 444.3 L1047 444.3" fill="none" stroke="#9aaa00" stroke-width="1.1"/>
<path d="M1017.5 465.4 L1021.6 451.2 Q1021.9 449.8 1023.6 449.8 L1047 449.8" fill="none" stroke="#9aaa00" stroke-width="1.1"/>
<text x="1049" y="437.6" fill="#c4dc00" font-size="5.4" font-weight="bold" textLength="32" lengthAdjust="spacingAndGlyphs">Atap Genteng</text>
<text x="1049" y="442.1" fill="#c4dc00" font-size="5.4" font-weight="bold" textLength="37" lengthAdjust="spacingAndGlyphs">Chanel C.75.100</text>
<text x="1049" y="446.8" fill="#c4dc00" font-size="5.4" font-weight="bold" textLength="37" lengthAdjust="spacingAndGlyphs">Chanel C.75.100</text>
<text x="1049" y="451.8" fill="#c4dc00" font-size="5.4" font-weight="bold" textLength="24" lengthAdjust="spacingAndGlyphs">Reng 0.45</text>
<rect x="469" y="230.5" width="36" height="3" fill="#ffffff"/>
<rect x="491" y="228" width="14" height="5.5" fill="#ffffff"/>
<line x1="491" y1="228.8" x2="571" y2="228.8" stroke="#ffffff" stroke-width="1.6"/>
<rect x="549.5" y="222.5" width="12" height="12" fill="#000" stroke="#fff" stroke-width="1.3"/>
<path d="M551.5 224.5 H554.5 L552.5 229" fill="none" stroke="#fff" stroke-width="1.2"/>
<path d="M551 233 L553 230 L555 233" fill="none" stroke="#fff" stroke-width="1.2"/>
<rect x="556.5" y="224" width="2" height="4" fill="#ffffff"/>
<rect x="556.5" y="230" width="2.5" height="3" fill="#ffffff"/>
<line x1="561.5" y1="228.8" x2="571" y2="228.8" stroke="#ffffff" stroke-width="1.6"/>
<text x="498" y="227" fill="#a00000" font-size="6.8" font-weight="bold" textLength="49" lengthAdjust="spacingAndGlyphs">RANKA ATAP K 1</text>
<rect x="470" y="358.5" width="36" height="3" fill="#ffffff"/>
<rect x="492" y="356" width="14" height="5.5" fill="#ffffff"/>
<line x1="492" y1="356.8" x2="572" y2="356.8" stroke="#ffffff" stroke-width="1.6"/>
<rect x="550.5" y="350.5" width="12" height="12" fill="#000" stroke="#fff" stroke-width="1.3"/>
<path d="M552.5 352.5 H555.5 L553.5 357" fill="none" stroke="#fff" stroke-width="1.2"/>
<path d="M552 361 L554 358 L556 361" fill="none" stroke="#fff" stroke-width="1.2"/>
<rect x="557.5" y="352" width="2" height="4" fill="#ffffff"/>
<rect x="557.5" y="358" width="2.5" height="3" fill="#ffffff"/>
<line x1="562.5" y1="356.8" x2="572" y2="356.8" stroke="#ffffff" stroke-width="1.6"/>
<text x="499" y="355" fill="#a00000" font-size="6.8" font-weight="bold" textLength="49" lengthAdjust="spacingAndGlyphs">RANKA ATAP K 2</text>
<rect x="462" y="475" width="36" height="3" fill="#ffffff"/>
<rect x="484" y="472.5" width="14" height="5.5" fill="#ffffff"/>
<line x1="484" y1="473.3" x2="564" y2="473.3" stroke="#ffffff" stroke-width="1.6"/>
<rect x="542.5" y="467.0" width="12" height="12" fill="#000" stroke="#fff" stroke-width="1.3"/>
<path d="M544.5 469.0 H547.5 L545.5 473.5" fill="none" stroke="#fff" stroke-width="1.2"/>
<path d="M544 477.5 L546 474.5 L548 477.5" fill="none" stroke="#fff" stroke-width="1.2"/>
<rect x="549.5" y="468.5" width="2" height="4" fill="#ffffff"/>
<rect x="549.5" y="474.5" width="2.5" height="3" fill="#ffffff"/>
<line x1="554.5" y1="473.3" x2="564" y2="473.3" stroke="#ffffff" stroke-width="1.6"/>
<text x="491" y="471.5" fill="#a00000" font-size="6.8" font-weight="bold" textLength="49" lengthAdjust="spacingAndGlyphs">RANKA ATAP K 3</text>
<rect x="473" y="568.5" width="36" height="3" fill="#ffffff"/>
<rect x="495" y="566" width="14" height="5.5" fill="#ffffff"/>
<line x1="495" y1="566.8" x2="575" y2="566.8" stroke="#ffffff" stroke-width="1.6"/>
<rect x="553.5" y="560.5" width="12" height="12" fill="#000" stroke="#fff" stroke-width="1.3"/>
<path d="M555.5 562.5 H558.5 L556.5 567" fill="none" stroke="#fff" stroke-width="1.2"/>
<path d="M555 571 L557 568 L559 571" fill="none" stroke="#fff" stroke-width="1.2"/>
<rect x="560.5" y="562" width="2" height="4" fill="#ffffff"/>
<rect x="560.5" y="568" width="2.5" height="3" fill="#ffffff"/>
<line x1="565.5" y1="566.8" x2="575" y2="566.8" stroke="#ffffff" stroke-width="1.6"/>
<text x="502" y="565" fill="#a00000" font-size="6.8" font-weight="bold" textLength="49" lengthAdjust="spacingAndGlyphs">RANKA ATAP K 4</text>
<rect x="649" y="263.3" width="31" height="5" fill="#a00000"/>
<line x1="649" y1="268.8" x2="696" y2="268.8" stroke="#ffffff" stroke-width="1.3"/>
<rect x="635" y="270.3" width="23" height="2.3" fill="#ffffff"/>
<line x1="658" y1="268.8" x2="658" y2="272.6" stroke="#ffffff" stroke-width="1.3"/>
<rect x="681.5" y="263.6" width="8" height="8" fill="#000" stroke="#fff" stroke-width="1.2"/>
<rect x="683" y="264.8" width="1.3" height="3" fill="#fff"/>
<rect x="685.5" y="264.8" width="2" height="3.5" fill="#fff"/>
<rect x="683" y="269.5" width="3" height="1.2" fill="#fff"/>
<rect x="645" y="347" width="31" height="5" fill="#a00000"/>
<line x1="645" y1="352.5" x2="692" y2="352.5" stroke="#ffffff" stroke-width="1.3"/>
<rect x="626" y="354" width="22" height="2.3" fill="#ffffff"/>
<line x1="648" y1="352.5" x2="648" y2="356.3" stroke="#ffffff" stroke-width="1.3"/>
<rect x="677.5" y="347.3" width="8" height="8" fill="#000" stroke="#fff" stroke-width="1.2"/>
<rect x="679" y="348.5" width="1.3" height="3" fill="#fff"/>
<rect x="681.5" y="348.5" width="2" height="3.5" fill="#fff"/>
<rect x="679" y="353.2" width="3" height="1.2" fill="#fff"/>
<rect x="649" y="439" width="31" height="5" fill="#a00000"/>
<line x1="649" y1="444.5" x2="696" y2="444.5" stroke="#ffffff" stroke-width="1.3"/>
<rect x="628" y="446" width="22" height="2.3" fill="#ffffff"/>
<line x1="650" y1="444.5" x2="650" y2="448.3" stroke="#ffffff" stroke-width="1.3"/>
<rect x="681.5" y="439.3" width="8" height="8" fill="#000" stroke="#fff" stroke-width="1.2"/>
<rect x="683" y="440.5" width="1.3" height="3" fill="#fff"/>
<rect x="685.5" y="440.5" width="2" height="3.5" fill="#fff"/>
<rect x="683" y="445.2" width="3" height="1.2" fill="#fff"/>
<rect x="653" y="514" width="31" height="5" fill="#a00000"/>
<line x1="653" y1="519.5" x2="700" y2="519.5" stroke="#ffffff" stroke-width="1.3"/>
<rect x="634" y="521" width="22" height="2.3" fill="#ffffff"/>
<line x1="656" y1="519.5" x2="656" y2="523.3" stroke="#ffffff" stroke-width="1.3"/>
<rect x="685.5" y="514.3" width="8" height="8" fill="#000" stroke="#fff" stroke-width="1.2"/>
<rect x="687" y="515.5" width="1.3" height="3" fill="#fff"/>
<rect x="689.5" y="515.5" width="2" height="3.5" fill="#fff"/>
<rect x="687" y="520.2" width="3" height="1.2" fill="#fff"/>
<line x1="1076" y1="455" x2="1200" y2="527.6" stroke="#b00000" stroke-width="1"/>
<line x1="1170" y1="401" x2="1170" y2="619" stroke="#008a00" stroke-width="1.3"/>
<rect x="1166.5" y="505.5" width="7" height="7" fill="none" stroke="#008a00" stroke-width="1"/>
</svg></div>
<!-- tabs -->
<div class="abs" style="left:0;top:632px;width:1200px;height:17px;background:#f0f0f0"></div>
<div class="abs" style="left:0;top:632px;width:42px;height:16px;background:#000"></div>
<div class="abs" style="left:4px;top:632px;font-size:12.5px;color:#f0f0f0;line-height:16px;transform:scaleX(.9);transform-origin:0 0">Model</div>
<svg class="abs" style="left:38px;top:632px" width="66" height="17"><path d="M5 0 L1 16 M6 0 H61 L57 16 H2" fill="none" stroke="#333" stroke-width="1.2"/><path d="M1 16 L0 16" stroke="#333"/></svg>
<div class="abs" style="left:49px;top:632px;font-size:12.5px;color:#1a1a2a;line-height:16px;transform:scaleX(.92);transform-origin:0 0">Layout1</div>
<div class="abs" style="left:808px;top:633px;width:6px;height:15px;background:#c8c8c8"></div>
<svg class="abs" style="left:820px;top:636px" width="10" height="10"><path d="M6 1 L2.5 5 L6 9" fill="none" stroke="#333" stroke-width="1.6"/></svg>
<div class="abs" style="left:1049px;top:633px;width:19px;height:15px;background:#cdcdcd"></div>
<div class="abs" style="left:0;top:649px;width:1200px;height:6px;background:#fafafa"></div>
<div class="abs" style="left:0;top:655px;width:1200px;height:3px;background:#7a7a7a"></div>
<div class="abs" style="left:0;top:658px;width:1200px;height:7px;background:#f0f0f0"></div>
<div class="abs" style="left:0;top:665px;width:1200px;height:24px;background:#18ad18"></div>
<div class="abs" style="left:0;top:689px;width:1200px;height:2px;background:#f8f8f8"></div>
<div class="abs" style="left:0;top:691px;width:1200px;height:1.5px;background:#c4c4c4"></div>
<!-- status -->
<div class="abs" style="left:-4px;top:697px;width:57px;height:20px;border:2px solid #c4c4c4;font-size:13px;line-height:17px;color:#222;padding-left:0">0</div>
<div class="btn" style="left:58px;width:36px"><span>SNAP</span></div>
<div class="btn" style="left:98px;width:34px"><span>GRID</span></div>
<div class="btn" style="left:137px;width:47px"><span>ORTHO</span></div>
<div class="btn" style="left:188px;width:44px"><span>POLAR</span></div>
<div class="btn on" style="left:236px;width:45px"><span>OSNAP</span></div>
<div class="btn" style="left:285px;width:53px"><span>OTRACK</span></div>
<div class="btn" style="left:343px;width:36px"><span>DUCS</span></div>
<div class="btn" style="left:384px;width:29px"><span>DYN</span></div>
<div class="btn" style="left:418px;width:29px"><span>LWT</span></div>
<div class="btn on" style="left:452px;width:46px"><span>MODEL</span></div>
<div class="abs" style="left:0;top:717px;width:1200px;height:3px;background:#0e3a6a"></div>
</body></html>
